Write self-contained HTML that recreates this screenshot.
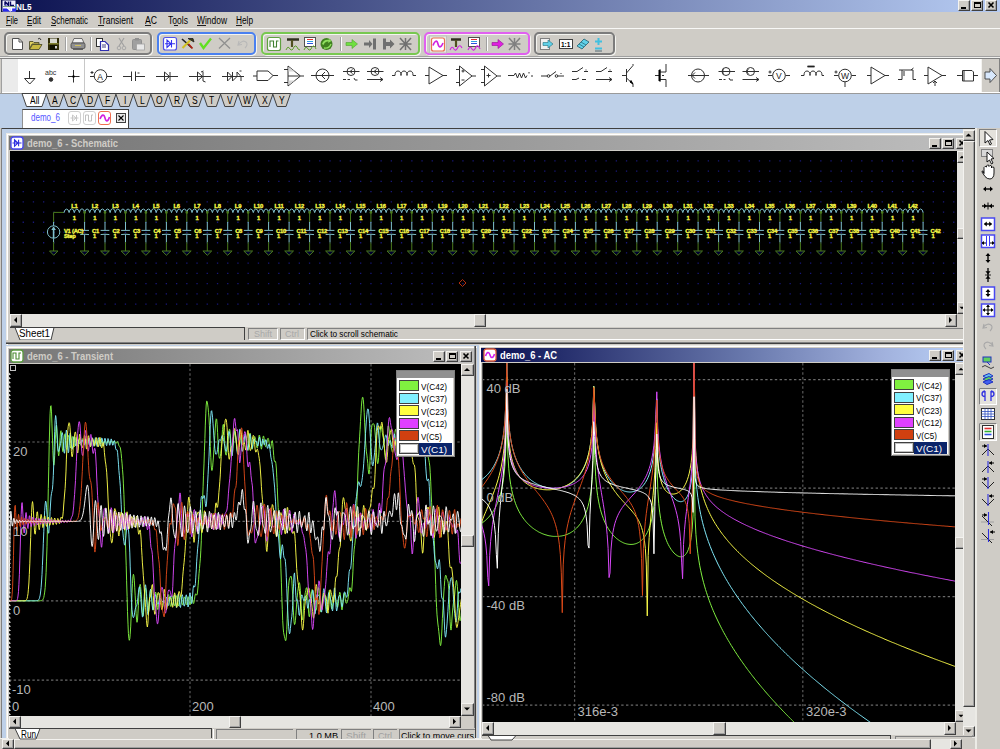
<!DOCTYPE html><html><head><meta charset="utf-8"><style>
*{margin:0;padding:0;box-sizing:border-box}
html,body{width:1000px;height:749px;overflow:hidden;background:#cfccc6;font-family:"Liberation Sans",sans-serif;position:relative}
.a{position:absolute}
.t{position:absolute;white-space:nowrap;line-height:1;transform-origin:0 0}
svg{position:absolute;overflow:visible}
</style></head><body>
<div class="a" style="left:0px;top:0px;width:1000px;height:12px;background:linear-gradient(to right,rgb(11,17,80),rgb(182,203,242))"></div><div class="a" style="left:0px;top:0px;width:1px;height:12px;background:#cfccc6"></div><svg style="left:2px;top:0px" width="14" height="12" viewBox="0 0 14 12"><rect x="0.5" y="0.5" width="13" height="11" fill="#f0f0ff"/><rect x="1" y="8.5" width="13" height="3" fill="#2828f0"/><path d="M3 1.5 V5.5 M3 1.5 L6.5 5.5 V1.5 M8.5 1.5 V5.5 H12" stroke="#080860" stroke-width="1.4" fill="none"/><path d="M3 4.5 L6.5 5.5 L3 5.5 Z" fill="#2020c0"/><path d="M1 6.5 H13.5" stroke="#80a080" stroke-width="1"/><path d="M5 7.5 L8 10.5 L8 7.5 M9.5 7.5 V11" stroke="#fff" stroke-width="1.3" fill="none"/></svg><div class="t" style="left:16px;top:1.5px;font-size:9.5px;color:#fff;font-weight:bold;transform:scaleX(0.864);">NL5</div><div class="a" style="left:958px;top:0px;width:12px;height:11px;background:#cfccc6;border-top:1px solid #f4f3f0;border-left:1px solid #f4f3f0;border-right:1px solid #404040;border-bottom:1px solid #404040;box-shadow:inset -1px -1px 0 #a0a0a0"></div><div class="a" style="left:971px;top:0px;width:12px;height:11px;background:#cfccc6;border-top:1px solid #f4f3f0;border-left:1px solid #f4f3f0;border-right:1px solid #404040;border-bottom:1px solid #404040;box-shadow:inset -1px -1px 0 #a0a0a0"></div><div class="a" style="left:985px;top:0px;width:12px;height:11px;background:#cfccc6;border-top:1px solid #f4f3f0;border-left:1px solid #f4f3f0;border-right:1px solid #404040;border-bottom:1px solid #404040;box-shadow:inset -1px -1px 0 #a0a0a0"></div><div class="a" style="left:961px;top:7px;width:5px;height:2px;background:#000"></div><div class="a" style="left:974px;top:2px;width:7px;height:6px;border:1px solid #000;border-top:2px solid #000"></div><svg style="left:985px;top:0px" width="12" height="11" viewBox="0 0 12 11"><path d="M3.5 2.5 L8.5 7.5 M8.5 2.5 L3.5 7.5" stroke="#000" stroke-width="1.6"/></svg><div class="t" style="left:6px;top:16px;font-size:10px;color:#000;transform:scaleX(0.745);">File</div><div class="t" style="left:27px;top:16px;font-size:10px;color:#000;transform:scaleX(0.812);">Edit</div><div class="t" style="left:51px;top:16px;font-size:10px;color:#000;transform:scaleX(0.792);">Schematic</div><div class="t" style="left:98px;top:16px;font-size:10px;color:#000;transform:scaleX(0.847);">Transient</div><div class="t" style="left:145px;top:16px;font-size:10px;color:#000;transform:scaleX(0.864);">AC</div><div class="t" style="left:168px;top:16px;font-size:10px;color:#000;transform:scaleX(0.857);">Tools</div><div class="t" style="left:197px;top:16px;font-size:10px;color:#000;transform:scaleX(0.843);">Window</div><div class="t" style="left:236px;top:16px;font-size:10px;color:#000;transform:scaleX(0.826);">Help</div><div class="a" style="left:6px;top:25px;width:5px;height:1px;background:#202020"></div><div class="a" style="left:27px;top:25px;width:5px;height:1px;background:#202020"></div><div class="a" style="left:51px;top:25px;width:5px;height:1px;background:#202020"></div><div class="a" style="left:98px;top:25px;width:6px;height:1px;background:#202020"></div><div class="a" style="left:145px;top:25px;width:6px;height:1px;background:#202020"></div><div class="a" style="left:174px;top:25px;width:4px;height:1px;background:#202020"></div><div class="a" style="left:197px;top:25px;width:9px;height:1px;background:#202020"></div><div class="a" style="left:236px;top:25px;width:6px;height:1px;background:#202020"></div><div class="a" style="left:0px;top:28px;width:1000px;height:1px;background:#f8f8f6"></div><div class="a" style="left:0px;top:56px;width:1000px;height:1px;background:#a0a0a0"></div><div class="a" style="left:0px;top:57px;width:1000px;height:1px;background:#f0f0ee"></div><div class="a" style="left:4px;top:32px;width:148px;height:23px;border:2px solid #7c7c7c;border-radius:5px;box-shadow:inset 1px 1px 0 #f4f4f0,1px 1px 0 #f4f4f0"></div><div class="a" style="left:157px;top:32px;width:99px;height:23px;border:2px solid #4a80f0;border-radius:5px;box-shadow:inset 1px 1px 0 #f4f4f0,1px 1px 0 #f4f4f0"></div><div class="a" style="left:261px;top:32px;width:159px;height:23px;border:2px solid #78c850;border-radius:5px;box-shadow:inset 1px 1px 0 #f4f4f0,1px 1px 0 #f4f4f0"></div><div class="a" style="left:424px;top:32px;width:106px;height:23px;border:2px solid #e060f0;border-radius:5px;box-shadow:inset 1px 1px 0 #f4f4f0,1px 1px 0 #f4f4f0"></div><div class="a" style="left:534px;top:32px;width:81px;height:23px;border:2px solid #7c7c7c;border-radius:5px;box-shadow:inset 1px 1px 0 #f4f4f0,1px 1px 0 #f4f4f0"></div><div class="a" style="left:0px;top:58px;width:1000px;height:1px;background:#808080"></div><div class="a" style="left:1px;top:59px;width:999px;height:34px;background:#fff"></div><div class="a" style="left:1px;top:59px;width:1px;height:34px;background:#a0a0a0"></div><div class="a" style="left:2px;top:59px;width:16px;height:33px;background:#ebebeb"></div><div class="a" style="left:84px;top:59px;width:1px;height:33px;background:#c8c8c8"></div><div class="a" style="left:981px;top:59px;width:19px;height:33px;background:#cfccc6;border-left:1px solid #f4f3f0;border-right:1px solid #808080"></div><div class="a" style="left:0px;top:93px;width:1000px;height:1px;background:#9a9a9a"></div><div class="a" style="left:0px;top:94px;width:1000px;height:34px;background:#bed0e8"></div><div class="a" style="left:0px;top:128px;width:975px;height:621px;background:#bed0e8"></div><div class="a" style="left:0px;top:128px;width:975px;height:1px;background:#404040"></div><div class="a" style="left:0px;top:128px;width:2px;height:621px;background:#cfccc6"></div><div class="a" style="left:1px;top:128px;width:1px;height:621px;background:#808080"></div><svg style="left:0px;top:0px" width="1000" height="749" viewBox="0 0 1000 749"><polygon points="22,93.5 26.5,106.5 42,106.5 46.5,93.5" fill="#fff" stroke="#404040" stroke-width="1"/><polygon points="46,93.5 50.5,106.5 59.43,106.5 63.93,93.5" fill="#cfccc6" stroke="#404040" stroke-width="1"/><polygon points="63.43,93.5 67.93,106.5 76.86,106.5 81.36,93.5" fill="#cfccc6" stroke="#404040" stroke-width="1"/><polygon points="80.86,93.5 85.36,106.5 94.28999999999999,106.5 98.78999999999999,93.5" fill="#cfccc6" stroke="#404040" stroke-width="1"/><polygon points="98.28999999999999,93.5 102.78999999999999,106.5 111.72,106.5 116.22,93.5" fill="#cfccc6" stroke="#404040" stroke-width="1"/><polygon points="115.72,93.5 120.22,106.5 129.15,106.5 133.65,93.5" fill="#cfccc6" stroke="#404040" stroke-width="1"/><polygon points="133.15,93.5 137.65,106.5 146.57999999999998,106.5 151.07999999999998,93.5" fill="#cfccc6" stroke="#404040" stroke-width="1"/><polygon points="150.57999999999998,93.5 155.07999999999998,106.5 164.01,106.5 168.51,93.5" fill="#cfccc6" stroke="#404040" stroke-width="1"/><polygon points="168.01,93.5 172.51,106.5 181.44,106.5 185.94,93.5" fill="#cfccc6" stroke="#404040" stroke-width="1"/><polygon points="185.44,93.5 189.94,106.5 198.87,106.5 203.37,93.5" fill="#cfccc6" stroke="#404040" stroke-width="1"/><polygon points="202.87,93.5 207.37,106.5 216.3,106.5 220.8,93.5" fill="#cfccc6" stroke="#404040" stroke-width="1"/><polygon points="220.3,93.5 224.8,106.5 233.73,106.5 238.23,93.5" fill="#cfccc6" stroke="#404040" stroke-width="1"/><polygon points="237.73,93.5 242.23,106.5 251.16,106.5 255.66,93.5" fill="#cfccc6" stroke="#404040" stroke-width="1"/><polygon points="255.16,93.5 259.65999999999997,106.5 268.59000000000003,106.5 273.09000000000003,93.5" fill="#cfccc6" stroke="#404040" stroke-width="1"/><polygon points="272.59000000000003,93.5 277.09000000000003,106.5 286.02,106.5 290.52,93.5" fill="#cfccc6" stroke="#404040" stroke-width="1"/></svg><div class="t" style="left:29.7751953125px;top:96px;font-size:10px;color:#000;transform:scaleX(0.850);">All</div><div class="t" style="left:52.379453125000005px;top:96px;font-size:10px;color:#000;transform:scaleX(0.850);">A</div><div class="t" style="left:69.57537109375px;top:96px;font-size:10px;color:#000;transform:scaleX(0.850);">C</div><div class="t" style="left:87.00537109374999px;top:96px;font-size:10px;color:#000;transform:scaleX(0.850);">D</div><div class="t" style="left:104.90851562499999px;top:96px;font-size:10px;color:#000;transform:scaleX(0.850);">F</div><div class="t" style="left:123.75462890625px;top:96px;font-size:10px;color:#000;transform:scaleX(0.850);">I</div><div class="t" style="left:140.00093750000002px;top:96px;font-size:10px;color:#000;transform:scaleX(0.850);">L</div><div class="t" style="left:156.48962890624998px;top:96px;font-size:10px;color:#000;transform:scaleX(0.850);">O</div><div class="t" style="left:174.15537109375px;top:96px;font-size:10px;color:#000;transform:scaleX(0.850);">R</div><div class="t" style="left:191.819453125px;top:96px;font-size:10px;color:#000;transform:scaleX(0.850);">S</div><div class="t" style="left:209.48851562500002px;top:96px;font-size:10px;color:#000;transform:scaleX(0.850);">T</div><div class="t" style="left:226.67945312499998px;top:96px;font-size:10px;color:#000;transform:scaleX(0.850);">V</div><div class="t" style="left:242.93406249999998px;top:96px;font-size:10px;color:#000;transform:scaleX(0.850);">W</div><div class="t" style="left:261.539453125px;top:96px;font-size:10px;color:#000;transform:scaleX(0.850);">X</div><div class="t" style="left:278.96945312500003px;top:96px;font-size:10px;color:#000;transform:scaleX(0.850);">Y</div><div class="a" style="left:22px;top:109px;width:107px;height:19px;background:#fff;border-top:1px solid #404040;border-left:1px solid #909090;border-right:1px solid #404040"></div><div class="t" style="left:31px;top:113px;font-size:10px;color:#5555ff;transform:scaleX(0.802);">demo_6</div><svg style="left:68px;top:111px" width="58" height="15" viewBox="0 0 58 15"><rect x="0.5" y="0.5" width="12" height="13" rx="2.5" fill="#fff" stroke="#d0d0d0"/>
<path d="M2.5 7 H10.5 M4.5 4 V10 L8 7 Z M8.5 4 V10" stroke="#c8c8c8" fill="none"/>
<rect x="15.5" y="0.5" width="12" height="13" rx="2.5" fill="#fff" stroke="#d0d0d0"/>
<path d="M17.5 10 V4 H20.5 V10 H23.5 V4 H25" stroke="#c0c0c0" fill="none"/>
<rect x="30.5" y="0.5" width="12" height="13" rx="2.5" fill="#fff" stroke="#f07050"/>
<path d="M32 8 C34 3,36 3,37 7 C38 11,40 11,41.5 6" stroke="#d020e0" stroke-width="1.6" fill="none"/>
<rect x="48.5" y="2.5" width="9" height="9" fill="#e8e8e8" stroke="#404040"/>
<path d="M50.5 4.5 L55.5 9.5 M55.5 4.5 L50.5 9.5" stroke="#000" stroke-width="1.1"/></svg><div class="a" style="left:6px;top:133px;width:980px;height:212px;background:#cfccc6;border-top:1px solid #ecebe6;border-left:1px solid #ecebe6;box-shadow:inset 1px 1px 0 #fff"></div><div class="a" style="left:9px;top:136px;width:981px;height:14px;background:linear-gradient(to right,rgb(117,117,117),rgb(191,191,191))"></div><div class="a" style="left:9px;top:150px;width:960px;height:1px;background:#cfccc6"></div><div class="a" style="left:10px;top:151px;width:947px;height:163px;background:#000"></div><div class="t" style="left:27px;top:139px;font-size:10px;color:#cfccc6;font-weight:bold;transform:scaleX(0.941);">demo_6 - Schematic</div><div class="a" style="left:929px;top:138px;width:12px;height:11px;background:#cfccc6;border-top:1px solid #f4f3f0;border-left:1px solid #f4f3f0;border-right:1px solid #404040;border-bottom:1px solid #404040;box-shadow:inset -1px -1px 0 #a0a0a0"></div><div class="a" style="left:942px;top:138px;width:12px;height:11px;background:#cfccc6;border-top:1px solid #f4f3f0;border-left:1px solid #f4f3f0;border-right:1px solid #404040;border-bottom:1px solid #404040;box-shadow:inset -1px -1px 0 #a0a0a0"></div><div class="a" style="left:956px;top:138px;width:12px;height:11px;background:#cfccc6;border-top:1px solid #f4f3f0;border-left:1px solid #f4f3f0;border-right:1px solid #404040;border-bottom:1px solid #404040;box-shadow:inset -1px -1px 0 #a0a0a0"></div><div class="a" style="left:932px;top:145px;width:5px;height:2px;background:#000"></div><div class="a" style="left:945px;top:140px;width:7px;height:6px;border:1px solid #000;border-top:2px solid #000"></div><svg style="left:956px;top:138px" width="12" height="11" viewBox="0 0 12 11"><path d="M3.5 2.5 L8.5 7.5 M8.5 2.5 L3.5 7.5" stroke="#000" stroke-width="1.6"/></svg><div class="a" style="left:957px;top:151px;width:6px;height:163px;background:#e6e5e1"></div><div class="a" style="left:957px;top:151px;width:12px;height:12px;background:#cfccc6;border-top:1px solid #f4f3f0;border-left:1px solid #f4f3f0;border-right:1px solid #404040;border-bottom:1px solid #404040;box-shadow:inset -1px -1px 0 #a0a0a0"></div><svg style="left:0px;top:0px" width="1000" height="749" viewBox="0 0 1000 749"><polygon points="959.5,158.25 964.5,158.25 962,155.75" fill="#000"/></svg><div class="a" style="left:957px;top:228px;width:12px;height:11px;background:#cfccc6;border-top:1px solid #f4f3f0;border-left:1px solid #f4f3f0;border-right:1px solid #404040;border-bottom:1px solid #404040;box-shadow:inset -1px -1px 0 #a0a0a0"></div><div class="a" style="left:957px;top:302px;width:12px;height:12px;background:#cfccc6;border-top:1px solid #f4f3f0;border-left:1px solid #f4f3f0;border-right:1px solid #404040;border-bottom:1px solid #404040;box-shadow:inset -1px -1px 0 #a0a0a0"></div><svg style="left:0px;top:0px" width="1000" height="749" viewBox="0 0 1000 749"><polygon points="959.5,306.75 964.5,306.75 962,309.25" fill="#000"/></svg><div class="a" style="left:10px;top:314px;width:947px;height:13px;background:#e6e5e1"></div><div class="a" style="left:10px;top:314px;width:12px;height:13px;background:#cfccc6;border-top:1px solid #f4f3f0;border-left:1px solid #f4f3f0;border-right:1px solid #404040;border-bottom:1px solid #404040;box-shadow:inset -1px -1px 0 #a0a0a0"></div><svg style="left:0px;top:0px" width="1000" height="749" viewBox="0 0 1000 749"><polygon points="17.0,317.0 17.0,323.0 14.0,320.0" fill="#000"/></svg><div class="a" style="left:474px;top:314px;width:12px;height:13px;background:#cfccc6;border-top:1px solid #f4f3f0;border-left:1px solid #f4f3f0;border-right:1px solid #404040;border-bottom:1px solid #404040;box-shadow:inset -1px -1px 0 #a0a0a0"></div><div class="a" style="left:945px;top:314px;width:12px;height:13px;background:#cfccc6;border-top:1px solid #f4f3f0;border-left:1px solid #f4f3f0;border-right:1px solid #404040;border-bottom:1px solid #404040;box-shadow:inset -1px -1px 0 #a0a0a0"></div><svg style="left:0px;top:0px" width="1000" height="749" viewBox="0 0 1000 749"><polygon points="949.0,317.0 949.0,323.0 952.0,320.0" fill="#000"/></svg><div class="a" style="left:10px;top:327px;width:953px;height:14px;background:#cfccc6"></div><div class="a" style="left:10px;top:327px;width:235px;height:1px;background:#404040"></div><div class="a" style="left:244px;top:327px;width:1px;height:13px;background:#404040"></div><svg style="left:10px;top:327px" width="60" height="14" viewBox="0 0 60 14"><polygon points="5,0.5 10,13 41,13 44,0.5" fill="#fff" stroke="#404040"/></svg><div class="t" style="left:19px;top:329px;font-size:10px;color:#000;transform:scaleX(0.978);">Sheet1</div><div class="a" style="left:248px;top:328px;width:30px;height:12px;border-top:1px solid #808080;border-left:1px solid #808080;border-bottom:1px solid #fff;border-right:1px solid #fff"></div><div class="a" style="left:280px;top:328px;width:25px;height:12px;border-top:1px solid #808080;border-left:1px solid #808080;border-bottom:1px solid #fff;border-right:1px solid #fff"></div><div class="a" style="left:307px;top:328px;width:673px;height:12px;border-top:1px solid #808080;border-left:1px solid #808080;border-bottom:1px solid #fff;border-right:1px solid #fff"></div><div class="t" style="left:254px;top:330px;font-size:9px;color:#a8a8a8;transform:scaleX(0.999);">Shift</div><div class="t" style="left:285px;top:330px;font-size:9px;color:#a8a8a8;transform:scaleX(1.000);">Ctrl</div><div class="t" style="left:310px;top:330px;font-size:9px;color:#000;transform:scaleX(0.916);">Click to scroll schematic</div><div class="a" style="left:6px;top:340px;width:970px;height:2px;background:#cfccc6"></div><div class="a" style="left:6px;top:342px;width:970px;height:1px;background:#808080"></div><div class="a" style="left:6px;top:343px;width:970px;height:1px;background:#404040"></div><div class="a" style="left:6px;top:346px;width:471px;height:403px;background:#cfccc6;border-top:1px solid #ecebe6;border-left:1px solid #ecebe6;box-shadow:inset 1px 1px 0 #fff"></div><div class="a" style="left:474px;top:346px;width:1px;height:403px;background:#808080"></div><div class="a" style="left:475px;top:346px;width:1px;height:403px;background:#404040"></div><div class="a" style="left:9px;top:349px;width:465px;height:14px;background:linear-gradient(to right,rgb(117,117,117),rgb(191,191,191))"></div><div class="t" style="left:27px;top:352px;font-size:10px;color:#cfccc6;font-weight:bold;transform:scaleX(0.944);">demo_6 - Transient</div><div class="a" style="left:433px;top:351px;width:12px;height:11px;background:#cfccc6;border-top:1px solid #f4f3f0;border-left:1px solid #f4f3f0;border-right:1px solid #404040;border-bottom:1px solid #404040;box-shadow:inset -1px -1px 0 #a0a0a0"></div><div class="a" style="left:446px;top:351px;width:12px;height:11px;background:#cfccc6;border-top:1px solid #f4f3f0;border-left:1px solid #f4f3f0;border-right:1px solid #404040;border-bottom:1px solid #404040;box-shadow:inset -1px -1px 0 #a0a0a0"></div><div class="a" style="left:460px;top:351px;width:12px;height:11px;background:#cfccc6;border-top:1px solid #f4f3f0;border-left:1px solid #f4f3f0;border-right:1px solid #404040;border-bottom:1px solid #404040;box-shadow:inset -1px -1px 0 #a0a0a0"></div><div class="a" style="left:436px;top:358px;width:5px;height:2px;background:#000"></div><div class="a" style="left:449px;top:353px;width:7px;height:6px;border:1px solid #000;border-top:2px solid #000"></div><svg style="left:460px;top:351px" width="12" height="11" viewBox="0 0 12 11"><path d="M3.5 2.5 L8.5 7.5 M8.5 2.5 L3.5 7.5" stroke="#000" stroke-width="1.6"/></svg><div class="a" style="left:9px;top:364px;width:452px;height:352px;background:#000"></div><div class="a" style="left:461px;top:364px;width:13px;height:352px;background:#e6e5e1"></div><div class="a" style="left:461px;top:364px;width:13px;height:12px;background:#cfccc6;border-top:1px solid #f4f3f0;border-left:1px solid #f4f3f0;border-right:1px solid #404040;border-bottom:1px solid #404040;box-shadow:inset -1px -1px 0 #a0a0a0"></div><svg style="left:0px;top:0px" width="1000" height="749" viewBox="0 0 1000 749"><polygon points="464.0,371.0 470.0,371.0 467.0,368.0" fill="#000"/></svg><div class="a" style="left:461px;top:535px;width:13px;height:12px;background:#cfccc6;border-top:1px solid #f4f3f0;border-left:1px solid #f4f3f0;border-right:1px solid #404040;border-bottom:1px solid #404040;box-shadow:inset -1px -1px 0 #a0a0a0"></div><div class="a" style="left:461px;top:703px;width:13px;height:13px;background:#cfccc6;border-top:1px solid #f4f3f0;border-left:1px solid #f4f3f0;border-right:1px solid #404040;border-bottom:1px solid #404040;box-shadow:inset -1px -1px 0 #a0a0a0"></div><svg style="left:0px;top:0px" width="1000" height="749" viewBox="0 0 1000 749"><polygon points="464.0,707.5 470.0,707.5 467.0,710.5" fill="#000"/></svg><div class="a" style="left:9px;top:716px;width:452px;height:12px;background:#e6e5e1"></div><div class="a" style="left:9px;top:716px;width:12px;height:12px;background:#cfccc6;border-top:1px solid #f4f3f0;border-left:1px solid #f4f3f0;border-right:1px solid #404040;border-bottom:1px solid #404040;box-shadow:inset -1px -1px 0 #a0a0a0"></div><svg style="left:0px;top:0px" width="1000" height="749" viewBox="0 0 1000 749"><polygon points="16.0,718.5 16.0,724.5 13.0,721.5" fill="#000"/></svg><div class="a" style="left:229px;top:716px;width:12px;height:12px;background:#cfccc6;border-top:1px solid #f4f3f0;border-left:1px solid #f4f3f0;border-right:1px solid #404040;border-bottom:1px solid #404040;box-shadow:inset -1px -1px 0 #a0a0a0"></div><div class="a" style="left:449px;top:716px;width:12px;height:12px;background:#cfccc6;border-top:1px solid #f4f3f0;border-left:1px solid #f4f3f0;border-right:1px solid #404040;border-bottom:1px solid #404040;box-shadow:inset -1px -1px 0 #a0a0a0"></div><svg style="left:0px;top:0px" width="1000" height="749" viewBox="0 0 1000 749"><polygon points="453.0,718.5 453.0,724.5 456.0,721.5" fill="#000"/></svg><div class="a" style="left:9px;top:728px;width:466px;height:11px;background:#cfccc6"></div><div class="a" style="left:479px;top:345px;width:520px;height:404px;background:#cfccc6;border-top:1px solid #ecebe6;border-left:1px solid #ecebe6;box-shadow:inset 1px 1px 0 #fff"></div><div class="a" style="left:481px;top:348px;width:500px;height:14px;background:linear-gradient(to right,rgb(7,14,81) 1px,rgb(52,62,122) 119px,rgb(106,122,174) 269px,rgb(160,176,220) 399px,rgb(186,208,246) 482px)"></div><div class="t" style="left:500px;top:351px;font-size:10px;color:#fff;font-weight:bold;transform:scaleX(0.938);">demo_6 - AC</div><div class="a" style="left:929px;top:350px;width:12px;height:11px;background:#cfccc6;border-top:1px solid #f4f3f0;border-left:1px solid #f4f3f0;border-right:1px solid #404040;border-bottom:1px solid #404040;box-shadow:inset -1px -1px 0 #a0a0a0"></div><div class="a" style="left:942px;top:350px;width:12px;height:11px;background:#cfccc6;border-top:1px solid #f4f3f0;border-left:1px solid #f4f3f0;border-right:1px solid #404040;border-bottom:1px solid #404040;box-shadow:inset -1px -1px 0 #a0a0a0"></div><div class="a" style="left:956px;top:350px;width:12px;height:11px;background:#cfccc6;border-top:1px solid #f4f3f0;border-left:1px solid #f4f3f0;border-right:1px solid #404040;border-bottom:1px solid #404040;box-shadow:inset -1px -1px 0 #a0a0a0"></div><div class="a" style="left:932px;top:357px;width:5px;height:2px;background:#000"></div><div class="a" style="left:945px;top:352px;width:7px;height:6px;border:1px solid #000;border-top:2px solid #000"></div><svg style="left:956px;top:350px" width="12" height="11" viewBox="0 0 12 11"><path d="M3.5 2.5 L8.5 7.5 M8.5 2.5 L3.5 7.5" stroke="#000" stroke-width="1.6"/></svg><div class="a" style="left:482px;top:363px;width:473px;height:359px;background:#000"></div><div class="a" style="left:955px;top:363px;width:8px;height:359px;background:#e6e5e1"></div><div class="a" style="left:955px;top:363px;width:12px;height:12px;background:#cfccc6;border-top:1px solid #f4f3f0;border-left:1px solid #f4f3f0;border-right:1px solid #404040;border-bottom:1px solid #404040;box-shadow:inset -1px -1px 0 #a0a0a0"></div><svg style="left:0px;top:0px" width="1000" height="749" viewBox="0 0 1000 749"><polygon points="958.5,370.25 963.5,370.25 961,367.75" fill="#000"/></svg><div class="a" style="left:955px;top:537px;width:12px;height:12px;background:#cfccc6;border-top:1px solid #f4f3f0;border-left:1px solid #f4f3f0;border-right:1px solid #404040;border-bottom:1px solid #404040;box-shadow:inset -1px -1px 0 #a0a0a0"></div><div class="a" style="left:955px;top:710px;width:12px;height:12px;background:#cfccc6;border-top:1px solid #f4f3f0;border-left:1px solid #f4f3f0;border-right:1px solid #404040;border-bottom:1px solid #404040;box-shadow:inset -1px -1px 0 #a0a0a0"></div><svg style="left:0px;top:0px" width="1000" height="749" viewBox="0 0 1000 749"><polygon points="958.5,714.75 963.5,714.75 961,717.25" fill="#000"/></svg><div class="a" style="left:482px;top:722px;width:473px;height:13px;background:#e6e5e1"></div><div class="a" style="left:482px;top:722px;width:12px;height:13px;background:#cfccc6;border-top:1px solid #f4f3f0;border-left:1px solid #f4f3f0;border-right:1px solid #404040;border-bottom:1px solid #404040;box-shadow:inset -1px -1px 0 #a0a0a0"></div><svg style="left:0px;top:0px" width="1000" height="749" viewBox="0 0 1000 749"><polygon points="489.0,725.0 489.0,731.0 486.0,728.0" fill="#000"/></svg><div class="a" style="left:713px;top:722px;width:13px;height:13px;background:#cfccc6;border-top:1px solid #f4f3f0;border-left:1px solid #f4f3f0;border-right:1px solid #404040;border-bottom:1px solid #404040;box-shadow:inset -1px -1px 0 #a0a0a0"></div><div class="a" style="left:944px;top:722px;width:12px;height:13px;background:#cfccc6;border-top:1px solid #f4f3f0;border-left:1px solid #f4f3f0;border-right:1px solid #404040;border-bottom:1px solid #404040;box-shadow:inset -1px -1px 0 #a0a0a0"></div><svg style="left:0px;top:0px" width="1000" height="749" viewBox="0 0 1000 749"><polygon points="948.0,725.0 948.0,731.0 951.0,728.0" fill="#000"/></svg><div class="a" style="left:482px;top:735px;width:490px;height:4px;background:#cfccc6"></div><div class="a" style="left:963px;top:129px;width:12px;height:609px;background:#e6e5e1"></div><div class="a" style="left:963px;top:130px;width:12px;height:11px;background:#cfccc6;border-top:1px solid #f4f3f0;border-left:1px solid #f4f3f0;border-right:1px solid #404040;border-bottom:1px solid #404040;box-shadow:inset -1px -1px 0 #a0a0a0"></div><svg style="left:0px;top:0px" width="1000" height="749" viewBox="0 0 1000 749"><polygon points="965.5,136.5 971.5,136.5 968.5,133.5" fill="#000"/></svg><div class="a" style="left:963px;top:141px;width:12px;height:566px;background:#cfccc6;border-top:1px solid #f4f3f0;border-left:1px solid #f4f3f0;border-right:1px solid #404040;border-bottom:1px solid #404040;box-shadow:inset -1px -1px 0 #a0a0a0"></div><div class="a" style="left:963px;top:726px;width:12px;height:11px;background:#cfccc6;border-top:1px solid #f4f3f0;border-left:1px solid #f4f3f0;border-right:1px solid #404040;border-bottom:1px solid #404040;box-shadow:inset -1px -1px 0 #a0a0a0"></div><svg style="left:0px;top:0px" width="1000" height="749" viewBox="0 0 1000 749"><polygon points="965.5,729.5 971.5,729.5 968.5,732.5" fill="#000"/></svg><div class="a" style="left:0px;top:738px;width:963px;height:11px;background:#cfccc6"></div><div class="a" style="left:0px;top:738px;width:963px;height:1px;background:#f0f0ee"></div><div class="a" style="left:2px;top:739px;width:12px;height:10px;background:#cfccc6;border-top:1px solid #f4f3f0;border-left:1px solid #f4f3f0;border-right:1px solid #404040;border-bottom:1px solid #404040;box-shadow:inset -1px -1px 0 #a0a0a0"></div><svg style="left:0px;top:0px" width="1000" height="749" viewBox="0 0 1000 749"><polygon points="9.0,740.5 9.0,746.5 6.0,743.5" fill="#000"/></svg><div class="a" style="left:14px;top:739px;width:917px;height:10px;background:#cfccc6;border-top:1px solid #f4f3f0;border-left:1px solid #f4f3f0;border-right:1px solid #404040;border-bottom:1px solid #404040;box-shadow:inset -1px -1px 0 #a0a0a0"></div><div class="a" style="left:931px;top:739px;width:19px;height:10px;background:#e6e5e1"></div><div class="a" style="left:950px;top:739px;width:12px;height:10px;background:#cfccc6;border-top:1px solid #f4f3f0;border-left:1px solid #f4f3f0;border-right:1px solid #404040;border-bottom:1px solid #404040;box-shadow:inset -1px -1px 0 #a0a0a0"></div><svg style="left:0px;top:0px" width="1000" height="749" viewBox="0 0 1000 749"><polygon points="954.0,740.5 954.0,746.5 957.0,743.5" fill="#000"/></svg><div class="a" style="left:963px;top:738px;width:12px;height:11px;background:#cfccc6"></div><div class="a" style="left:975px;top:128px;width:25px;height:621px;background:#cfccc6;border-left:2px solid #ecebe6"></div><div class="a" style="left:979px;top:129px;width:18px;height:18px;background:#e4e2dc;border-top:1px solid #808080;border-left:1px solid #808080;border-right:1px solid #fff;border-bottom:1px solid #fff"></div><svg style="left:0px;top:0px" width="1000" height="749" viewBox="0 0 1000 749"><path d="M12.5 38.5 H19 L22.5 42 V49.5 H12.5 Z" fill="#fff" stroke="#505050"/><path d="M19 38.5 V42 H22.5" fill="none" stroke="#505050"/><path d="M29.5 41.5 H33 L34 42.5 H39 V44 H32 L29.5 49 Z" fill="#e0d060" stroke="#404020" stroke-width=".8"/><path d="M29.5 49.5 L32.5 44.5 H42 L39 49.5 Z" fill="#c8b840" stroke="#404020" stroke-width=".8"/><path d="M38 39 Q40 37 41 40" fill="none" stroke="#303030"/><rect x="48" y="38" width="11" height="12" fill="#302c08"/><rect x="50" y="38.5" width="7" height="4.5" fill="#d8d8d0"/><rect x="50" y="45" width="7" height="5" fill="#101000"/><rect x="48.5" y="43" width="10" height="1.5" fill="#808030"/><rect x="55" y="46" width="2" height="2.5" fill="#d0d0d0"/><rect x="65" y="37" width="1" height="14" fill="#a0a0a0"/><rect x="66" y="37" width="1" height="14" fill="#fff"/><path d="M74 38.5 H82 L84 43 H72 Z" fill="#f0f0f0" stroke="#505050" stroke-width=".8"/><rect x="71" y="43" width="14" height="5.5" rx="1.5" fill="#909090" stroke="#404040" stroke-width=".8"/><rect x="75" y="45" width="6" height="1" fill="#d0c060"/><rect x="73" y="48.5" width="10" height="1.5" fill="#606060"/><rect x="90" y="37" width="1" height="14" fill="#a0a0a0"/><rect x="91" y="37" width="1" height="14" fill="#fff"/><rect x="96.5" y="38.5" width="6" height="8" fill="#fff" stroke="#303030"/><path d="M100.5 41.5 H105 L108.5 45 V50.5 H100.5 Z" fill="#fff" stroke="#3030b0" stroke-width="1.2"/><rect x="102" y="44" width="4" height="4" fill="#a0a0c0"/><path d="M119 38 L124 46 M124 38 L119 46" stroke="#a0a0a0" stroke-width="1.2"/><circle cx="119" cy="48" r="1.8" fill="none" stroke="#a8a8a8"/><circle cx="124" cy="48" r="1.8" fill="none" stroke="#a8a8a8"/><rect x="132.5" y="39.5" width="9" height="10" rx="1" fill="#a0a0a0" stroke="#909090"/><rect x="136.5" y="44" width="8" height="6" fill="#e8e8e8" stroke="#a0a0a0" stroke-width=".8"/><rect x="135" y="38" width="4" height="2.5" fill="#909090"/><rect x="163.5" y="37.5" width="13" height="12.5" rx="2" fill="#fff" stroke="#5050e8" stroke-width="1.2"/><path d="M165 43.7 H175 M167 40 V47.5 L171 43.7 Z M171.5 40 V47.5" stroke="#3030f0" fill="none" stroke-width="1.1"/><path d="M182 39 L192 48" stroke="#202020" stroke-width="1.6"/><path d="M182.5 48 L190 40.5" stroke="#d0c020" stroke-width="2.2"/><path d="M188 38.5 L193 38.5 L194 42 Z" fill="#404010" stroke="#202020" stroke-width=".8"/><path d="M188.5 44 L192.5 48.5" stroke="#b02010" stroke-width="1.6"/><path d="M200 43 L203.5 48 L211 38.5" stroke="#60e020" stroke-width="2.3" fill="none"/><path d="M219 38 L230 48.5 M230 38 L219 48.5" stroke="#909090" stroke-width="1.3"/><path d="M239 41 L238 45 L242 44.5" fill="none" stroke="#b8b8b8" stroke-width="1.1"/><path d="M238.5 44.5 Q243 39 246.5 42.5 Q248 45 245 48" fill="none" stroke="#b8b8b8" stroke-width="1.1"/><rect x="267.5" y="37.5" width="13" height="13" rx="2" fill="#fff" stroke="#60a040" stroke-width="1.2"/><path d="M270 47 V41 H273.5 V47 H276.5 V41 H278.5" stroke="#408030" fill="none" stroke-width="1.1"/><path d="M287 39.5 H299" stroke="#303020" stroke-width="2.5"/><path d="M292 40 V47" stroke="#505020" stroke-width="2.2"/><path d="M286 50 Q288 45 290 49 Q292 52 294 47 Q296 44 298 49 L300 50" stroke="#60a030" fill="none" stroke-width="1"/><rect x="304.5" y="37.5" width="11" height="9" fill="#fff" stroke="#505050"/><path d="M307 39.5 H313 M307 41.5 H313 M307 43.5 H313" stroke="#e03030"/><path d="M307 41.5 H313" stroke="#30a0e0"/><path d="M307 43.5 H313" stroke="#3050e0"/><path d="M304 50 Q306 45 308 49 Q310 52 312 47 Q314 44 316 49" stroke="#60a030" fill="none" stroke-width="1"/><circle cx="326.5" cy="44" r="6" fill="#408020"/><path d="M322 44 Q324 39 329 40 L328 38 L331.5 41 L328 43 L328.5 41.5 Q325 41 323.5 45 Z" fill="#90e060"/><path d="M331 44 Q329 49 324 48" stroke="#90e060" stroke-width="1.4" fill="none"/><rect x="340" y="37" width="1" height="14" fill="#a0a0a0"/><rect x="341" y="37" width="1" height="14" fill="#fff"/><path d="M346 42.5 H352 V39.5 L357.5 44 L352 48.5 V45.5 H346 Z" fill="#70e040" stroke="#50a030" stroke-width=".6"/><path d="M364 42.5 H369 V40 L372.5 44 L369 48 V45.5 H364 Z" fill="#707070"/><rect x="373" y="38.5" width="3" height="11" fill="#707070"/><rect x="383" y="38.5" width="3" height="11" fill="#707070"/><path d="M386 42 H390 V39.5 L394.5 44 L390 48.5 V46 H386 Z" fill="#707070"/><path d="M400 38 L411 50 M411 38 L400 50 M399.5 44 H411.5 M405.5 38 V50" stroke="#707070" stroke-width="1.5"/><rect x="429.5" y="36" width="17" height="17" fill="#e8e6e0" stroke="#c0c0c0"/><rect x="431.5" y="38" width="13" height="13" rx="2" fill="#fff" stroke="#e87050" stroke-width="1.2"/><path d="M433 45.5 C435 40,437 40,438 44 C439 48,441 48,443 43" stroke="#d020e0" stroke-width="1.6" fill="none"/><path d="M451 39.5 H461" stroke="#303020" stroke-width="2.5"/><path d="M456 40 V47" stroke="#505020" stroke-width="2.2"/><path d="M450 50 Q452 45 454 49 Q456 52 458 47 Q460 44 462 48" stroke="#d020e0" fill="none" stroke-width="1.1"/><rect x="468.5" y="37.5" width="11" height="9" fill="#fff" stroke="#505050"/><path d="M471 39.5 H477" stroke="#e03030"/><path d="M471 41.5 H477" stroke="#30a0e0"/><path d="M471 43.5 H477" stroke="#3050e0"/><path d="M468 50 Q470 45 472 49 Q474 52 476 47 Q478 44 480 49" stroke="#d020e0" fill="none" stroke-width="1.1"/><rect x="486" y="37" width="1" height="14" fill="#a0a0a0"/><rect x="487" y="37" width="1" height="14" fill="#fff"/><path d="M492 42.5 H498 V39.5 L503.5 44 L498 48.5 V45.5 H492 Z" fill="#e020e0" stroke="#901090" stroke-width=".6"/><path d="M509 38 L520 50 M520 38 L509 50 M508.5 44 H520.5 M514.5 38 V50" stroke="#808080" stroke-width="1.5"/><rect x="540.5" y="38.5" width="9" height="11" fill="#f0f0f0" stroke="#808080"/><path d="M543 42.5 H548 V40 L553 44 L548 48 V45.5 H543 Z" fill="#60d0e8" stroke="#207080" stroke-width=".6"/><rect x="559.5" y="39.5" width="13" height="9" fill="#fff" stroke="#404040"/><text x="561" y="47" font-size="6.5" font-family="Liberation Sans" font-weight="bold">1:1</text><path d="M577 46 L584 39 L589 42 L582 49 Z" fill="#60d0e8" stroke="#206070" stroke-width=".8"/><path d="M579 44 L584 47 M581 42 L586 45" stroke="#206070" stroke-width=".7"/><path d="M598.5 38 V45 M595 41.5 H602" stroke="#40c0e0" stroke-width="2"/><path d="M595 48.5 H602" stroke="#40c0e0" stroke-width="2"/><path d="M595 51 H602" stroke="#305060" stroke-width=".8"/></svg><svg style="left:0px;top:0px" width="1000" height="749" viewBox="0 0 1000 749"><path d="M29.5 71 V78.5 M24.5 78.5 H35 L29.75 84 Z" stroke="#303030" stroke-width="1" fill="none"/><text x="45" y="75" font-size="7" font-family="Liberation Sans" fill="#303030">abc</text><circle cx="51" cy="79.5" r="1.8" fill="#303030" stroke="#303030"/><path d="M68 76.5 H79.5 M73.5 70 V82.5" stroke="#303030" stroke-width="1" fill="none"/><circle cx="73.5" cy="76.5" r="1.2" fill="#000"/><circle cx="100.5" cy="76" r="6.3" stroke="#303030" stroke-width="1" fill="none"/><path d="M90 76.5 H94 M107 76.5 H112 M90.5 72.5 H93.5 M92 71 V74" stroke="#303030" stroke-width="1" fill="none"/><text x="97.3" y="79.5" font-size="8.5" font-family="Liberation Sans" fill="#202020">A</text><path d="M123 76.5 H131.5 M131.5 71.5 V81 M135.5 71.5 V81 M135.5 76.5 H145 M137.5 73 H139.5" stroke="#303030" stroke-width="1" fill="none"/><path d="M156 76.5 H178 M164.5 72 V81 L169.5 76.5 Z M170 72 V81" stroke="#303030" stroke-width="1" fill="none"/><path d="M189 76.5 H211 M197.5 72 V81 L202.5 76.5 Z M203 72 V81" stroke="#303030" stroke-width="1" fill="none"/><path d="M201 72 L203.5 71 M203 81 L205.5 82" stroke="#303030" stroke-width="1" fill="none"/><path d="M222 76.5 H244 M227.5 72 V81 L232 76.5 Z M232.5 72 V81 L237 76.5 V72 L241 76.5 V81 M239.5 71 H241.5" stroke="#303030" stroke-width="1" fill="none"/><path d="M253 76 H257 M257 71 H268 L273 75.5 L268 80.5 H257 Z M273 75.5 H278" stroke="#303030" stroke-width="1" fill="none"/><path d="M288 66 V86 L300.5 76 Z M284 69.5 H288 M284 82.5 H288 M288 76 H300 M300.5 76 H304" stroke="#303030" stroke-width="1" fill="none"/><path d="M288.5 67 L295 71.5 H288.5 Z M288.5 85 L295 80.5 H288.5Z" fill="#d8d8d8"/><circle cx="322.5" cy="75.5" r="6.5" stroke="#303030" stroke-width="1" fill="none"/><path d="M311 75.5 H334 M325 72 L321.5 75.5 L325 79" stroke="#303030" stroke-width="1" fill="none"/><circle cx="351" cy="71.5" r="4" stroke="#303030" stroke-width="1" fill="none"/><path d="M343 71.5 H359.5 M352.5 69.5 L350 71.5 L352.5 73.5 M343 79.5 H346 M347.5 79.5 H350 M354 78 L355 80 H357.5" stroke="#303030" stroke-width="1" fill="none"/><circle cx="375" cy="71.5" r="4" stroke="#303030" stroke-width="1" fill="none"/><path d="M367 71.5 H383.5 M376.5 69.5 L374 71.5 L376.5 73.5 M367 79.5 H383 M380 77.5 L383 79.5 L380 81.5" stroke="#303030" stroke-width="1" fill="none"/><path d="M392 75.5 H395 Q395 71 398 71 Q401 71 401 75.5 Q401 71 404 71 Q407 71 407 75.5 Q407 71 410 71 Q413 71 413 75.5 H416" stroke="#303030" stroke-width="1" fill="none"/><path d="M425 75.5 H429 M429 67 V84 L443 75.5 Z M443 75.5 H447" stroke="#303030" stroke-width="1" fill="none"/><path d="M456 69.5 H459.5 M456 82.5 H459.5 M459.5 66 V86 L472 76 Z M472 76 H476" stroke="#303030" stroke-width="1" fill="none"/><path d="M461.5 71 H464.5 M463 69.5 V72.5 M461.5 80 H464.5" stroke="#303030" stroke-width="1" fill="none"/><path d="M481 69.5 H484.5 M481 82.5 H484.5 M484.5 66 V86 L497 76 Z M497 76 H501" stroke="#303030" stroke-width="1" fill="none"/><path d="M486.5 75.5 H490.5 M488.5 73.5 V77.5" stroke="#303030" stroke-width="1" fill="none"/><path d="M508 75.5 H514 L515.5 73 L517.5 78 L519.5 73 L521.5 78 L523.5 73 L525.5 78 L527 75.5 M529 73.5 V72 M531 76 H533" stroke="#303030" stroke-width="1" fill="none"/><path d="M541 76 H547 M550 76 L556 71.5 M558 76 H564 M561 73 V74" stroke="#303030" stroke-width="1" fill="none"/><circle cx="548.5" cy="76" r="1.3" stroke="#303030" stroke-width="1" fill="none"/><circle cx="556.5" cy="76" r="1.3" stroke="#303030" stroke-width="1" fill="none"/><path d="M572 71.5 H577 L583 67.5 M584 71.5 H588 M586 69.5 V70.5 M572 79.5 H576 L579 78 M582 79.5 H586" stroke="#303030" stroke-width="1" fill="none"/><path d="M596 71.5 H601 L607 67.5 M608 71.5 H612 M610 69.5 V70.5 M596 79.5 H612 M609 77.5 L612 79.5 L609 81.5" stroke="#303030" stroke-width="1" fill="none"/><path d="M622 75.5 H626 M626.5 69 V82 M626.5 73 L633 65.5 V64 M626.5 78 L633 84 V87" stroke="#303030" stroke-width="1" fill="none"/><path d="M630 82 L633 84 L631 80.5 Z" fill="#000" stroke="#000"/><path d="M655 75.5 H659 M660 69 V82 M660 72 H666 V64 M660 79.5 H666 V87 M662 75.5 H664" stroke="#303030" stroke-width="1" fill="none"/><path d="M659.5 70 V81" stroke="#000" stroke-width="2"/><circle cx="698" cy="75.5" r="6.5" stroke="#303030" stroke-width="1" fill="none"/><path d="M688 75.5 H709 M695 72.5 L692 75.5 L695 78.5" stroke="#303030" stroke-width="1" fill="none"/><circle cx="726" cy="71.5" r="4" stroke="#303030" stroke-width="1" fill="none"/><path d="M718.5 71.5 H735 M724 69.5 L721.5 71.5 L724 73.5 M719 79.5 H722 M723.5 79.5 H725.5 M729 78 L730 80 H733" stroke="#303030" stroke-width="1" fill="none"/><circle cx="750.5" cy="71.5" r="4" stroke="#303030" stroke-width="1" fill="none"/><path d="M742.5 71.5 H759 M748.5 69.5 L746 71.5 L748.5 73.5 M742.5 79.5 H759 M756 77.5 L759 79.5 L756 81.5" stroke="#303030" stroke-width="1" fill="none"/><circle cx="779" cy="75.5" r="6.3" stroke="#303030" stroke-width="1" fill="none"/><path d="M768 75.5 H772.5 M785.5 75.5 H790 M768.5 72 H771.5 M770 70.5 V73.5" stroke="#303030" stroke-width="1" fill="none"/><text x="776" y="79" font-size="8.5" font-family="Liberation Sans" fill="#202020">V</text><path d="M801 75.5 H804 Q804 71 807 71 Q810 71 810 75.5 Q810 71 813 71 Q816 71 816 75.5 Q816 71 819 71 Q822 71 822 75.5 H824 M807.5 66.5 H814.5" stroke="#303030" stroke-width="1" fill="none"/><path d="M807.5 66.5 H814.5" stroke="#202020" stroke-width="1.8"/><circle cx="845" cy="75.5" r="6.3" stroke="#303030" stroke-width="1" fill="none"/><path d="M834 75.5 H838.5 M851.5 75.5 H856 M834.5 72 H837.5 M836 70.5 V73.5 M845 82 V87" stroke="#303030" stroke-width="1" fill="none"/><text x="841" y="79" font-size="8.5" font-family="Liberation Sans" fill="#202020">W</text><path d="M867 75.5 H871 M871 67 V84 L885 75.5 Z M885 75.5 H889" stroke="#303030" stroke-width="1" fill="none"/><path d="M898 79.5 H902 V70 H913 V79.5 H916 M899 70 H902 M904 71 V76 M911 70 L913.5 68" stroke="#303030" stroke-width="1" fill="none"/><path d="M924 75.5 H928 M928 67 V84 L942 75.5 Z M942 75.5 H946 M935 86 V81.5 M933 83 L935 81 L937 83" stroke="#303030" stroke-width="1" fill="none"/><path d="M957 75.5 H962 M962.5 70.5 H972 L973.5 72 V81 H962.5 Z M973.5 75.5 H978 M964 70.5 V81" stroke="#303030" stroke-width="1" fill="none"/><path d="M985 72 H990 V68.5 L996.5 75.5 L990 82.5 V79 H985 Z" fill="#d8e8fc" stroke="#404040" stroke-width=".9"/></svg><div class="a" style="left:10px;top:151px;width:947px;height:163px;overflow:hidden"><svg style="left:-10px;top:-151px" width="1000" height="749"><path d="M12.3 160.2h1.3v1.3h-1.3zM22.6 160.2h1.3v1.3h-1.3zM32.8 160.2h1.3v1.3h-1.3zM43.0 160.2h1.3v1.3h-1.3zM53.3 160.2h1.3v1.3h-1.3zM63.5 160.2h1.3v1.3h-1.3zM73.7 160.2h1.3v1.3h-1.3zM83.9 160.2h1.3v1.3h-1.3zM94.2 160.2h1.3v1.3h-1.3zM104.4 160.2h1.3v1.3h-1.3zM114.6 160.2h1.3v1.3h-1.3zM124.8 160.2h1.3v1.3h-1.3zM135.1 160.2h1.3v1.3h-1.3zM145.3 160.2h1.3v1.3h-1.3zM155.5 160.2h1.3v1.3h-1.3zM165.7 160.2h1.3v1.3h-1.3zM176.0 160.2h1.3v1.3h-1.3zM186.2 160.2h1.3v1.3h-1.3zM196.4 160.2h1.3v1.3h-1.3zM206.6 160.2h1.3v1.3h-1.3zM216.9 160.2h1.3v1.3h-1.3zM227.1 160.2h1.3v1.3h-1.3zM237.3 160.2h1.3v1.3h-1.3zM247.5 160.2h1.3v1.3h-1.3zM257.8 160.2h1.3v1.3h-1.3zM268.0 160.2h1.3v1.3h-1.3zM278.2 160.2h1.3v1.3h-1.3zM288.5 160.2h1.3v1.3h-1.3zM298.7 160.2h1.3v1.3h-1.3zM308.9 160.2h1.3v1.3h-1.3zM319.1 160.2h1.3v1.3h-1.3zM329.4 160.2h1.3v1.3h-1.3zM339.6 160.2h1.3v1.3h-1.3zM349.8 160.2h1.3v1.3h-1.3zM360.0 160.2h1.3v1.3h-1.3zM370.3 160.2h1.3v1.3h-1.3zM380.5 160.2h1.3v1.3h-1.3zM390.7 160.2h1.3v1.3h-1.3zM400.9 160.2h1.3v1.3h-1.3zM411.2 160.2h1.3v1.3h-1.3zM421.4 160.2h1.3v1.3h-1.3zM431.6 160.2h1.3v1.3h-1.3zM441.8 160.2h1.3v1.3h-1.3zM452.1 160.2h1.3v1.3h-1.3zM462.3 160.2h1.3v1.3h-1.3zM472.5 160.2h1.3v1.3h-1.3zM482.7 160.2h1.3v1.3h-1.3zM493.0 160.2h1.3v1.3h-1.3zM503.2 160.2h1.3v1.3h-1.3zM513.4 160.2h1.3v1.3h-1.3zM523.7 160.2h1.3v1.3h-1.3zM533.9 160.2h1.3v1.3h-1.3zM544.1 160.2h1.3v1.3h-1.3zM554.3 160.2h1.3v1.3h-1.3zM564.6 160.2h1.3v1.3h-1.3zM574.8 160.2h1.3v1.3h-1.3zM585.0 160.2h1.3v1.3h-1.3zM595.2 160.2h1.3v1.3h-1.3zM605.5 160.2h1.3v1.3h-1.3zM615.7 160.2h1.3v1.3h-1.3zM625.9 160.2h1.3v1.3h-1.3zM636.1 160.2h1.3v1.3h-1.3zM646.4 160.2h1.3v1.3h-1.3zM656.6 160.2h1.3v1.3h-1.3zM666.8 160.2h1.3v1.3h-1.3zM677.0 160.2h1.3v1.3h-1.3zM687.3 160.2h1.3v1.3h-1.3zM697.5 160.2h1.3v1.3h-1.3zM707.7 160.2h1.3v1.3h-1.3zM717.9 160.2h1.3v1.3h-1.3zM728.2 160.2h1.3v1.3h-1.3zM738.4 160.2h1.3v1.3h-1.3zM748.6 160.2h1.3v1.3h-1.3zM758.8 160.2h1.3v1.3h-1.3zM769.1 160.2h1.3v1.3h-1.3zM779.3 160.2h1.3v1.3h-1.3zM789.5 160.2h1.3v1.3h-1.3zM799.8 160.2h1.3v1.3h-1.3zM810.0 160.2h1.3v1.3h-1.3zM820.2 160.2h1.3v1.3h-1.3zM830.4 160.2h1.3v1.3h-1.3zM840.7 160.2h1.3v1.3h-1.3zM850.9 160.2h1.3v1.3h-1.3zM861.1 160.2h1.3v1.3h-1.3zM871.3 160.2h1.3v1.3h-1.3zM881.6 160.2h1.3v1.3h-1.3zM891.8 160.2h1.3v1.3h-1.3zM902.0 160.2h1.3v1.3h-1.3zM912.2 160.2h1.3v1.3h-1.3zM922.5 160.2h1.3v1.3h-1.3zM932.7 160.2h1.3v1.3h-1.3zM942.9 160.2h1.3v1.3h-1.3zM953.1 160.2h1.3v1.3h-1.3zM12.3 170.5h1.3v1.3h-1.3zM22.6 170.5h1.3v1.3h-1.3zM32.8 170.5h1.3v1.3h-1.3zM43.0 170.5h1.3v1.3h-1.3zM53.3 170.5h1.3v1.3h-1.3zM63.5 170.5h1.3v1.3h-1.3zM73.7 170.5h1.3v1.3h-1.3zM83.9 170.5h1.3v1.3h-1.3zM94.2 170.5h1.3v1.3h-1.3zM104.4 170.5h1.3v1.3h-1.3zM114.6 170.5h1.3v1.3h-1.3zM124.8 170.5h1.3v1.3h-1.3zM135.1 170.5h1.3v1.3h-1.3zM145.3 170.5h1.3v1.3h-1.3zM155.5 170.5h1.3v1.3h-1.3zM165.7 170.5h1.3v1.3h-1.3zM176.0 170.5h1.3v1.3h-1.3zM186.2 170.5h1.3v1.3h-1.3zM196.4 170.5h1.3v1.3h-1.3zM206.6 170.5h1.3v1.3h-1.3zM216.9 170.5h1.3v1.3h-1.3zM227.1 170.5h1.3v1.3h-1.3zM237.3 170.5h1.3v1.3h-1.3zM247.5 170.5h1.3v1.3h-1.3zM257.8 170.5h1.3v1.3h-1.3zM268.0 170.5h1.3v1.3h-1.3zM278.2 170.5h1.3v1.3h-1.3zM288.5 170.5h1.3v1.3h-1.3zM298.7 170.5h1.3v1.3h-1.3zM308.9 170.5h1.3v1.3h-1.3zM319.1 170.5h1.3v1.3h-1.3zM329.4 170.5h1.3v1.3h-1.3zM339.6 170.5h1.3v1.3h-1.3zM349.8 170.5h1.3v1.3h-1.3zM360.0 170.5h1.3v1.3h-1.3zM370.3 170.5h1.3v1.3h-1.3zM380.5 170.5h1.3v1.3h-1.3zM390.7 170.5h1.3v1.3h-1.3zM400.9 170.5h1.3v1.3h-1.3zM411.2 170.5h1.3v1.3h-1.3zM421.4 170.5h1.3v1.3h-1.3zM431.6 170.5h1.3v1.3h-1.3zM441.8 170.5h1.3v1.3h-1.3zM452.1 170.5h1.3v1.3h-1.3zM462.3 170.5h1.3v1.3h-1.3zM472.5 170.5h1.3v1.3h-1.3zM482.7 170.5h1.3v1.3h-1.3zM493.0 170.5h1.3v1.3h-1.3zM503.2 170.5h1.3v1.3h-1.3zM513.4 170.5h1.3v1.3h-1.3zM523.7 170.5h1.3v1.3h-1.3zM533.9 170.5h1.3v1.3h-1.3zM544.1 170.5h1.3v1.3h-1.3zM554.3 170.5h1.3v1.3h-1.3zM564.6 170.5h1.3v1.3h-1.3zM574.8 170.5h1.3v1.3h-1.3zM585.0 170.5h1.3v1.3h-1.3zM595.2 170.5h1.3v1.3h-1.3zM605.5 170.5h1.3v1.3h-1.3zM615.7 170.5h1.3v1.3h-1.3zM625.9 170.5h1.3v1.3h-1.3zM636.1 170.5h1.3v1.3h-1.3zM646.4 170.5h1.3v1.3h-1.3zM656.6 170.5h1.3v1.3h-1.3zM666.8 170.5h1.3v1.3h-1.3zM677.0 170.5h1.3v1.3h-1.3zM687.3 170.5h1.3v1.3h-1.3zM697.5 170.5h1.3v1.3h-1.3zM707.7 170.5h1.3v1.3h-1.3zM717.9 170.5h1.3v1.3h-1.3zM728.2 170.5h1.3v1.3h-1.3zM738.4 170.5h1.3v1.3h-1.3zM748.6 170.5h1.3v1.3h-1.3zM758.8 170.5h1.3v1.3h-1.3zM769.1 170.5h1.3v1.3h-1.3zM779.3 170.5h1.3v1.3h-1.3zM789.5 170.5h1.3v1.3h-1.3zM799.8 170.5h1.3v1.3h-1.3zM810.0 170.5h1.3v1.3h-1.3zM820.2 170.5h1.3v1.3h-1.3zM830.4 170.5h1.3v1.3h-1.3zM840.7 170.5h1.3v1.3h-1.3zM850.9 170.5h1.3v1.3h-1.3zM861.1 170.5h1.3v1.3h-1.3zM871.3 170.5h1.3v1.3h-1.3zM881.6 170.5h1.3v1.3h-1.3zM891.8 170.5h1.3v1.3h-1.3zM902.0 170.5h1.3v1.3h-1.3zM912.2 170.5h1.3v1.3h-1.3zM922.5 170.5h1.3v1.3h-1.3zM932.7 170.5h1.3v1.3h-1.3zM942.9 170.5h1.3v1.3h-1.3zM953.1 170.5h1.3v1.3h-1.3zM12.3 180.7h1.3v1.3h-1.3zM22.6 180.7h1.3v1.3h-1.3zM32.8 180.7h1.3v1.3h-1.3zM43.0 180.7h1.3v1.3h-1.3zM53.3 180.7h1.3v1.3h-1.3zM63.5 180.7h1.3v1.3h-1.3zM73.7 180.7h1.3v1.3h-1.3zM83.9 180.7h1.3v1.3h-1.3zM94.2 180.7h1.3v1.3h-1.3zM104.4 180.7h1.3v1.3h-1.3zM114.6 180.7h1.3v1.3h-1.3zM124.8 180.7h1.3v1.3h-1.3zM135.1 180.7h1.3v1.3h-1.3zM145.3 180.7h1.3v1.3h-1.3zM155.5 180.7h1.3v1.3h-1.3zM165.7 180.7h1.3v1.3h-1.3zM176.0 180.7h1.3v1.3h-1.3zM186.2 180.7h1.3v1.3h-1.3zM196.4 180.7h1.3v1.3h-1.3zM206.6 180.7h1.3v1.3h-1.3zM216.9 180.7h1.3v1.3h-1.3zM227.1 180.7h1.3v1.3h-1.3zM237.3 180.7h1.3v1.3h-1.3zM247.5 180.7h1.3v1.3h-1.3zM257.8 180.7h1.3v1.3h-1.3zM268.0 180.7h1.3v1.3h-1.3zM278.2 180.7h1.3v1.3h-1.3zM288.5 180.7h1.3v1.3h-1.3zM298.7 180.7h1.3v1.3h-1.3zM308.9 180.7h1.3v1.3h-1.3zM319.1 180.7h1.3v1.3h-1.3zM329.4 180.7h1.3v1.3h-1.3zM339.6 180.7h1.3v1.3h-1.3zM349.8 180.7h1.3v1.3h-1.3zM360.0 180.7h1.3v1.3h-1.3zM370.3 180.7h1.3v1.3h-1.3zM380.5 180.7h1.3v1.3h-1.3zM390.7 180.7h1.3v1.3h-1.3zM400.9 180.7h1.3v1.3h-1.3zM411.2 180.7h1.3v1.3h-1.3zM421.4 180.7h1.3v1.3h-1.3zM431.6 180.7h1.3v1.3h-1.3zM441.8 180.7h1.3v1.3h-1.3zM452.1 180.7h1.3v1.3h-1.3zM462.3 180.7h1.3v1.3h-1.3zM472.5 180.7h1.3v1.3h-1.3zM482.7 180.7h1.3v1.3h-1.3zM493.0 180.7h1.3v1.3h-1.3zM503.2 180.7h1.3v1.3h-1.3zM513.4 180.7h1.3v1.3h-1.3zM523.7 180.7h1.3v1.3h-1.3zM533.9 180.7h1.3v1.3h-1.3zM544.1 180.7h1.3v1.3h-1.3zM554.3 180.7h1.3v1.3h-1.3zM564.6 180.7h1.3v1.3h-1.3zM574.8 180.7h1.3v1.3h-1.3zM585.0 180.7h1.3v1.3h-1.3zM595.2 180.7h1.3v1.3h-1.3zM605.5 180.7h1.3v1.3h-1.3zM615.7 180.7h1.3v1.3h-1.3zM625.9 180.7h1.3v1.3h-1.3zM636.1 180.7h1.3v1.3h-1.3zM646.4 180.7h1.3v1.3h-1.3zM656.6 180.7h1.3v1.3h-1.3zM666.8 180.7h1.3v1.3h-1.3zM677.0 180.7h1.3v1.3h-1.3zM687.3 180.7h1.3v1.3h-1.3zM697.5 180.7h1.3v1.3h-1.3zM707.7 180.7h1.3v1.3h-1.3zM717.9 180.7h1.3v1.3h-1.3zM728.2 180.7h1.3v1.3h-1.3zM738.4 180.7h1.3v1.3h-1.3zM748.6 180.7h1.3v1.3h-1.3zM758.8 180.7h1.3v1.3h-1.3zM769.1 180.7h1.3v1.3h-1.3zM779.3 180.7h1.3v1.3h-1.3zM789.5 180.7h1.3v1.3h-1.3zM799.8 180.7h1.3v1.3h-1.3zM810.0 180.7h1.3v1.3h-1.3zM820.2 180.7h1.3v1.3h-1.3zM830.4 180.7h1.3v1.3h-1.3zM840.7 180.7h1.3v1.3h-1.3zM850.9 180.7h1.3v1.3h-1.3zM861.1 180.7h1.3v1.3h-1.3zM871.3 180.7h1.3v1.3h-1.3zM881.6 180.7h1.3v1.3h-1.3zM891.8 180.7h1.3v1.3h-1.3zM902.0 180.7h1.3v1.3h-1.3zM912.2 180.7h1.3v1.3h-1.3zM922.5 180.7h1.3v1.3h-1.3zM932.7 180.7h1.3v1.3h-1.3zM942.9 180.7h1.3v1.3h-1.3zM953.1 180.7h1.3v1.3h-1.3zM12.3 190.9h1.3v1.3h-1.3zM22.6 190.9h1.3v1.3h-1.3zM32.8 190.9h1.3v1.3h-1.3zM43.0 190.9h1.3v1.3h-1.3zM53.3 190.9h1.3v1.3h-1.3zM63.5 190.9h1.3v1.3h-1.3zM73.7 190.9h1.3v1.3h-1.3zM83.9 190.9h1.3v1.3h-1.3zM94.2 190.9h1.3v1.3h-1.3zM104.4 190.9h1.3v1.3h-1.3zM114.6 190.9h1.3v1.3h-1.3zM124.8 190.9h1.3v1.3h-1.3zM135.1 190.9h1.3v1.3h-1.3zM145.3 190.9h1.3v1.3h-1.3zM155.5 190.9h1.3v1.3h-1.3zM165.7 190.9h1.3v1.3h-1.3zM176.0 190.9h1.3v1.3h-1.3zM186.2 190.9h1.3v1.3h-1.3zM196.4 190.9h1.3v1.3h-1.3zM206.6 190.9h1.3v1.3h-1.3zM216.9 190.9h1.3v1.3h-1.3zM227.1 190.9h1.3v1.3h-1.3zM237.3 190.9h1.3v1.3h-1.3zM247.5 190.9h1.3v1.3h-1.3zM257.8 190.9h1.3v1.3h-1.3zM268.0 190.9h1.3v1.3h-1.3zM278.2 190.9h1.3v1.3h-1.3zM288.5 190.9h1.3v1.3h-1.3zM298.7 190.9h1.3v1.3h-1.3zM308.9 190.9h1.3v1.3h-1.3zM319.1 190.9h1.3v1.3h-1.3zM329.4 190.9h1.3v1.3h-1.3zM339.6 190.9h1.3v1.3h-1.3zM349.8 190.9h1.3v1.3h-1.3zM360.0 190.9h1.3v1.3h-1.3zM370.3 190.9h1.3v1.3h-1.3zM380.5 190.9h1.3v1.3h-1.3zM390.7 190.9h1.3v1.3h-1.3zM400.9 190.9h1.3v1.3h-1.3zM411.2 190.9h1.3v1.3h-1.3zM421.4 190.9h1.3v1.3h-1.3zM431.6 190.9h1.3v1.3h-1.3zM441.8 190.9h1.3v1.3h-1.3zM452.1 190.9h1.3v1.3h-1.3zM462.3 190.9h1.3v1.3h-1.3zM472.5 190.9h1.3v1.3h-1.3zM482.7 190.9h1.3v1.3h-1.3zM493.0 190.9h1.3v1.3h-1.3zM503.2 190.9h1.3v1.3h-1.3zM513.4 190.9h1.3v1.3h-1.3zM523.7 190.9h1.3v1.3h-1.3zM533.9 190.9h1.3v1.3h-1.3zM544.1 190.9h1.3v1.3h-1.3zM554.3 190.9h1.3v1.3h-1.3zM564.6 190.9h1.3v1.3h-1.3zM574.8 190.9h1.3v1.3h-1.3zM585.0 190.9h1.3v1.3h-1.3zM595.2 190.9h1.3v1.3h-1.3zM605.5 190.9h1.3v1.3h-1.3zM615.7 190.9h1.3v1.3h-1.3zM625.9 190.9h1.3v1.3h-1.3zM636.1 190.9h1.3v1.3h-1.3zM646.4 190.9h1.3v1.3h-1.3zM656.6 190.9h1.3v1.3h-1.3zM666.8 190.9h1.3v1.3h-1.3zM677.0 190.9h1.3v1.3h-1.3zM687.3 190.9h1.3v1.3h-1.3zM697.5 190.9h1.3v1.3h-1.3zM707.7 190.9h1.3v1.3h-1.3zM717.9 190.9h1.3v1.3h-1.3zM728.2 190.9h1.3v1.3h-1.3zM738.4 190.9h1.3v1.3h-1.3zM748.6 190.9h1.3v1.3h-1.3zM758.8 190.9h1.3v1.3h-1.3zM769.1 190.9h1.3v1.3h-1.3zM779.3 190.9h1.3v1.3h-1.3zM789.5 190.9h1.3v1.3h-1.3zM799.8 190.9h1.3v1.3h-1.3zM810.0 190.9h1.3v1.3h-1.3zM820.2 190.9h1.3v1.3h-1.3zM830.4 190.9h1.3v1.3h-1.3zM840.7 190.9h1.3v1.3h-1.3zM850.9 190.9h1.3v1.3h-1.3zM861.1 190.9h1.3v1.3h-1.3zM871.3 190.9h1.3v1.3h-1.3zM881.6 190.9h1.3v1.3h-1.3zM891.8 190.9h1.3v1.3h-1.3zM902.0 190.9h1.3v1.3h-1.3zM912.2 190.9h1.3v1.3h-1.3zM922.5 190.9h1.3v1.3h-1.3zM932.7 190.9h1.3v1.3h-1.3zM942.9 190.9h1.3v1.3h-1.3zM953.1 190.9h1.3v1.3h-1.3zM12.3 201.2h1.3v1.3h-1.3zM22.6 201.2h1.3v1.3h-1.3zM32.8 201.2h1.3v1.3h-1.3zM43.0 201.2h1.3v1.3h-1.3zM53.3 201.2h1.3v1.3h-1.3zM63.5 201.2h1.3v1.3h-1.3zM73.7 201.2h1.3v1.3h-1.3zM83.9 201.2h1.3v1.3h-1.3zM94.2 201.2h1.3v1.3h-1.3zM104.4 201.2h1.3v1.3h-1.3zM114.6 201.2h1.3v1.3h-1.3zM124.8 201.2h1.3v1.3h-1.3zM135.1 201.2h1.3v1.3h-1.3zM145.3 201.2h1.3v1.3h-1.3zM155.5 201.2h1.3v1.3h-1.3zM165.7 201.2h1.3v1.3h-1.3zM176.0 201.2h1.3v1.3h-1.3zM186.2 201.2h1.3v1.3h-1.3zM196.4 201.2h1.3v1.3h-1.3zM206.6 201.2h1.3v1.3h-1.3zM216.9 201.2h1.3v1.3h-1.3zM227.1 201.2h1.3v1.3h-1.3zM237.3 201.2h1.3v1.3h-1.3zM247.5 201.2h1.3v1.3h-1.3zM257.8 201.2h1.3v1.3h-1.3zM268.0 201.2h1.3v1.3h-1.3zM278.2 201.2h1.3v1.3h-1.3zM288.5 201.2h1.3v1.3h-1.3zM298.7 201.2h1.3v1.3h-1.3zM308.9 201.2h1.3v1.3h-1.3zM319.1 201.2h1.3v1.3h-1.3zM329.4 201.2h1.3v1.3h-1.3zM339.6 201.2h1.3v1.3h-1.3zM349.8 201.2h1.3v1.3h-1.3zM360.0 201.2h1.3v1.3h-1.3zM370.3 201.2h1.3v1.3h-1.3zM380.5 201.2h1.3v1.3h-1.3zM390.7 201.2h1.3v1.3h-1.3zM400.9 201.2h1.3v1.3h-1.3zM411.2 201.2h1.3v1.3h-1.3zM421.4 201.2h1.3v1.3h-1.3zM431.6 201.2h1.3v1.3h-1.3zM441.8 201.2h1.3v1.3h-1.3zM452.1 201.2h1.3v1.3h-1.3zM462.3 201.2h1.3v1.3h-1.3zM472.5 201.2h1.3v1.3h-1.3zM482.7 201.2h1.3v1.3h-1.3zM493.0 201.2h1.3v1.3h-1.3zM503.2 201.2h1.3v1.3h-1.3zM513.4 201.2h1.3v1.3h-1.3zM523.7 201.2h1.3v1.3h-1.3zM533.9 201.2h1.3v1.3h-1.3zM544.1 201.2h1.3v1.3h-1.3zM554.3 201.2h1.3v1.3h-1.3zM564.6 201.2h1.3v1.3h-1.3zM574.8 201.2h1.3v1.3h-1.3zM585.0 201.2h1.3v1.3h-1.3zM595.2 201.2h1.3v1.3h-1.3zM605.5 201.2h1.3v1.3h-1.3zM615.7 201.2h1.3v1.3h-1.3zM625.9 201.2h1.3v1.3h-1.3zM636.1 201.2h1.3v1.3h-1.3zM646.4 201.2h1.3v1.3h-1.3zM656.6 201.2h1.3v1.3h-1.3zM666.8 201.2h1.3v1.3h-1.3zM677.0 201.2h1.3v1.3h-1.3zM687.3 201.2h1.3v1.3h-1.3zM697.5 201.2h1.3v1.3h-1.3zM707.7 201.2h1.3v1.3h-1.3zM717.9 201.2h1.3v1.3h-1.3zM728.2 201.2h1.3v1.3h-1.3zM738.4 201.2h1.3v1.3h-1.3zM748.6 201.2h1.3v1.3h-1.3zM758.8 201.2h1.3v1.3h-1.3zM769.1 201.2h1.3v1.3h-1.3zM779.3 201.2h1.3v1.3h-1.3zM789.5 201.2h1.3v1.3h-1.3zM799.8 201.2h1.3v1.3h-1.3zM810.0 201.2h1.3v1.3h-1.3zM820.2 201.2h1.3v1.3h-1.3zM830.4 201.2h1.3v1.3h-1.3zM840.7 201.2h1.3v1.3h-1.3zM850.9 201.2h1.3v1.3h-1.3zM861.1 201.2h1.3v1.3h-1.3zM871.3 201.2h1.3v1.3h-1.3zM881.6 201.2h1.3v1.3h-1.3zM891.8 201.2h1.3v1.3h-1.3zM902.0 201.2h1.3v1.3h-1.3zM912.2 201.2h1.3v1.3h-1.3zM922.5 201.2h1.3v1.3h-1.3zM932.7 201.2h1.3v1.3h-1.3zM942.9 201.2h1.3v1.3h-1.3zM953.1 201.2h1.3v1.3h-1.3zM12.3 211.4h1.3v1.3h-1.3zM22.6 211.4h1.3v1.3h-1.3zM32.8 211.4h1.3v1.3h-1.3zM43.0 211.4h1.3v1.3h-1.3zM53.3 211.4h1.3v1.3h-1.3zM63.5 211.4h1.3v1.3h-1.3zM73.7 211.4h1.3v1.3h-1.3zM83.9 211.4h1.3v1.3h-1.3zM94.2 211.4h1.3v1.3h-1.3zM104.4 211.4h1.3v1.3h-1.3zM114.6 211.4h1.3v1.3h-1.3zM124.8 211.4h1.3v1.3h-1.3zM135.1 211.4h1.3v1.3h-1.3zM145.3 211.4h1.3v1.3h-1.3zM155.5 211.4h1.3v1.3h-1.3zM165.7 211.4h1.3v1.3h-1.3zM176.0 211.4h1.3v1.3h-1.3zM186.2 211.4h1.3v1.3h-1.3zM196.4 211.4h1.3v1.3h-1.3zM206.6 211.4h1.3v1.3h-1.3zM216.9 211.4h1.3v1.3h-1.3zM227.1 211.4h1.3v1.3h-1.3zM237.3 211.4h1.3v1.3h-1.3zM247.5 211.4h1.3v1.3h-1.3zM257.8 211.4h1.3v1.3h-1.3zM268.0 211.4h1.3v1.3h-1.3zM278.2 211.4h1.3v1.3h-1.3zM288.5 211.4h1.3v1.3h-1.3zM298.7 211.4h1.3v1.3h-1.3zM308.9 211.4h1.3v1.3h-1.3zM319.1 211.4h1.3v1.3h-1.3zM329.4 211.4h1.3v1.3h-1.3zM339.6 211.4h1.3v1.3h-1.3zM349.8 211.4h1.3v1.3h-1.3zM360.0 211.4h1.3v1.3h-1.3zM370.3 211.4h1.3v1.3h-1.3zM380.5 211.4h1.3v1.3h-1.3zM390.7 211.4h1.3v1.3h-1.3zM400.9 211.4h1.3v1.3h-1.3zM411.2 211.4h1.3v1.3h-1.3zM421.4 211.4h1.3v1.3h-1.3zM431.6 211.4h1.3v1.3h-1.3zM441.8 211.4h1.3v1.3h-1.3zM452.1 211.4h1.3v1.3h-1.3zM462.3 211.4h1.3v1.3h-1.3zM472.5 211.4h1.3v1.3h-1.3zM482.7 211.4h1.3v1.3h-1.3zM493.0 211.4h1.3v1.3h-1.3zM503.2 211.4h1.3v1.3h-1.3zM513.4 211.4h1.3v1.3h-1.3zM523.7 211.4h1.3v1.3h-1.3zM533.9 211.4h1.3v1.3h-1.3zM544.1 211.4h1.3v1.3h-1.3zM554.3 211.4h1.3v1.3h-1.3zM564.6 211.4h1.3v1.3h-1.3zM574.8 211.4h1.3v1.3h-1.3zM585.0 211.4h1.3v1.3h-1.3zM595.2 211.4h1.3v1.3h-1.3zM605.5 211.4h1.3v1.3h-1.3zM615.7 211.4h1.3v1.3h-1.3zM625.9 211.4h1.3v1.3h-1.3zM636.1 211.4h1.3v1.3h-1.3zM646.4 211.4h1.3v1.3h-1.3zM656.6 211.4h1.3v1.3h-1.3zM666.8 211.4h1.3v1.3h-1.3zM677.0 211.4h1.3v1.3h-1.3zM687.3 211.4h1.3v1.3h-1.3zM697.5 211.4h1.3v1.3h-1.3zM707.7 211.4h1.3v1.3h-1.3zM717.9 211.4h1.3v1.3h-1.3zM728.2 211.4h1.3v1.3h-1.3zM738.4 211.4h1.3v1.3h-1.3zM748.6 211.4h1.3v1.3h-1.3zM758.8 211.4h1.3v1.3h-1.3zM769.1 211.4h1.3v1.3h-1.3zM779.3 211.4h1.3v1.3h-1.3zM789.5 211.4h1.3v1.3h-1.3zM799.8 211.4h1.3v1.3h-1.3zM810.0 211.4h1.3v1.3h-1.3zM820.2 211.4h1.3v1.3h-1.3zM830.4 211.4h1.3v1.3h-1.3zM840.7 211.4h1.3v1.3h-1.3zM850.9 211.4h1.3v1.3h-1.3zM861.1 211.4h1.3v1.3h-1.3zM871.3 211.4h1.3v1.3h-1.3zM881.6 211.4h1.3v1.3h-1.3zM891.8 211.4h1.3v1.3h-1.3zM902.0 211.4h1.3v1.3h-1.3zM912.2 211.4h1.3v1.3h-1.3zM922.5 211.4h1.3v1.3h-1.3zM932.7 211.4h1.3v1.3h-1.3zM942.9 211.4h1.3v1.3h-1.3zM953.1 211.4h1.3v1.3h-1.3zM12.3 221.6h1.3v1.3h-1.3zM22.6 221.6h1.3v1.3h-1.3zM32.8 221.6h1.3v1.3h-1.3zM43.0 221.6h1.3v1.3h-1.3zM53.3 221.6h1.3v1.3h-1.3zM63.5 221.6h1.3v1.3h-1.3zM73.7 221.6h1.3v1.3h-1.3zM83.9 221.6h1.3v1.3h-1.3zM94.2 221.6h1.3v1.3h-1.3zM104.4 221.6h1.3v1.3h-1.3zM114.6 221.6h1.3v1.3h-1.3zM124.8 221.6h1.3v1.3h-1.3zM135.1 221.6h1.3v1.3h-1.3zM145.3 221.6h1.3v1.3h-1.3zM155.5 221.6h1.3v1.3h-1.3zM165.7 221.6h1.3v1.3h-1.3zM176.0 221.6h1.3v1.3h-1.3zM186.2 221.6h1.3v1.3h-1.3zM196.4 221.6h1.3v1.3h-1.3zM206.6 221.6h1.3v1.3h-1.3zM216.9 221.6h1.3v1.3h-1.3zM227.1 221.6h1.3v1.3h-1.3zM237.3 221.6h1.3v1.3h-1.3zM247.5 221.6h1.3v1.3h-1.3zM257.8 221.6h1.3v1.3h-1.3zM268.0 221.6h1.3v1.3h-1.3zM278.2 221.6h1.3v1.3h-1.3zM288.5 221.6h1.3v1.3h-1.3zM298.7 221.6h1.3v1.3h-1.3zM308.9 221.6h1.3v1.3h-1.3zM319.1 221.6h1.3v1.3h-1.3zM329.4 221.6h1.3v1.3h-1.3zM339.6 221.6h1.3v1.3h-1.3zM349.8 221.6h1.3v1.3h-1.3zM360.0 221.6h1.3v1.3h-1.3zM370.3 221.6h1.3v1.3h-1.3zM380.5 221.6h1.3v1.3h-1.3zM390.7 221.6h1.3v1.3h-1.3zM400.9 221.6h1.3v1.3h-1.3zM411.2 221.6h1.3v1.3h-1.3zM421.4 221.6h1.3v1.3h-1.3zM431.6 221.6h1.3v1.3h-1.3zM441.8 221.6h1.3v1.3h-1.3zM452.1 221.6h1.3v1.3h-1.3zM462.3 221.6h1.3v1.3h-1.3zM472.5 221.6h1.3v1.3h-1.3zM482.7 221.6h1.3v1.3h-1.3zM493.0 221.6h1.3v1.3h-1.3zM503.2 221.6h1.3v1.3h-1.3zM513.4 221.6h1.3v1.3h-1.3zM523.7 221.6h1.3v1.3h-1.3zM533.9 221.6h1.3v1.3h-1.3zM544.1 221.6h1.3v1.3h-1.3zM554.3 221.6h1.3v1.3h-1.3zM564.6 221.6h1.3v1.3h-1.3zM574.8 221.6h1.3v1.3h-1.3zM585.0 221.6h1.3v1.3h-1.3zM595.2 221.6h1.3v1.3h-1.3zM605.5 221.6h1.3v1.3h-1.3zM615.7 221.6h1.3v1.3h-1.3zM625.9 221.6h1.3v1.3h-1.3zM636.1 221.6h1.3v1.3h-1.3zM646.4 221.6h1.3v1.3h-1.3zM656.6 221.6h1.3v1.3h-1.3zM666.8 221.6h1.3v1.3h-1.3zM677.0 221.6h1.3v1.3h-1.3zM687.3 221.6h1.3v1.3h-1.3zM697.5 221.6h1.3v1.3h-1.3zM707.7 221.6h1.3v1.3h-1.3zM717.9 221.6h1.3v1.3h-1.3zM728.2 221.6h1.3v1.3h-1.3zM738.4 221.6h1.3v1.3h-1.3zM748.6 221.6h1.3v1.3h-1.3zM758.8 221.6h1.3v1.3h-1.3zM769.1 221.6h1.3v1.3h-1.3zM779.3 221.6h1.3v1.3h-1.3zM789.5 221.6h1.3v1.3h-1.3zM799.8 221.6h1.3v1.3h-1.3zM810.0 221.6h1.3v1.3h-1.3zM820.2 221.6h1.3v1.3h-1.3zM830.4 221.6h1.3v1.3h-1.3zM840.7 221.6h1.3v1.3h-1.3zM850.9 221.6h1.3v1.3h-1.3zM861.1 221.6h1.3v1.3h-1.3zM871.3 221.6h1.3v1.3h-1.3zM881.6 221.6h1.3v1.3h-1.3zM891.8 221.6h1.3v1.3h-1.3zM902.0 221.6h1.3v1.3h-1.3zM912.2 221.6h1.3v1.3h-1.3zM922.5 221.6h1.3v1.3h-1.3zM932.7 221.6h1.3v1.3h-1.3zM942.9 221.6h1.3v1.3h-1.3zM953.1 221.6h1.3v1.3h-1.3zM12.3 231.8h1.3v1.3h-1.3zM22.6 231.8h1.3v1.3h-1.3zM32.8 231.8h1.3v1.3h-1.3zM43.0 231.8h1.3v1.3h-1.3zM53.3 231.8h1.3v1.3h-1.3zM63.5 231.8h1.3v1.3h-1.3zM73.7 231.8h1.3v1.3h-1.3zM83.9 231.8h1.3v1.3h-1.3zM94.2 231.8h1.3v1.3h-1.3zM104.4 231.8h1.3v1.3h-1.3zM114.6 231.8h1.3v1.3h-1.3zM124.8 231.8h1.3v1.3h-1.3zM135.1 231.8h1.3v1.3h-1.3zM145.3 231.8h1.3v1.3h-1.3zM155.5 231.8h1.3v1.3h-1.3zM165.7 231.8h1.3v1.3h-1.3zM176.0 231.8h1.3v1.3h-1.3zM186.2 231.8h1.3v1.3h-1.3zM196.4 231.8h1.3v1.3h-1.3zM206.6 231.8h1.3v1.3h-1.3zM216.9 231.8h1.3v1.3h-1.3zM227.1 231.8h1.3v1.3h-1.3zM237.3 231.8h1.3v1.3h-1.3zM247.5 231.8h1.3v1.3h-1.3zM257.8 231.8h1.3v1.3h-1.3zM268.0 231.8h1.3v1.3h-1.3zM278.2 231.8h1.3v1.3h-1.3zM288.5 231.8h1.3v1.3h-1.3zM298.7 231.8h1.3v1.3h-1.3zM308.9 231.8h1.3v1.3h-1.3zM319.1 231.8h1.3v1.3h-1.3zM329.4 231.8h1.3v1.3h-1.3zM339.6 231.8h1.3v1.3h-1.3zM349.8 231.8h1.3v1.3h-1.3zM360.0 231.8h1.3v1.3h-1.3zM370.3 231.8h1.3v1.3h-1.3zM380.5 231.8h1.3v1.3h-1.3zM390.7 231.8h1.3v1.3h-1.3zM400.9 231.8h1.3v1.3h-1.3zM411.2 231.8h1.3v1.3h-1.3zM421.4 231.8h1.3v1.3h-1.3zM431.6 231.8h1.3v1.3h-1.3zM441.8 231.8h1.3v1.3h-1.3zM452.1 231.8h1.3v1.3h-1.3zM462.3 231.8h1.3v1.3h-1.3zM472.5 231.8h1.3v1.3h-1.3zM482.7 231.8h1.3v1.3h-1.3zM493.0 231.8h1.3v1.3h-1.3zM503.2 231.8h1.3v1.3h-1.3zM513.4 231.8h1.3v1.3h-1.3zM523.7 231.8h1.3v1.3h-1.3zM533.9 231.8h1.3v1.3h-1.3zM544.1 231.8h1.3v1.3h-1.3zM554.3 231.8h1.3v1.3h-1.3zM564.6 231.8h1.3v1.3h-1.3zM574.8 231.8h1.3v1.3h-1.3zM585.0 231.8h1.3v1.3h-1.3zM595.2 231.8h1.3v1.3h-1.3zM605.5 231.8h1.3v1.3h-1.3zM615.7 231.8h1.3v1.3h-1.3zM625.9 231.8h1.3v1.3h-1.3zM636.1 231.8h1.3v1.3h-1.3zM646.4 231.8h1.3v1.3h-1.3zM656.6 231.8h1.3v1.3h-1.3zM666.8 231.8h1.3v1.3h-1.3zM677.0 231.8h1.3v1.3h-1.3zM687.3 231.8h1.3v1.3h-1.3zM697.5 231.8h1.3v1.3h-1.3zM707.7 231.8h1.3v1.3h-1.3zM717.9 231.8h1.3v1.3h-1.3zM728.2 231.8h1.3v1.3h-1.3zM738.4 231.8h1.3v1.3h-1.3zM748.6 231.8h1.3v1.3h-1.3zM758.8 231.8h1.3v1.3h-1.3zM769.1 231.8h1.3v1.3h-1.3zM779.3 231.8h1.3v1.3h-1.3zM789.5 231.8h1.3v1.3h-1.3zM799.8 231.8h1.3v1.3h-1.3zM810.0 231.8h1.3v1.3h-1.3zM820.2 231.8h1.3v1.3h-1.3zM830.4 231.8h1.3v1.3h-1.3zM840.7 231.8h1.3v1.3h-1.3zM850.9 231.8h1.3v1.3h-1.3zM861.1 231.8h1.3v1.3h-1.3zM871.3 231.8h1.3v1.3h-1.3zM881.6 231.8h1.3v1.3h-1.3zM891.8 231.8h1.3v1.3h-1.3zM902.0 231.8h1.3v1.3h-1.3zM912.2 231.8h1.3v1.3h-1.3zM922.5 231.8h1.3v1.3h-1.3zM932.7 231.8h1.3v1.3h-1.3zM942.9 231.8h1.3v1.3h-1.3zM953.1 231.8h1.3v1.3h-1.3zM12.3 242.1h1.3v1.3h-1.3zM22.6 242.1h1.3v1.3h-1.3zM32.8 242.1h1.3v1.3h-1.3zM43.0 242.1h1.3v1.3h-1.3zM53.3 242.1h1.3v1.3h-1.3zM63.5 242.1h1.3v1.3h-1.3zM73.7 242.1h1.3v1.3h-1.3zM83.9 242.1h1.3v1.3h-1.3zM94.2 242.1h1.3v1.3h-1.3zM104.4 242.1h1.3v1.3h-1.3zM114.6 242.1h1.3v1.3h-1.3zM124.8 242.1h1.3v1.3h-1.3zM135.1 242.1h1.3v1.3h-1.3zM145.3 242.1h1.3v1.3h-1.3zM155.5 242.1h1.3v1.3h-1.3zM165.7 242.1h1.3v1.3h-1.3zM176.0 242.1h1.3v1.3h-1.3zM186.2 242.1h1.3v1.3h-1.3zM196.4 242.1h1.3v1.3h-1.3zM206.6 242.1h1.3v1.3h-1.3zM216.9 242.1h1.3v1.3h-1.3zM227.1 242.1h1.3v1.3h-1.3zM237.3 242.1h1.3v1.3h-1.3zM247.5 242.1h1.3v1.3h-1.3zM257.8 242.1h1.3v1.3h-1.3zM268.0 242.1h1.3v1.3h-1.3zM278.2 242.1h1.3v1.3h-1.3zM288.5 242.1h1.3v1.3h-1.3zM298.7 242.1h1.3v1.3h-1.3zM308.9 242.1h1.3v1.3h-1.3zM319.1 242.1h1.3v1.3h-1.3zM329.4 242.1h1.3v1.3h-1.3zM339.6 242.1h1.3v1.3h-1.3zM349.8 242.1h1.3v1.3h-1.3zM360.0 242.1h1.3v1.3h-1.3zM370.3 242.1h1.3v1.3h-1.3zM380.5 242.1h1.3v1.3h-1.3zM390.7 242.1h1.3v1.3h-1.3zM400.9 242.1h1.3v1.3h-1.3zM411.2 242.1h1.3v1.3h-1.3zM421.4 242.1h1.3v1.3h-1.3zM431.6 242.1h1.3v1.3h-1.3zM441.8 242.1h1.3v1.3h-1.3zM452.1 242.1h1.3v1.3h-1.3zM462.3 242.1h1.3v1.3h-1.3zM472.5 242.1h1.3v1.3h-1.3zM482.7 242.1h1.3v1.3h-1.3zM493.0 242.1h1.3v1.3h-1.3zM503.2 242.1h1.3v1.3h-1.3zM513.4 242.1h1.3v1.3h-1.3zM523.7 242.1h1.3v1.3h-1.3zM533.9 242.1h1.3v1.3h-1.3zM544.1 242.1h1.3v1.3h-1.3zM554.3 242.1h1.3v1.3h-1.3zM564.6 242.1h1.3v1.3h-1.3zM574.8 242.1h1.3v1.3h-1.3zM585.0 242.1h1.3v1.3h-1.3zM595.2 242.1h1.3v1.3h-1.3zM605.5 242.1h1.3v1.3h-1.3zM615.7 242.1h1.3v1.3h-1.3zM625.9 242.1h1.3v1.3h-1.3zM636.1 242.1h1.3v1.3h-1.3zM646.4 242.1h1.3v1.3h-1.3zM656.6 242.1h1.3v1.3h-1.3zM666.8 242.1h1.3v1.3h-1.3zM677.0 242.1h1.3v1.3h-1.3zM687.3 242.1h1.3v1.3h-1.3zM697.5 242.1h1.3v1.3h-1.3zM707.7 242.1h1.3v1.3h-1.3zM717.9 242.1h1.3v1.3h-1.3zM728.2 242.1h1.3v1.3h-1.3zM738.4 242.1h1.3v1.3h-1.3zM748.6 242.1h1.3v1.3h-1.3zM758.8 242.1h1.3v1.3h-1.3zM769.1 242.1h1.3v1.3h-1.3zM779.3 242.1h1.3v1.3h-1.3zM789.5 242.1h1.3v1.3h-1.3zM799.8 242.1h1.3v1.3h-1.3zM810.0 242.1h1.3v1.3h-1.3zM820.2 242.1h1.3v1.3h-1.3zM830.4 242.1h1.3v1.3h-1.3zM840.7 242.1h1.3v1.3h-1.3zM850.9 242.1h1.3v1.3h-1.3zM861.1 242.1h1.3v1.3h-1.3zM871.3 242.1h1.3v1.3h-1.3zM881.6 242.1h1.3v1.3h-1.3zM891.8 242.1h1.3v1.3h-1.3zM902.0 242.1h1.3v1.3h-1.3zM912.2 242.1h1.3v1.3h-1.3zM922.5 242.1h1.3v1.3h-1.3zM932.7 242.1h1.3v1.3h-1.3zM942.9 242.1h1.3v1.3h-1.3zM953.1 242.1h1.3v1.3h-1.3zM12.3 252.3h1.3v1.3h-1.3zM22.6 252.3h1.3v1.3h-1.3zM32.8 252.3h1.3v1.3h-1.3zM43.0 252.3h1.3v1.3h-1.3zM53.3 252.3h1.3v1.3h-1.3zM63.5 252.3h1.3v1.3h-1.3zM73.7 252.3h1.3v1.3h-1.3zM83.9 252.3h1.3v1.3h-1.3zM94.2 252.3h1.3v1.3h-1.3zM104.4 252.3h1.3v1.3h-1.3zM114.6 252.3h1.3v1.3h-1.3zM124.8 252.3h1.3v1.3h-1.3zM135.1 252.3h1.3v1.3h-1.3zM145.3 252.3h1.3v1.3h-1.3zM155.5 252.3h1.3v1.3h-1.3zM165.7 252.3h1.3v1.3h-1.3zM176.0 252.3h1.3v1.3h-1.3zM186.2 252.3h1.3v1.3h-1.3zM196.4 252.3h1.3v1.3h-1.3zM206.6 252.3h1.3v1.3h-1.3zM216.9 252.3h1.3v1.3h-1.3zM227.1 252.3h1.3v1.3h-1.3zM237.3 252.3h1.3v1.3h-1.3zM247.5 252.3h1.3v1.3h-1.3zM257.8 252.3h1.3v1.3h-1.3zM268.0 252.3h1.3v1.3h-1.3zM278.2 252.3h1.3v1.3h-1.3zM288.5 252.3h1.3v1.3h-1.3zM298.7 252.3h1.3v1.3h-1.3zM308.9 252.3h1.3v1.3h-1.3zM319.1 252.3h1.3v1.3h-1.3zM329.4 252.3h1.3v1.3h-1.3zM339.6 252.3h1.3v1.3h-1.3zM349.8 252.3h1.3v1.3h-1.3zM360.0 252.3h1.3v1.3h-1.3zM370.3 252.3h1.3v1.3h-1.3zM380.5 252.3h1.3v1.3h-1.3zM390.7 252.3h1.3v1.3h-1.3zM400.9 252.3h1.3v1.3h-1.3zM411.2 252.3h1.3v1.3h-1.3zM421.4 252.3h1.3v1.3h-1.3zM431.6 252.3h1.3v1.3h-1.3zM441.8 252.3h1.3v1.3h-1.3zM452.1 252.3h1.3v1.3h-1.3zM462.3 252.3h1.3v1.3h-1.3zM472.5 252.3h1.3v1.3h-1.3zM482.7 252.3h1.3v1.3h-1.3zM493.0 252.3h1.3v1.3h-1.3zM503.2 252.3h1.3v1.3h-1.3zM513.4 252.3h1.3v1.3h-1.3zM523.7 252.3h1.3v1.3h-1.3zM533.9 252.3h1.3v1.3h-1.3zM544.1 252.3h1.3v1.3h-1.3zM554.3 252.3h1.3v1.3h-1.3zM564.6 252.3h1.3v1.3h-1.3zM574.8 252.3h1.3v1.3h-1.3zM585.0 252.3h1.3v1.3h-1.3zM595.2 252.3h1.3v1.3h-1.3zM605.5 252.3h1.3v1.3h-1.3zM615.7 252.3h1.3v1.3h-1.3zM625.9 252.3h1.3v1.3h-1.3zM636.1 252.3h1.3v1.3h-1.3zM646.4 252.3h1.3v1.3h-1.3zM656.6 252.3h1.3v1.3h-1.3zM666.8 252.3h1.3v1.3h-1.3zM677.0 252.3h1.3v1.3h-1.3zM687.3 252.3h1.3v1.3h-1.3zM697.5 252.3h1.3v1.3h-1.3zM707.7 252.3h1.3v1.3h-1.3zM717.9 252.3h1.3v1.3h-1.3zM728.2 252.3h1.3v1.3h-1.3zM738.4 252.3h1.3v1.3h-1.3zM748.6 252.3h1.3v1.3h-1.3zM758.8 252.3h1.3v1.3h-1.3zM769.1 252.3h1.3v1.3h-1.3zM779.3 252.3h1.3v1.3h-1.3zM789.5 252.3h1.3v1.3h-1.3zM799.8 252.3h1.3v1.3h-1.3zM810.0 252.3h1.3v1.3h-1.3zM820.2 252.3h1.3v1.3h-1.3zM830.4 252.3h1.3v1.3h-1.3zM840.7 252.3h1.3v1.3h-1.3zM850.9 252.3h1.3v1.3h-1.3zM861.1 252.3h1.3v1.3h-1.3zM871.3 252.3h1.3v1.3h-1.3zM881.6 252.3h1.3v1.3h-1.3zM891.8 252.3h1.3v1.3h-1.3zM902.0 252.3h1.3v1.3h-1.3zM912.2 252.3h1.3v1.3h-1.3zM922.5 252.3h1.3v1.3h-1.3zM932.7 252.3h1.3v1.3h-1.3zM942.9 252.3h1.3v1.3h-1.3zM953.1 252.3h1.3v1.3h-1.3zM12.3 262.5h1.3v1.3h-1.3zM22.6 262.5h1.3v1.3h-1.3zM32.8 262.5h1.3v1.3h-1.3zM43.0 262.5h1.3v1.3h-1.3zM53.3 262.5h1.3v1.3h-1.3zM63.5 262.5h1.3v1.3h-1.3zM73.7 262.5h1.3v1.3h-1.3zM83.9 262.5h1.3v1.3h-1.3zM94.2 262.5h1.3v1.3h-1.3zM104.4 262.5h1.3v1.3h-1.3zM114.6 262.5h1.3v1.3h-1.3zM124.8 262.5h1.3v1.3h-1.3zM135.1 262.5h1.3v1.3h-1.3zM145.3 262.5h1.3v1.3h-1.3zM155.5 262.5h1.3v1.3h-1.3zM165.7 262.5h1.3v1.3h-1.3zM176.0 262.5h1.3v1.3h-1.3zM186.2 262.5h1.3v1.3h-1.3zM196.4 262.5h1.3v1.3h-1.3zM206.6 262.5h1.3v1.3h-1.3zM216.9 262.5h1.3v1.3h-1.3zM227.1 262.5h1.3v1.3h-1.3zM237.3 262.5h1.3v1.3h-1.3zM247.5 262.5h1.3v1.3h-1.3zM257.8 262.5h1.3v1.3h-1.3zM268.0 262.5h1.3v1.3h-1.3zM278.2 262.5h1.3v1.3h-1.3zM288.5 262.5h1.3v1.3h-1.3zM298.7 262.5h1.3v1.3h-1.3zM308.9 262.5h1.3v1.3h-1.3zM319.1 262.5h1.3v1.3h-1.3zM329.4 262.5h1.3v1.3h-1.3zM339.6 262.5h1.3v1.3h-1.3zM349.8 262.5h1.3v1.3h-1.3zM360.0 262.5h1.3v1.3h-1.3zM370.3 262.5h1.3v1.3h-1.3zM380.5 262.5h1.3v1.3h-1.3zM390.7 262.5h1.3v1.3h-1.3zM400.9 262.5h1.3v1.3h-1.3zM411.2 262.5h1.3v1.3h-1.3zM421.4 262.5h1.3v1.3h-1.3zM431.6 262.5h1.3v1.3h-1.3zM441.8 262.5h1.3v1.3h-1.3zM452.1 262.5h1.3v1.3h-1.3zM462.3 262.5h1.3v1.3h-1.3zM472.5 262.5h1.3v1.3h-1.3zM482.7 262.5h1.3v1.3h-1.3zM493.0 262.5h1.3v1.3h-1.3zM503.2 262.5h1.3v1.3h-1.3zM513.4 262.5h1.3v1.3h-1.3zM523.7 262.5h1.3v1.3h-1.3zM533.9 262.5h1.3v1.3h-1.3zM544.1 262.5h1.3v1.3h-1.3zM554.3 262.5h1.3v1.3h-1.3zM564.6 262.5h1.3v1.3h-1.3zM574.8 262.5h1.3v1.3h-1.3zM585.0 262.5h1.3v1.3h-1.3zM595.2 262.5h1.3v1.3h-1.3zM605.5 262.5h1.3v1.3h-1.3zM615.7 262.5h1.3v1.3h-1.3zM625.9 262.5h1.3v1.3h-1.3zM636.1 262.5h1.3v1.3h-1.3zM646.4 262.5h1.3v1.3h-1.3zM656.6 262.5h1.3v1.3h-1.3zM666.8 262.5h1.3v1.3h-1.3zM677.0 262.5h1.3v1.3h-1.3zM687.3 262.5h1.3v1.3h-1.3zM697.5 262.5h1.3v1.3h-1.3zM707.7 262.5h1.3v1.3h-1.3zM717.9 262.5h1.3v1.3h-1.3zM728.2 262.5h1.3v1.3h-1.3zM738.4 262.5h1.3v1.3h-1.3zM748.6 262.5h1.3v1.3h-1.3zM758.8 262.5h1.3v1.3h-1.3zM769.1 262.5h1.3v1.3h-1.3zM779.3 262.5h1.3v1.3h-1.3zM789.5 262.5h1.3v1.3h-1.3zM799.8 262.5h1.3v1.3h-1.3zM810.0 262.5h1.3v1.3h-1.3zM820.2 262.5h1.3v1.3h-1.3zM830.4 262.5h1.3v1.3h-1.3zM840.7 262.5h1.3v1.3h-1.3zM850.9 262.5h1.3v1.3h-1.3zM861.1 262.5h1.3v1.3h-1.3zM871.3 262.5h1.3v1.3h-1.3zM881.6 262.5h1.3v1.3h-1.3zM891.8 262.5h1.3v1.3h-1.3zM902.0 262.5h1.3v1.3h-1.3zM912.2 262.5h1.3v1.3h-1.3zM922.5 262.5h1.3v1.3h-1.3zM932.7 262.5h1.3v1.3h-1.3zM942.9 262.5h1.3v1.3h-1.3zM953.1 262.5h1.3v1.3h-1.3zM12.3 272.7h1.3v1.3h-1.3zM22.6 272.7h1.3v1.3h-1.3zM32.8 272.7h1.3v1.3h-1.3zM43.0 272.7h1.3v1.3h-1.3zM53.3 272.7h1.3v1.3h-1.3zM63.5 272.7h1.3v1.3h-1.3zM73.7 272.7h1.3v1.3h-1.3zM83.9 272.7h1.3v1.3h-1.3zM94.2 272.7h1.3v1.3h-1.3zM104.4 272.7h1.3v1.3h-1.3zM114.6 272.7h1.3v1.3h-1.3zM124.8 272.7h1.3v1.3h-1.3zM135.1 272.7h1.3v1.3h-1.3zM145.3 272.7h1.3v1.3h-1.3zM155.5 272.7h1.3v1.3h-1.3zM165.7 272.7h1.3v1.3h-1.3zM176.0 272.7h1.3v1.3h-1.3zM186.2 272.7h1.3v1.3h-1.3zM196.4 272.7h1.3v1.3h-1.3zM206.6 272.7h1.3v1.3h-1.3zM216.9 272.7h1.3v1.3h-1.3zM227.1 272.7h1.3v1.3h-1.3zM237.3 272.7h1.3v1.3h-1.3zM247.5 272.7h1.3v1.3h-1.3zM257.8 272.7h1.3v1.3h-1.3zM268.0 272.7h1.3v1.3h-1.3zM278.2 272.7h1.3v1.3h-1.3zM288.5 272.7h1.3v1.3h-1.3zM298.7 272.7h1.3v1.3h-1.3zM308.9 272.7h1.3v1.3h-1.3zM319.1 272.7h1.3v1.3h-1.3zM329.4 272.7h1.3v1.3h-1.3zM339.6 272.7h1.3v1.3h-1.3zM349.8 272.7h1.3v1.3h-1.3zM360.0 272.7h1.3v1.3h-1.3zM370.3 272.7h1.3v1.3h-1.3zM380.5 272.7h1.3v1.3h-1.3zM390.7 272.7h1.3v1.3h-1.3zM400.9 272.7h1.3v1.3h-1.3zM411.2 272.7h1.3v1.3h-1.3zM421.4 272.7h1.3v1.3h-1.3zM431.6 272.7h1.3v1.3h-1.3zM441.8 272.7h1.3v1.3h-1.3zM452.1 272.7h1.3v1.3h-1.3zM462.3 272.7h1.3v1.3h-1.3zM472.5 272.7h1.3v1.3h-1.3zM482.7 272.7h1.3v1.3h-1.3zM493.0 272.7h1.3v1.3h-1.3zM503.2 272.7h1.3v1.3h-1.3zM513.4 272.7h1.3v1.3h-1.3zM523.7 272.7h1.3v1.3h-1.3zM533.9 272.7h1.3v1.3h-1.3zM544.1 272.7h1.3v1.3h-1.3zM554.3 272.7h1.3v1.3h-1.3zM564.6 272.7h1.3v1.3h-1.3zM574.8 272.7h1.3v1.3h-1.3zM585.0 272.7h1.3v1.3h-1.3zM595.2 272.7h1.3v1.3h-1.3zM605.5 272.7h1.3v1.3h-1.3zM615.7 272.7h1.3v1.3h-1.3zM625.9 272.7h1.3v1.3h-1.3zM636.1 272.7h1.3v1.3h-1.3zM646.4 272.7h1.3v1.3h-1.3zM656.6 272.7h1.3v1.3h-1.3zM666.8 272.7h1.3v1.3h-1.3zM677.0 272.7h1.3v1.3h-1.3zM687.3 272.7h1.3v1.3h-1.3zM697.5 272.7h1.3v1.3h-1.3zM707.7 272.7h1.3v1.3h-1.3zM717.9 272.7h1.3v1.3h-1.3zM728.2 272.7h1.3v1.3h-1.3zM738.4 272.7h1.3v1.3h-1.3zM748.6 272.7h1.3v1.3h-1.3zM758.8 272.7h1.3v1.3h-1.3zM769.1 272.7h1.3v1.3h-1.3zM779.3 272.7h1.3v1.3h-1.3zM789.5 272.7h1.3v1.3h-1.3zM799.8 272.7h1.3v1.3h-1.3zM810.0 272.7h1.3v1.3h-1.3zM820.2 272.7h1.3v1.3h-1.3zM830.4 272.7h1.3v1.3h-1.3zM840.7 272.7h1.3v1.3h-1.3zM850.9 272.7h1.3v1.3h-1.3zM861.1 272.7h1.3v1.3h-1.3zM871.3 272.7h1.3v1.3h-1.3zM881.6 272.7h1.3v1.3h-1.3zM891.8 272.7h1.3v1.3h-1.3zM902.0 272.7h1.3v1.3h-1.3zM912.2 272.7h1.3v1.3h-1.3zM922.5 272.7h1.3v1.3h-1.3zM932.7 272.7h1.3v1.3h-1.3zM942.9 272.7h1.3v1.3h-1.3zM953.1 272.7h1.3v1.3h-1.3zM12.3 283.0h1.3v1.3h-1.3zM22.6 283.0h1.3v1.3h-1.3zM32.8 283.0h1.3v1.3h-1.3zM43.0 283.0h1.3v1.3h-1.3zM53.3 283.0h1.3v1.3h-1.3zM63.5 283.0h1.3v1.3h-1.3zM73.7 283.0h1.3v1.3h-1.3zM83.9 283.0h1.3v1.3h-1.3zM94.2 283.0h1.3v1.3h-1.3zM104.4 283.0h1.3v1.3h-1.3zM114.6 283.0h1.3v1.3h-1.3zM124.8 283.0h1.3v1.3h-1.3zM135.1 283.0h1.3v1.3h-1.3zM145.3 283.0h1.3v1.3h-1.3zM155.5 283.0h1.3v1.3h-1.3zM165.7 283.0h1.3v1.3h-1.3zM176.0 283.0h1.3v1.3h-1.3zM186.2 283.0h1.3v1.3h-1.3zM196.4 283.0h1.3v1.3h-1.3zM206.6 283.0h1.3v1.3h-1.3zM216.9 283.0h1.3v1.3h-1.3zM227.1 283.0h1.3v1.3h-1.3zM237.3 283.0h1.3v1.3h-1.3zM247.5 283.0h1.3v1.3h-1.3zM257.8 283.0h1.3v1.3h-1.3zM268.0 283.0h1.3v1.3h-1.3zM278.2 283.0h1.3v1.3h-1.3zM288.5 283.0h1.3v1.3h-1.3zM298.7 283.0h1.3v1.3h-1.3zM308.9 283.0h1.3v1.3h-1.3zM319.1 283.0h1.3v1.3h-1.3zM329.4 283.0h1.3v1.3h-1.3zM339.6 283.0h1.3v1.3h-1.3zM349.8 283.0h1.3v1.3h-1.3zM360.0 283.0h1.3v1.3h-1.3zM370.3 283.0h1.3v1.3h-1.3zM380.5 283.0h1.3v1.3h-1.3zM390.7 283.0h1.3v1.3h-1.3zM400.9 283.0h1.3v1.3h-1.3zM411.2 283.0h1.3v1.3h-1.3zM421.4 283.0h1.3v1.3h-1.3zM431.6 283.0h1.3v1.3h-1.3zM441.8 283.0h1.3v1.3h-1.3zM452.1 283.0h1.3v1.3h-1.3zM462.3 283.0h1.3v1.3h-1.3zM472.5 283.0h1.3v1.3h-1.3zM482.7 283.0h1.3v1.3h-1.3zM493.0 283.0h1.3v1.3h-1.3zM503.2 283.0h1.3v1.3h-1.3zM513.4 283.0h1.3v1.3h-1.3zM523.7 283.0h1.3v1.3h-1.3zM533.9 283.0h1.3v1.3h-1.3zM544.1 283.0h1.3v1.3h-1.3zM554.3 283.0h1.3v1.3h-1.3zM564.6 283.0h1.3v1.3h-1.3zM574.8 283.0h1.3v1.3h-1.3zM585.0 283.0h1.3v1.3h-1.3zM595.2 283.0h1.3v1.3h-1.3zM605.5 283.0h1.3v1.3h-1.3zM615.7 283.0h1.3v1.3h-1.3zM625.9 283.0h1.3v1.3h-1.3zM636.1 283.0h1.3v1.3h-1.3zM646.4 283.0h1.3v1.3h-1.3zM656.6 283.0h1.3v1.3h-1.3zM666.8 283.0h1.3v1.3h-1.3zM677.0 283.0h1.3v1.3h-1.3zM687.3 283.0h1.3v1.3h-1.3zM697.5 283.0h1.3v1.3h-1.3zM707.7 283.0h1.3v1.3h-1.3zM717.9 283.0h1.3v1.3h-1.3zM728.2 283.0h1.3v1.3h-1.3zM738.4 283.0h1.3v1.3h-1.3zM748.6 283.0h1.3v1.3h-1.3zM758.8 283.0h1.3v1.3h-1.3zM769.1 283.0h1.3v1.3h-1.3zM779.3 283.0h1.3v1.3h-1.3zM789.5 283.0h1.3v1.3h-1.3zM799.8 283.0h1.3v1.3h-1.3zM810.0 283.0h1.3v1.3h-1.3zM820.2 283.0h1.3v1.3h-1.3zM830.4 283.0h1.3v1.3h-1.3zM840.7 283.0h1.3v1.3h-1.3zM850.9 283.0h1.3v1.3h-1.3zM861.1 283.0h1.3v1.3h-1.3zM871.3 283.0h1.3v1.3h-1.3zM881.6 283.0h1.3v1.3h-1.3zM891.8 283.0h1.3v1.3h-1.3zM902.0 283.0h1.3v1.3h-1.3zM912.2 283.0h1.3v1.3h-1.3zM922.5 283.0h1.3v1.3h-1.3zM932.7 283.0h1.3v1.3h-1.3zM942.9 283.0h1.3v1.3h-1.3zM953.1 283.0h1.3v1.3h-1.3zM12.3 293.2h1.3v1.3h-1.3zM22.6 293.2h1.3v1.3h-1.3zM32.8 293.2h1.3v1.3h-1.3zM43.0 293.2h1.3v1.3h-1.3zM53.3 293.2h1.3v1.3h-1.3zM63.5 293.2h1.3v1.3h-1.3zM73.7 293.2h1.3v1.3h-1.3zM83.9 293.2h1.3v1.3h-1.3zM94.2 293.2h1.3v1.3h-1.3zM104.4 293.2h1.3v1.3h-1.3zM114.6 293.2h1.3v1.3h-1.3zM124.8 293.2h1.3v1.3h-1.3zM135.1 293.2h1.3v1.3h-1.3zM145.3 293.2h1.3v1.3h-1.3zM155.5 293.2h1.3v1.3h-1.3zM165.7 293.2h1.3v1.3h-1.3zM176.0 293.2h1.3v1.3h-1.3zM186.2 293.2h1.3v1.3h-1.3zM196.4 293.2h1.3v1.3h-1.3zM206.6 293.2h1.3v1.3h-1.3zM216.9 293.2h1.3v1.3h-1.3zM227.1 293.2h1.3v1.3h-1.3zM237.3 293.2h1.3v1.3h-1.3zM247.5 293.2h1.3v1.3h-1.3zM257.8 293.2h1.3v1.3h-1.3zM268.0 293.2h1.3v1.3h-1.3zM278.2 293.2h1.3v1.3h-1.3zM288.5 293.2h1.3v1.3h-1.3zM298.7 293.2h1.3v1.3h-1.3zM308.9 293.2h1.3v1.3h-1.3zM319.1 293.2h1.3v1.3h-1.3zM329.4 293.2h1.3v1.3h-1.3zM339.6 293.2h1.3v1.3h-1.3zM349.8 293.2h1.3v1.3h-1.3zM360.0 293.2h1.3v1.3h-1.3zM370.3 293.2h1.3v1.3h-1.3zM380.5 293.2h1.3v1.3h-1.3zM390.7 293.2h1.3v1.3h-1.3zM400.9 293.2h1.3v1.3h-1.3zM411.2 293.2h1.3v1.3h-1.3zM421.4 293.2h1.3v1.3h-1.3zM431.6 293.2h1.3v1.3h-1.3zM441.8 293.2h1.3v1.3h-1.3zM452.1 293.2h1.3v1.3h-1.3zM462.3 293.2h1.3v1.3h-1.3zM472.5 293.2h1.3v1.3h-1.3zM482.7 293.2h1.3v1.3h-1.3zM493.0 293.2h1.3v1.3h-1.3zM503.2 293.2h1.3v1.3h-1.3zM513.4 293.2h1.3v1.3h-1.3zM523.7 293.2h1.3v1.3h-1.3zM533.9 293.2h1.3v1.3h-1.3zM544.1 293.2h1.3v1.3h-1.3zM554.3 293.2h1.3v1.3h-1.3zM564.6 293.2h1.3v1.3h-1.3zM574.8 293.2h1.3v1.3h-1.3zM585.0 293.2h1.3v1.3h-1.3zM595.2 293.2h1.3v1.3h-1.3zM605.5 293.2h1.3v1.3h-1.3zM615.7 293.2h1.3v1.3h-1.3zM625.9 293.2h1.3v1.3h-1.3zM636.1 293.2h1.3v1.3h-1.3zM646.4 293.2h1.3v1.3h-1.3zM656.6 293.2h1.3v1.3h-1.3zM666.8 293.2h1.3v1.3h-1.3zM677.0 293.2h1.3v1.3h-1.3zM687.3 293.2h1.3v1.3h-1.3zM697.5 293.2h1.3v1.3h-1.3zM707.7 293.2h1.3v1.3h-1.3zM717.9 293.2h1.3v1.3h-1.3zM728.2 293.2h1.3v1.3h-1.3zM738.4 293.2h1.3v1.3h-1.3zM748.6 293.2h1.3v1.3h-1.3zM758.8 293.2h1.3v1.3h-1.3zM769.1 293.2h1.3v1.3h-1.3zM779.3 293.2h1.3v1.3h-1.3zM789.5 293.2h1.3v1.3h-1.3zM799.8 293.2h1.3v1.3h-1.3zM810.0 293.2h1.3v1.3h-1.3zM820.2 293.2h1.3v1.3h-1.3zM830.4 293.2h1.3v1.3h-1.3zM840.7 293.2h1.3v1.3h-1.3zM850.9 293.2h1.3v1.3h-1.3zM861.1 293.2h1.3v1.3h-1.3zM871.3 293.2h1.3v1.3h-1.3zM881.6 293.2h1.3v1.3h-1.3zM891.8 293.2h1.3v1.3h-1.3zM902.0 293.2h1.3v1.3h-1.3zM912.2 293.2h1.3v1.3h-1.3zM922.5 293.2h1.3v1.3h-1.3zM932.7 293.2h1.3v1.3h-1.3zM942.9 293.2h1.3v1.3h-1.3zM953.1 293.2h1.3v1.3h-1.3zM12.3 303.4h1.3v1.3h-1.3zM22.6 303.4h1.3v1.3h-1.3zM32.8 303.4h1.3v1.3h-1.3zM43.0 303.4h1.3v1.3h-1.3zM53.3 303.4h1.3v1.3h-1.3zM63.5 303.4h1.3v1.3h-1.3zM73.7 303.4h1.3v1.3h-1.3zM83.9 303.4h1.3v1.3h-1.3zM94.2 303.4h1.3v1.3h-1.3zM104.4 303.4h1.3v1.3h-1.3zM114.6 303.4h1.3v1.3h-1.3zM124.8 303.4h1.3v1.3h-1.3zM135.1 303.4h1.3v1.3h-1.3zM145.3 303.4h1.3v1.3h-1.3zM155.5 303.4h1.3v1.3h-1.3zM165.7 303.4h1.3v1.3h-1.3zM176.0 303.4h1.3v1.3h-1.3zM186.2 303.4h1.3v1.3h-1.3zM196.4 303.4h1.3v1.3h-1.3zM206.6 303.4h1.3v1.3h-1.3zM216.9 303.4h1.3v1.3h-1.3zM227.1 303.4h1.3v1.3h-1.3zM237.3 303.4h1.3v1.3h-1.3zM247.5 303.4h1.3v1.3h-1.3zM257.8 303.4h1.3v1.3h-1.3zM268.0 303.4h1.3v1.3h-1.3zM278.2 303.4h1.3v1.3h-1.3zM288.5 303.4h1.3v1.3h-1.3zM298.7 303.4h1.3v1.3h-1.3zM308.9 303.4h1.3v1.3h-1.3zM319.1 303.4h1.3v1.3h-1.3zM329.4 303.4h1.3v1.3h-1.3zM339.6 303.4h1.3v1.3h-1.3zM349.8 303.4h1.3v1.3h-1.3zM360.0 303.4h1.3v1.3h-1.3zM370.3 303.4h1.3v1.3h-1.3zM380.5 303.4h1.3v1.3h-1.3zM390.7 303.4h1.3v1.3h-1.3zM400.9 303.4h1.3v1.3h-1.3zM411.2 303.4h1.3v1.3h-1.3zM421.4 303.4h1.3v1.3h-1.3zM431.6 303.4h1.3v1.3h-1.3zM441.8 303.4h1.3v1.3h-1.3zM452.1 303.4h1.3v1.3h-1.3zM462.3 303.4h1.3v1.3h-1.3zM472.5 303.4h1.3v1.3h-1.3zM482.7 303.4h1.3v1.3h-1.3zM493.0 303.4h1.3v1.3h-1.3zM503.2 303.4h1.3v1.3h-1.3zM513.4 303.4h1.3v1.3h-1.3zM523.7 303.4h1.3v1.3h-1.3zM533.9 303.4h1.3v1.3h-1.3zM544.1 303.4h1.3v1.3h-1.3zM554.3 303.4h1.3v1.3h-1.3zM564.6 303.4h1.3v1.3h-1.3zM574.8 303.4h1.3v1.3h-1.3zM585.0 303.4h1.3v1.3h-1.3zM595.2 303.4h1.3v1.3h-1.3zM605.5 303.4h1.3v1.3h-1.3zM615.7 303.4h1.3v1.3h-1.3zM625.9 303.4h1.3v1.3h-1.3zM636.1 303.4h1.3v1.3h-1.3zM646.4 303.4h1.3v1.3h-1.3zM656.6 303.4h1.3v1.3h-1.3zM666.8 303.4h1.3v1.3h-1.3zM677.0 303.4h1.3v1.3h-1.3zM687.3 303.4h1.3v1.3h-1.3zM697.5 303.4h1.3v1.3h-1.3zM707.7 303.4h1.3v1.3h-1.3zM717.9 303.4h1.3v1.3h-1.3zM728.2 303.4h1.3v1.3h-1.3zM738.4 303.4h1.3v1.3h-1.3zM748.6 303.4h1.3v1.3h-1.3zM758.8 303.4h1.3v1.3h-1.3zM769.1 303.4h1.3v1.3h-1.3zM779.3 303.4h1.3v1.3h-1.3zM789.5 303.4h1.3v1.3h-1.3zM799.8 303.4h1.3v1.3h-1.3zM810.0 303.4h1.3v1.3h-1.3zM820.2 303.4h1.3v1.3h-1.3zM830.4 303.4h1.3v1.3h-1.3zM840.7 303.4h1.3v1.3h-1.3zM850.9 303.4h1.3v1.3h-1.3zM861.1 303.4h1.3v1.3h-1.3zM871.3 303.4h1.3v1.3h-1.3zM881.6 303.4h1.3v1.3h-1.3zM891.8 303.4h1.3v1.3h-1.3zM902.0 303.4h1.3v1.3h-1.3zM912.2 303.4h1.3v1.3h-1.3zM922.5 303.4h1.3v1.3h-1.3zM932.7 303.4h1.3v1.3h-1.3zM942.9 303.4h1.3v1.3h-1.3zM953.1 303.4h1.3v1.3h-1.3z" fill="#18187a"/><circle cx="53.6" cy="232" r="6.2" fill="none" stroke="#80c0cc" stroke-width="1"/><path d="M53.6 238 V227.5" stroke="#80c0cc" stroke-width="1.6"/><path d="M51.3 230 L53.6 226.5 L55.9 230 Z" fill="#80c0cc"/><path d="M53.6 222 V225.8 M53.6 238.2 V242" stroke="#80c0cc" stroke-width="1"/><path d="M53.6 222 V212.4 H64 M53.6 242 V251" stroke="#4a7a1c" stroke-width="1"/><path d="M49.5 251 H58 L53.75 255.3 Z" fill="#000030" stroke="#4a7a1c" stroke-width="1"/><path d="M64.0 212.6 A2.70 5.2 0 0 1 69.1 212.6 A2.70 5.2 0 0 1 74.3 212.6 A2.70 5.2 0 0 1 79.4 212.6 A2.70 5.2 0 0 1 84.6 212.6 M84.6 212.6 A2.68 5.2 0 0 1 89.7 212.6 A2.68 5.2 0 0 1 94.8 212.6 A2.68 5.2 0 0 1 99.9 212.6 A2.68 5.2 0 0 1 105.0 212.6 M105.0 212.6 A2.68 5.2 0 0 1 110.1 212.6 A2.68 5.2 0 0 1 115.3 212.6 A2.68 5.2 0 0 1 120.4 212.6 A2.68 5.2 0 0 1 125.5 212.6 M125.5 212.6 A2.68 5.2 0 0 1 130.6 212.6 A2.68 5.2 0 0 1 135.7 212.6 A2.68 5.2 0 0 1 140.8 212.6 A2.68 5.2 0 0 1 145.9 212.6 M145.9 212.6 A2.68 5.2 0 0 1 151.0 212.6 A2.68 5.2 0 0 1 156.2 212.6 A2.68 5.2 0 0 1 161.3 212.6 A2.68 5.2 0 0 1 166.4 212.6 M166.4 212.6 A2.68 5.2 0 0 1 171.5 212.6 A2.68 5.2 0 0 1 176.6 212.6 A2.68 5.2 0 0 1 181.7 212.6 A2.68 5.2 0 0 1 186.8 212.6 M186.8 212.6 A2.68 5.2 0 0 1 192.0 212.6 A2.68 5.2 0 0 1 197.1 212.6 A2.68 5.2 0 0 1 202.2 212.6 A2.68 5.2 0 0 1 207.3 212.6 M207.3 212.6 A2.68 5.2 0 0 1 212.4 212.6 A2.68 5.2 0 0 1 217.5 212.6 A2.68 5.2 0 0 1 222.6 212.6 A2.68 5.2 0 0 1 227.7 212.6 M227.7 212.6 A2.68 5.2 0 0 1 232.9 212.6 A2.68 5.2 0 0 1 238.0 212.6 A2.68 5.2 0 0 1 243.1 212.6 A2.68 5.2 0 0 1 248.2 212.6 M248.2 212.6 A2.68 5.2 0 0 1 253.3 212.6 A2.68 5.2 0 0 1 258.4 212.6 A2.68 5.2 0 0 1 263.5 212.6 A2.68 5.2 0 0 1 268.6 212.6 M268.6 212.6 A2.68 5.2 0 0 1 273.8 212.6 A2.68 5.2 0 0 1 278.9 212.6 A2.68 5.2 0 0 1 284.0 212.6 A2.68 5.2 0 0 1 289.1 212.6 M289.1 212.6 A2.68 5.2 0 0 1 294.2 212.6 A2.68 5.2 0 0 1 299.3 212.6 A2.68 5.2 0 0 1 304.4 212.6 A2.68 5.2 0 0 1 309.6 212.6 M309.6 212.6 A2.68 5.2 0 0 1 314.7 212.6 A2.68 5.2 0 0 1 319.8 212.6 A2.68 5.2 0 0 1 324.9 212.6 A2.68 5.2 0 0 1 330.0 212.6 M330.0 212.6 A2.68 5.2 0 0 1 335.1 212.6 A2.68 5.2 0 0 1 340.2 212.6 A2.68 5.2 0 0 1 345.3 212.6 A2.68 5.2 0 0 1 350.5 212.6 M350.5 212.6 A2.68 5.2 0 0 1 355.6 212.6 A2.68 5.2 0 0 1 360.7 212.6 A2.68 5.2 0 0 1 365.8 212.6 A2.68 5.2 0 0 1 370.9 212.6 M370.9 212.6 A2.68 5.2 0 0 1 376.0 212.6 A2.68 5.2 0 0 1 381.1 212.6 A2.68 5.2 0 0 1 386.2 212.6 A2.68 5.2 0 0 1 391.4 212.6 M391.4 212.6 A2.68 5.2 0 0 1 396.5 212.6 A2.68 5.2 0 0 1 401.6 212.6 A2.68 5.2 0 0 1 406.7 212.6 A2.68 5.2 0 0 1 411.8 212.6 M411.8 212.6 A2.68 5.2 0 0 1 416.9 212.6 A2.68 5.2 0 0 1 422.0 212.6 A2.68 5.2 0 0 1 427.2 212.6 A2.68 5.2 0 0 1 432.3 212.6 M432.3 212.6 A2.68 5.2 0 0 1 437.4 212.6 A2.68 5.2 0 0 1 442.5 212.6 A2.68 5.2 0 0 1 447.6 212.6 A2.68 5.2 0 0 1 452.7 212.6 M452.7 212.6 A2.68 5.2 0 0 1 457.8 212.6 A2.68 5.2 0 0 1 462.9 212.6 A2.68 5.2 0 0 1 468.1 212.6 A2.68 5.2 0 0 1 473.2 212.6 M473.2 212.6 A2.68 5.2 0 0 1 478.3 212.6 A2.68 5.2 0 0 1 483.4 212.6 A2.68 5.2 0 0 1 488.5 212.6 A2.68 5.2 0 0 1 493.6 212.6 M493.6 212.6 A2.68 5.2 0 0 1 498.7 212.6 A2.68 5.2 0 0 1 503.8 212.6 A2.68 5.2 0 0 1 509.0 212.6 A2.68 5.2 0 0 1 514.1 212.6 M514.1 212.6 A2.68 5.2 0 0 1 519.2 212.6 A2.68 5.2 0 0 1 524.3 212.6 A2.68 5.2 0 0 1 529.4 212.6 A2.68 5.2 0 0 1 534.5 212.6 M534.5 212.6 A2.68 5.2 0 0 1 539.6 212.6 A2.68 5.2 0 0 1 544.8 212.6 A2.68 5.2 0 0 1 549.9 212.6 A2.68 5.2 0 0 1 555.0 212.6 M555.0 212.6 A2.68 5.2 0 0 1 560.1 212.6 A2.68 5.2 0 0 1 565.2 212.6 A2.68 5.2 0 0 1 570.3 212.6 A2.68 5.2 0 0 1 575.4 212.6 M575.4 212.6 A2.68 5.2 0 0 1 580.5 212.6 A2.68 5.2 0 0 1 585.7 212.6 A2.68 5.2 0 0 1 590.8 212.6 A2.68 5.2 0 0 1 595.9 212.6 M595.9 212.6 A2.68 5.2 0 0 1 601.0 212.6 A2.68 5.2 0 0 1 606.1 212.6 A2.68 5.2 0 0 1 611.2 212.6 A2.68 5.2 0 0 1 616.3 212.6 M616.3 212.6 A2.68 5.2 0 0 1 621.4 212.6 A2.68 5.2 0 0 1 626.6 212.6 A2.68 5.2 0 0 1 631.7 212.6 A2.68 5.2 0 0 1 636.8 212.6 M636.8 212.6 A2.68 5.2 0 0 1 641.9 212.6 A2.68 5.2 0 0 1 647.0 212.6 A2.68 5.2 0 0 1 652.1 212.6 A2.68 5.2 0 0 1 657.2 212.6 M657.2 212.6 A2.68 5.2 0 0 1 662.3 212.6 A2.68 5.2 0 0 1 667.5 212.6 A2.68 5.2 0 0 1 672.6 212.6 A2.68 5.2 0 0 1 677.7 212.6 M677.7 212.6 A2.68 5.2 0 0 1 682.8 212.6 A2.68 5.2 0 0 1 687.9 212.6 A2.68 5.2 0 0 1 693.0 212.6 A2.68 5.2 0 0 1 698.1 212.6 M698.1 212.6 A2.68 5.2 0 0 1 703.3 212.6 A2.68 5.2 0 0 1 708.4 212.6 A2.68 5.2 0 0 1 713.5 212.6 A2.68 5.2 0 0 1 718.6 212.6 M718.6 212.6 A2.68 5.2 0 0 1 723.7 212.6 A2.68 5.2 0 0 1 728.8 212.6 A2.68 5.2 0 0 1 733.9 212.6 A2.68 5.2 0 0 1 739.0 212.6 M739.0 212.6 A2.68 5.2 0 0 1 744.2 212.6 A2.68 5.2 0 0 1 749.3 212.6 A2.68 5.2 0 0 1 754.4 212.6 A2.68 5.2 0 0 1 759.5 212.6 M759.5 212.6 A2.68 5.2 0 0 1 764.6 212.6 A2.68 5.2 0 0 1 769.7 212.6 A2.68 5.2 0 0 1 774.8 212.6 A2.68 5.2 0 0 1 779.9 212.6 M779.9 212.6 A2.68 5.2 0 0 1 785.1 212.6 A2.68 5.2 0 0 1 790.2 212.6 A2.68 5.2 0 0 1 795.3 212.6 A2.68 5.2 0 0 1 800.4 212.6 M800.4 212.6 A2.68 5.2 0 0 1 805.5 212.6 A2.68 5.2 0 0 1 810.6 212.6 A2.68 5.2 0 0 1 815.7 212.6 A2.68 5.2 0 0 1 820.9 212.6 M820.9 212.6 A2.68 5.2 0 0 1 826.0 212.6 A2.68 5.2 0 0 1 831.1 212.6 A2.68 5.2 0 0 1 836.2 212.6 A2.68 5.2 0 0 1 841.3 212.6 M841.3 212.6 A2.68 5.2 0 0 1 846.4 212.6 A2.68 5.2 0 0 1 851.5 212.6 A2.68 5.2 0 0 1 856.6 212.6 A2.68 5.2 0 0 1 861.8 212.6 M861.8 212.6 A2.68 5.2 0 0 1 866.9 212.6 A2.68 5.2 0 0 1 872.0 212.6 A2.68 5.2 0 0 1 877.1 212.6 A2.68 5.2 0 0 1 882.2 212.6 M882.2 212.6 A2.68 5.2 0 0 1 887.3 212.6 A2.68 5.2 0 0 1 892.4 212.6 A2.68 5.2 0 0 1 897.5 212.6 A2.68 5.2 0 0 1 902.7 212.6 M902.7 212.6 A2.68 5.2 0 0 1 907.8 212.6 A2.68 5.2 0 0 1 912.9 212.6 A2.68 5.2 0 0 1 918.0 212.6 A2.68 5.2 0 0 1 923.1 212.6 " fill="none" stroke="#80c0cc" stroke-width="1"/><path d="M84.6 212.4 V222 M84.6 242 V251 M105.0 212.4 V222 M105.0 242 V251 M125.5 212.4 V222 M125.5 242 V251 M145.9 212.4 V222 M145.9 242 V251 M166.4 212.4 V222 M166.4 242 V251 M186.8 212.4 V222 M186.8 242 V251 M207.3 212.4 V222 M207.3 242 V251 M227.7 212.4 V222 M227.7 242 V251 M248.2 212.4 V222 M248.2 242 V251 M268.6 212.4 V222 M268.6 242 V251 M289.1 212.4 V222 M289.1 242 V251 M309.6 212.4 V222 M309.6 242 V251 M330.0 212.4 V222 M330.0 242 V251 M350.5 212.4 V222 M350.5 242 V251 M370.9 212.4 V222 M370.9 242 V251 M391.4 212.4 V222 M391.4 242 V251 M411.8 212.4 V222 M411.8 242 V251 M432.3 212.4 V222 M432.3 242 V251 M452.7 212.4 V222 M452.7 242 V251 M473.2 212.4 V222 M473.2 242 V251 M493.6 212.4 V222 M493.6 242 V251 M514.1 212.4 V222 M514.1 242 V251 M534.5 212.4 V222 M534.5 242 V251 M555.0 212.4 V222 M555.0 242 V251 M575.4 212.4 V222 M575.4 242 V251 M595.9 212.4 V222 M595.9 242 V251 M616.3 212.4 V222 M616.3 242 V251 M636.8 212.4 V222 M636.8 242 V251 M657.2 212.4 V222 M657.2 242 V251 M677.7 212.4 V222 M677.7 242 V251 M698.1 212.4 V222 M698.1 242 V251 M718.6 212.4 V222 M718.6 242 V251 M739.0 212.4 V222 M739.0 242 V251 M759.5 212.4 V222 M759.5 242 V251 M779.9 212.4 V222 M779.9 242 V251 M800.4 212.4 V222 M800.4 242 V251 M820.9 212.4 V222 M820.9 242 V251 M841.3 212.4 V222 M841.3 242 V251 M861.8 212.4 V222 M861.8 242 V251 M882.2 212.4 V222 M882.2 242 V251 M902.7 212.4 V222 M902.7 242 V251 M923.1 212.4 V222 M923.1 242 V251 " fill="none" stroke="#4a7a1c" stroke-width="1"/><path d="M84.6 222 V230.4 M80.2 230.4 H89.0 M80.2 234.6 Q84.6 233.8 89.0 234.6 M84.6 234.3 V242 M105.0 222 V230.4 M100.6 230.4 H109.4 M100.6 234.6 Q105.0 233.8 109.4 234.6 M105.0 234.3 V242 M125.5 222 V230.4 M121.1 230.4 H129.9 M121.1 234.6 Q125.5 233.8 129.9 234.6 M125.5 234.3 V242 M145.9 222 V230.4 M141.5 230.4 H150.3 M141.5 234.6 Q145.9 233.8 150.3 234.6 M145.9 234.3 V242 M166.4 222 V230.4 M162.0 230.4 H170.8 M162.0 234.6 Q166.4 233.8 170.8 234.6 M166.4 234.3 V242 M186.8 222 V230.4 M182.4 230.4 H191.2 M182.4 234.6 Q186.8 233.8 191.2 234.6 M186.8 234.3 V242 M207.3 222 V230.4 M202.9 230.4 H211.7 M202.9 234.6 Q207.3 233.8 211.7 234.6 M207.3 234.3 V242 M227.7 222 V230.4 M223.3 230.4 H232.1 M223.3 234.6 Q227.7 233.8 232.1 234.6 M227.7 234.3 V242 M248.2 222 V230.4 M243.8 230.4 H252.6 M243.8 234.6 Q248.2 233.8 252.6 234.6 M248.2 234.3 V242 M268.6 222 V230.4 M264.2 230.4 H273.0 M264.2 234.6 Q268.6 233.8 273.0 234.6 M268.6 234.3 V242 M289.1 222 V230.4 M284.7 230.4 H293.5 M284.7 234.6 Q289.1 233.8 293.5 234.6 M289.1 234.3 V242 M309.6 222 V230.4 M305.2 230.4 H314.0 M305.2 234.6 Q309.6 233.8 314.0 234.6 M309.6 234.3 V242 M330.0 222 V230.4 M325.6 230.4 H334.4 M325.6 234.6 Q330.0 233.8 334.4 234.6 M330.0 234.3 V242 M350.5 222 V230.4 M346.1 230.4 H354.9 M346.1 234.6 Q350.5 233.8 354.9 234.6 M350.5 234.3 V242 M370.9 222 V230.4 M366.5 230.4 H375.3 M366.5 234.6 Q370.9 233.8 375.3 234.6 M370.9 234.3 V242 M391.4 222 V230.4 M387.0 230.4 H395.8 M387.0 234.6 Q391.4 233.8 395.8 234.6 M391.4 234.3 V242 M411.8 222 V230.4 M407.4 230.4 H416.2 M407.4 234.6 Q411.8 233.8 416.2 234.6 M411.8 234.3 V242 M432.3 222 V230.4 M427.9 230.4 H436.7 M427.9 234.6 Q432.3 233.8 436.7 234.6 M432.3 234.3 V242 M452.7 222 V230.4 M448.3 230.4 H457.1 M448.3 234.6 Q452.7 233.8 457.1 234.6 M452.7 234.3 V242 M473.2 222 V230.4 M468.8 230.4 H477.6 M468.8 234.6 Q473.2 233.8 477.6 234.6 M473.2 234.3 V242 M493.6 222 V230.4 M489.2 230.4 H498.0 M489.2 234.6 Q493.6 233.8 498.0 234.6 M493.6 234.3 V242 M514.1 222 V230.4 M509.7 230.4 H518.5 M509.7 234.6 Q514.1 233.8 518.5 234.6 M514.1 234.3 V242 M534.5 222 V230.4 M530.1 230.4 H538.9 M530.1 234.6 Q534.5 233.8 538.9 234.6 M534.5 234.3 V242 M555.0 222 V230.4 M550.6 230.4 H559.4 M550.6 234.6 Q555.0 233.8 559.4 234.6 M555.0 234.3 V242 M575.4 222 V230.4 M571.0 230.4 H579.8 M571.0 234.6 Q575.4 233.8 579.8 234.6 M575.4 234.3 V242 M595.9 222 V230.4 M591.5 230.4 H600.3 M591.5 234.6 Q595.9 233.8 600.3 234.6 M595.9 234.3 V242 M616.3 222 V230.4 M611.9 230.4 H620.7 M611.9 234.6 Q616.3 233.8 620.7 234.6 M616.3 234.3 V242 M636.8 222 V230.4 M632.4 230.4 H641.2 M632.4 234.6 Q636.8 233.8 641.2 234.6 M636.8 234.3 V242 M657.2 222 V230.4 M652.8 230.4 H661.6 M652.8 234.6 Q657.2 233.8 661.6 234.6 M657.2 234.3 V242 M677.7 222 V230.4 M673.3 230.4 H682.1 M673.3 234.6 Q677.7 233.8 682.1 234.6 M677.7 234.3 V242 M698.1 222 V230.4 M693.7 230.4 H702.5 M693.7 234.6 Q698.1 233.8 702.5 234.6 M698.1 234.3 V242 M718.6 222 V230.4 M714.2 230.4 H723.0 M714.2 234.6 Q718.6 233.8 723.0 234.6 M718.6 234.3 V242 M739.0 222 V230.4 M734.6 230.4 H743.4 M734.6 234.6 Q739.0 233.8 743.4 234.6 M739.0 234.3 V242 M759.5 222 V230.4 M755.1 230.4 H763.9 M755.1 234.6 Q759.5 233.8 763.9 234.6 M759.5 234.3 V242 M779.9 222 V230.4 M775.5 230.4 H784.3 M775.5 234.6 Q779.9 233.8 784.3 234.6 M779.9 234.3 V242 M800.4 222 V230.4 M796.0 230.4 H804.8 M796.0 234.6 Q800.4 233.8 804.8 234.6 M800.4 234.3 V242 M820.9 222 V230.4 M816.5 230.4 H825.3 M816.5 234.6 Q820.9 233.8 825.3 234.6 M820.9 234.3 V242 M841.3 222 V230.4 M836.9 230.4 H845.7 M836.9 234.6 Q841.3 233.8 845.7 234.6 M841.3 234.3 V242 M861.8 222 V230.4 M857.4 230.4 H866.2 M857.4 234.6 Q861.8 233.8 866.2 234.6 M861.8 234.3 V242 M882.2 222 V230.4 M877.8 230.4 H886.6 M877.8 234.6 Q882.2 233.8 886.6 234.6 M882.2 234.3 V242 M902.7 222 V230.4 M898.3 230.4 H907.1 M898.3 234.6 Q902.7 233.8 907.1 234.6 M902.7 234.3 V242 M923.1 222 V230.4 M918.7 230.4 H927.5 M918.7 234.6 Q923.1 233.8 927.5 234.6 M923.1 234.3 V242 " fill="none" stroke="#80c0cc" stroke-width="1"/><path d="M80.2 251 H89.0 L84.6 255.3 Z M100.6 251 H109.4 L105.0 255.3 Z M121.1 251 H129.9 L125.5 255.3 Z M141.5 251 H150.3 L145.9 255.3 Z M162.0 251 H170.8 L166.4 255.3 Z M182.4 251 H191.2 L186.8 255.3 Z M202.9 251 H211.7 L207.3 255.3 Z M223.3 251 H232.1 L227.7 255.3 Z M243.8 251 H252.6 L248.2 255.3 Z M264.2 251 H273.0 L268.6 255.3 Z M284.7 251 H293.5 L289.1 255.3 Z M305.2 251 H314.0 L309.6 255.3 Z M325.6 251 H334.4 L330.0 255.3 Z M346.1 251 H354.9 L350.5 255.3 Z M366.5 251 H375.3 L370.9 255.3 Z M387.0 251 H395.8 L391.4 255.3 Z M407.4 251 H416.2 L411.8 255.3 Z M427.9 251 H436.7 L432.3 255.3 Z M448.3 251 H457.1 L452.7 255.3 Z M468.8 251 H477.6 L473.2 255.3 Z M489.2 251 H498.0 L493.6 255.3 Z M509.7 251 H518.5 L514.1 255.3 Z M530.1 251 H538.9 L534.5 255.3 Z M550.6 251 H559.4 L555.0 255.3 Z M571.0 251 H579.8 L575.4 255.3 Z M591.5 251 H600.3 L595.9 255.3 Z M611.9 251 H620.7 L616.3 255.3 Z M632.4 251 H641.2 L636.8 255.3 Z M652.8 251 H661.6 L657.2 255.3 Z M673.3 251 H682.1 L677.7 255.3 Z M693.7 251 H702.5 L698.1 255.3 Z M714.2 251 H723.0 L718.6 255.3 Z M734.6 251 H743.4 L739.0 255.3 Z M755.1 251 H763.9 L759.5 255.3 Z M775.5 251 H784.3 L779.9 255.3 Z M796.0 251 H804.8 L800.4 255.3 Z M816.5 251 H825.3 L820.9 255.3 Z M836.9 251 H845.7 L841.3 255.3 Z M857.4 251 H866.2 L861.8 255.3 Z M877.8 251 H886.6 L882.2 255.3 Z M898.3 251 H907.1 L902.7 255.3 Z M918.7 251 H927.5 L923.1 255.3 Z " fill="#000030" stroke="#4a7a1c" stroke-width="1"/><g fill="#4a7a1c"><circle cx="84.6" cy="212.4" r="1.3"/><circle cx="105.0" cy="212.4" r="1.3"/><circle cx="125.5" cy="212.4" r="1.3"/><circle cx="145.9" cy="212.4" r="1.3"/><circle cx="166.4" cy="212.4" r="1.3"/><circle cx="186.8" cy="212.4" r="1.3"/><circle cx="207.3" cy="212.4" r="1.3"/><circle cx="227.7" cy="212.4" r="1.3"/><circle cx="248.2" cy="212.4" r="1.3"/><circle cx="268.6" cy="212.4" r="1.3"/><circle cx="289.1" cy="212.4" r="1.3"/><circle cx="309.6" cy="212.4" r="1.3"/><circle cx="330.0" cy="212.4" r="1.3"/><circle cx="350.5" cy="212.4" r="1.3"/><circle cx="370.9" cy="212.4" r="1.3"/><circle cx="391.4" cy="212.4" r="1.3"/><circle cx="411.8" cy="212.4" r="1.3"/><circle cx="432.3" cy="212.4" r="1.3"/><circle cx="452.7" cy="212.4" r="1.3"/><circle cx="473.2" cy="212.4" r="1.3"/><circle cx="493.6" cy="212.4" r="1.3"/><circle cx="514.1" cy="212.4" r="1.3"/><circle cx="534.5" cy="212.4" r="1.3"/><circle cx="555.0" cy="212.4" r="1.3"/><circle cx="575.4" cy="212.4" r="1.3"/><circle cx="595.9" cy="212.4" r="1.3"/><circle cx="616.3" cy="212.4" r="1.3"/><circle cx="636.8" cy="212.4" r="1.3"/><circle cx="657.2" cy="212.4" r="1.3"/><circle cx="677.7" cy="212.4" r="1.3"/><circle cx="698.1" cy="212.4" r="1.3"/><circle cx="718.6" cy="212.4" r="1.3"/><circle cx="739.0" cy="212.4" r="1.3"/><circle cx="759.5" cy="212.4" r="1.3"/><circle cx="779.9" cy="212.4" r="1.3"/><circle cx="800.4" cy="212.4" r="1.3"/><circle cx="820.9" cy="212.4" r="1.3"/><circle cx="841.3" cy="212.4" r="1.3"/><circle cx="861.8" cy="212.4" r="1.3"/><circle cx="882.2" cy="212.4" r="1.3"/><circle cx="902.7" cy="212.4" r="1.3"/></g><g font-family="Liberation Sans" font-weight="bold" font-size="5.8" fill="#ffff50" stroke="#f0f040" stroke-width="0.35" letter-spacing="-0.25"><text x="74.3" y="207.6" text-anchor="middle">L1</text><text x="74.3" y="220.3" text-anchor="middle">1</text><text x="92.1" y="233">C1</text><text x="93.1" y="238">1</text><text x="94.8" y="207.6" text-anchor="middle">L2</text><text x="94.8" y="220.3" text-anchor="middle">1</text><text x="112.5" y="233">C2</text><text x="113.5" y="238">1</text><text x="115.3" y="207.6" text-anchor="middle">L3</text><text x="115.3" y="220.3" text-anchor="middle">1</text><text x="133.0" y="233">C3</text><text x="134.0" y="238">1</text><text x="135.7" y="207.6" text-anchor="middle">L4</text><text x="135.7" y="220.3" text-anchor="middle">1</text><text x="153.4" y="233">C4</text><text x="154.4" y="238">1</text><text x="156.2" y="207.6" text-anchor="middle">L5</text><text x="156.2" y="220.3" text-anchor="middle">1</text><text x="173.9" y="233">C5</text><text x="174.9" y="238">1</text><text x="176.6" y="207.6" text-anchor="middle">L6</text><text x="176.6" y="220.3" text-anchor="middle">1</text><text x="194.3" y="233">C6</text><text x="195.3" y="238">1</text><text x="197.1" y="207.6" text-anchor="middle">L7</text><text x="197.1" y="220.3" text-anchor="middle">1</text><text x="214.8" y="233">C7</text><text x="215.8" y="238">1</text><text x="217.5" y="207.6" text-anchor="middle">L8</text><text x="217.5" y="220.3" text-anchor="middle">1</text><text x="235.2" y="233">C8</text><text x="236.2" y="238">1</text><text x="238.0" y="207.6" text-anchor="middle">L9</text><text x="238.0" y="220.3" text-anchor="middle">1</text><text x="255.7" y="233">C9</text><text x="256.7" y="238">1</text><text x="258.4" y="207.6" text-anchor="middle">L10</text><text x="258.4" y="220.3" text-anchor="middle">1</text><text x="276.1" y="233">C10</text><text x="277.1" y="238">1</text><text x="278.9" y="207.6" text-anchor="middle">L11</text><text x="278.9" y="220.3" text-anchor="middle">1</text><text x="296.6" y="233">C11</text><text x="297.6" y="238">1</text><text x="299.3" y="207.6" text-anchor="middle">L12</text><text x="299.3" y="220.3" text-anchor="middle">1</text><text x="317.1" y="233">C12</text><text x="318.1" y="238">1</text><text x="319.8" y="207.6" text-anchor="middle">L13</text><text x="319.8" y="220.3" text-anchor="middle">1</text><text x="337.5" y="233">C13</text><text x="338.5" y="238">1</text><text x="340.2" y="207.6" text-anchor="middle">L14</text><text x="340.2" y="220.3" text-anchor="middle">1</text><text x="358.0" y="233">C14</text><text x="359.0" y="238">1</text><text x="360.7" y="207.6" text-anchor="middle">L15</text><text x="360.7" y="220.3" text-anchor="middle">1</text><text x="378.4" y="233">C15</text><text x="379.4" y="238">1</text><text x="381.1" y="207.6" text-anchor="middle">L16</text><text x="381.1" y="220.3" text-anchor="middle">1</text><text x="398.9" y="233">C16</text><text x="399.9" y="238">1</text><text x="401.6" y="207.6" text-anchor="middle">L17</text><text x="401.6" y="220.3" text-anchor="middle">1</text><text x="419.3" y="233">C17</text><text x="420.3" y="238">1</text><text x="422.0" y="207.6" text-anchor="middle">L18</text><text x="422.0" y="220.3" text-anchor="middle">1</text><text x="439.8" y="233">C18</text><text x="440.8" y="238">1</text><text x="442.5" y="207.6" text-anchor="middle">L19</text><text x="442.5" y="220.3" text-anchor="middle">1</text><text x="460.2" y="233">C19</text><text x="461.2" y="238">1</text><text x="462.9" y="207.6" text-anchor="middle">L20</text><text x="462.9" y="220.3" text-anchor="middle">1</text><text x="480.7" y="233">C20</text><text x="481.7" y="238">1</text><text x="483.4" y="207.6" text-anchor="middle">L21</text><text x="483.4" y="220.3" text-anchor="middle">1</text><text x="501.1" y="233">C21</text><text x="502.1" y="238">1</text><text x="503.8" y="207.6" text-anchor="middle">L22</text><text x="503.8" y="220.3" text-anchor="middle">1</text><text x="521.6" y="233">C22</text><text x="522.6" y="238">1</text><text x="524.3" y="207.6" text-anchor="middle">L23</text><text x="524.3" y="220.3" text-anchor="middle">1</text><text x="542.0" y="233">C23</text><text x="543.0" y="238">1</text><text x="544.8" y="207.6" text-anchor="middle">L24</text><text x="544.8" y="220.3" text-anchor="middle">1</text><text x="562.5" y="233">C24</text><text x="563.5" y="238">1</text><text x="565.2" y="207.6" text-anchor="middle">L25</text><text x="565.2" y="220.3" text-anchor="middle">1</text><text x="582.9" y="233">C25</text><text x="583.9" y="238">1</text><text x="585.7" y="207.6" text-anchor="middle">L26</text><text x="585.7" y="220.3" text-anchor="middle">1</text><text x="603.4" y="233">C26</text><text x="604.4" y="238">1</text><text x="606.1" y="207.6" text-anchor="middle">L27</text><text x="606.1" y="220.3" text-anchor="middle">1</text><text x="623.8" y="233">C27</text><text x="624.8" y="238">1</text><text x="626.6" y="207.6" text-anchor="middle">L28</text><text x="626.6" y="220.3" text-anchor="middle">1</text><text x="644.3" y="233">C28</text><text x="645.3" y="238">1</text><text x="647.0" y="207.6" text-anchor="middle">L29</text><text x="647.0" y="220.3" text-anchor="middle">1</text><text x="664.7" y="233">C29</text><text x="665.7" y="238">1</text><text x="667.5" y="207.6" text-anchor="middle">L30</text><text x="667.5" y="220.3" text-anchor="middle">1</text><text x="685.2" y="233">C30</text><text x="686.2" y="238">1</text><text x="687.9" y="207.6" text-anchor="middle">L31</text><text x="687.9" y="220.3" text-anchor="middle">1</text><text x="705.6" y="233">C31</text><text x="706.6" y="238">1</text><text x="708.4" y="207.6" text-anchor="middle">L32</text><text x="708.4" y="220.3" text-anchor="middle">1</text><text x="726.1" y="233">C32</text><text x="727.1" y="238">1</text><text x="728.8" y="207.6" text-anchor="middle">L33</text><text x="728.8" y="220.3" text-anchor="middle">1</text><text x="746.5" y="233">C33</text><text x="747.5" y="238">1</text><text x="749.3" y="207.6" text-anchor="middle">L34</text><text x="749.3" y="220.3" text-anchor="middle">1</text><text x="767.0" y="233">C34</text><text x="768.0" y="238">1</text><text x="769.7" y="207.6" text-anchor="middle">L35</text><text x="769.7" y="220.3" text-anchor="middle">1</text><text x="787.4" y="233">C35</text><text x="788.4" y="238">1</text><text x="790.2" y="207.6" text-anchor="middle">L36</text><text x="790.2" y="220.3" text-anchor="middle">1</text><text x="807.9" y="233">C36</text><text x="808.9" y="238">1</text><text x="810.6" y="207.6" text-anchor="middle">L37</text><text x="810.6" y="220.3" text-anchor="middle">1</text><text x="828.4" y="233">C37</text><text x="829.4" y="238">1</text><text x="831.1" y="207.6" text-anchor="middle">L38</text><text x="831.1" y="220.3" text-anchor="middle">1</text><text x="848.8" y="233">C38</text><text x="849.8" y="238">1</text><text x="851.5" y="207.6" text-anchor="middle">L39</text><text x="851.5" y="220.3" text-anchor="middle">1</text><text x="869.3" y="233">C39</text><text x="870.3" y="238">1</text><text x="872.0" y="207.6" text-anchor="middle">L40</text><text x="872.0" y="220.3" text-anchor="middle">1</text><text x="889.7" y="233">C40</text><text x="890.7" y="238">1</text><text x="892.4" y="207.6" text-anchor="middle">L41</text><text x="892.4" y="220.3" text-anchor="middle">1</text><text x="910.2" y="233">C41</text><text x="911.2" y="238">1</text><text x="912.9" y="207.6" text-anchor="middle">L42</text><text x="912.9" y="220.3" text-anchor="middle">1</text><text x="930.6" y="233">C42</text><text x="931.6" y="238">1</text><text x="64" y="233">V1 (AC)</text><text x="64" y="238">Step</text></g><path d="M462.5 279.5 L466 283 L462.5 286.5 L459 283 Z" fill="none" stroke="#b03010" stroke-width="1"/></svg></div><div class="a" style="left:9px;top:364px;width:452px;height:352px;overflow:hidden"><svg style="left:-9px;top:-364px" width="1000" height="749"><path d="M9 442 H461 M9 521.4 H461 M9 600.8 H461 M9 680.2 H461 " stroke="#6a6a6a" stroke-width="1.2" stroke-dasharray="2.4 2.27" fill="none"/><path d="M190 364 V716 M371 364 V716 " stroke="#5a5a5a" stroke-width="1.2" stroke-dasharray="2.4 2.27" fill="none"/><polyline points="8.5,600.8 9.0,600.8 9.4,600.8 9.9,600.8 10.3,600.8 10.8,600.8 11.2,600.8 11.7,600.8 12.1,600.8 12.6,600.8 13.0,600.8 13.5,600.8 13.9,600.8 14.4,600.8 14.8,600.8 15.3,600.8 15.7,600.8 16.2,600.8 16.6,600.8 17.1,600.8 17.6,600.8 18.0,600.8 18.5,600.8 18.9,600.8 19.4,600.8 19.8,600.8 20.3,600.8 20.7,600.8 21.2,600.8 21.6,600.8 22.1,600.8 22.5,600.8 23.0,600.8 23.4,600.8 23.9,600.8 24.3,600.8 24.8,600.8 25.2,600.8 25.7,600.8 26.1,600.8 26.6,600.8 27.1,600.8 27.5,600.8 28.0,600.8 28.4,600.8 28.9,600.8 29.3,600.8 29.8,600.8 30.2,600.8 30.7,600.8 31.1,600.8 31.6,600.8 32.0,600.8 32.5,600.8 32.9,600.8 33.4,600.8 33.8,600.8 34.3,600.8 34.7,600.8 35.2,600.8 35.7,600.8 36.1,600.8 36.6,600.8 37.0,600.8 37.5,600.8 37.9,600.8 38.4,600.8 38.8,600.8 39.3,600.8 39.7,600.8 40.2,600.8 40.6,600.7 41.1,600.7 41.5,600.6 42.0,600.4 42.4,600.1 42.9,599.6 43.3,598.7 43.8,597.4 44.2,595.2 44.7,592.1 45.2,587.5 45.6,581.1 46.1,572.4 46.5,561.1 47.0,546.8 47.4,529.7 47.9,510.0 48.3,488.4 48.8,466.3 49.2,445.2 49.7,427.0 50.1,413.5 50.6,406.1 51.0,405.7 51.5,411.9 51.9,423.1 52.4,437.1 52.8,450.6 53.3,460.7 53.8,465.2 54.2,463.2 54.7,455.6 55.1,444.8 55.6,434.1 56.0,426.7 56.5,424.8 56.9,428.8 57.4,437.0 57.8,446.3 58.3,453.5 58.7,455.8 59.2,452.7 59.6,445.6 60.1,437.5 60.5,431.8 61.0,430.7 61.4,434.5 61.9,441.3 62.3,448.0 62.8,451.6 63.3,450.6 63.7,445.6 64.2,439.2 64.6,434.5 65.1,433.7 65.5,437.1 66.0,442.7 66.4,447.7 66.9,449.5 67.3,447.3 67.8,442.4 68.2,437.5 68.7,435.3 69.1,436.8 69.6,441.1 70.0,445.7 70.5,448.0 70.9,446.8 71.4,442.9 71.8,438.7 72.3,436.5 72.8,437.7 73.2,441.3 73.7,445.2 74.1,447.0 74.6,445.7 75.0,442.2 75.5,438.7 75.9,437.4 76.4,438.9 76.8,442.3 77.3,445.4 77.7,446.2 78.2,444.3 78.6,441.0 79.1,438.5 79.5,438.3 80.0,440.5 80.4,443.6 80.9,445.5 81.4,445.1 81.8,442.6 82.3,439.8 82.7,438.6 83.2,439.7 83.6,442.3 84.1,444.6 84.5,445.1 85.0,443.4 85.4,440.8 85.9,439.1 86.3,439.5 86.8,441.5 87.2,443.9 87.7,444.8 88.1,443.8 88.6,441.5 89.0,439.7 89.5,439.5 90.0,441.1 90.4,443.3 90.9,444.5 91.3,443.9 91.8,441.9 92.2,440.1 92.7,439.7 93.1,441.0 93.6,443.0 94.0,444.2 94.5,443.8 94.9,442.1 95.4,440.4 95.8,439.9 96.3,441.0 96.7,442.8 97.2,443.9 97.6,443.6 98.1,442.1 98.5,440.5 99.0,440.1 99.5,441.1 99.9,442.7 100.4,443.8 100.8,443.4 101.3,442.0 101.7,440.6 102.2,440.3 102.6,441.3 103.1,442.8 103.5,443.6 104.0,443.2 104.4,441.9 104.9,440.7 105.3,440.5 105.8,441.5 106.2,442.8 106.7,443.5 107.1,443.0 107.6,441.7 108.0,440.7 108.5,440.7 109.0,441.7 109.4,442.9 109.9,443.4 110.3,442.8 110.8,441.6 111.2,440.7 111.7,440.9 112.1,442.0 112.6,443.0 113.0,443.3 113.5,442.5 113.9,441.4 114.4,440.8 114.8,441.2 115.3,442.3 115.7,443.2 116.2,443.3 116.6,442.6 117.1,441.8 117.6,441.7 118.0,442.6 118.5,444.2 118.9,445.5 119.4,446.3 119.8,446.8 120.3,447.7 120.7,450.0 121.2,453.7 121.6,458.6 122.1,463.8 122.5,469.4 123.0,475.8 123.4,483.9 123.9,494.3 124.3,506.8 124.8,520.7 125.2,535.3 125.7,550.1 126.2,565.2 126.6,580.8 127.1,596.6 127.5,611.5 128.0,624.2 128.4,633.4 128.9,638.7 129.3,640.3 129.8,638.7 130.2,634.2 130.7,626.9 131.1,616.9 131.6,605.2 132.0,593.4 132.5,583.4 132.9,576.8 133.4,574.3 133.8,575.6 134.3,580.2 134.7,587.2 135.2,595.8 135.7,605.1 136.1,613.7 136.6,619.9 137.0,622.3 137.5,620.1 137.9,613.9 138.4,605.5 138.8,596.9 139.3,589.9 139.7,585.5 140.2,584.3 140.6,586.4 141.1,591.5 141.5,598.7 142.0,606.5 142.4,612.9 142.9,616.1 143.3,615.0 143.8,610.0 144.2,602.8 144.7,595.6 145.2,590.3 145.6,588.2 146.1,589.5 146.5,593.5 147.0,599.3 147.4,605.5 147.9,610.4 148.3,612.5 148.8,611.1 149.2,606.2 149.7,599.6 150.1,593.5 150.6,590.0 151.0,590.4 151.5,594.4 151.9,600.2 152.4,605.7 152.8,609.3 153.3,609.9 153.8,607.7 154.2,603.3 154.7,598.1 155.1,593.9 155.6,592.0 156.0,593.3 156.5,597.4 156.9,602.9 157.4,607.7 157.8,609.6 158.3,607.9 158.7,603.4 159.2,598.0 159.6,594.0 160.1,593.0 160.5,595.1 161.0,599.3 161.4,603.8 161.9,606.9 162.3,607.6 162.8,605.6 163.3,601.9 163.7,597.7 164.2,594.7 164.6,594.2 165.1,596.6 165.5,600.9 166.0,605.2 166.4,607.5 166.9,606.8 167.3,603.2 167.8,598.6 168.2,595.1 168.7,594.5 169.1,596.8 169.6,600.8 170.0,604.6 170.5,606.4 170.9,605.7 171.4,602.8 171.9,599.2 172.3,596.4 172.8,595.7 173.2,597.2 173.7,600.4 174.1,603.8 174.6,605.8 175.0,605.4 175.5,602.8 175.9,599.0 176.4,596.2 176.8,595.6 177.3,597.8 177.7,601.5 178.2,604.9 178.6,606.0 179.1,604.3 179.5,600.9 180.0,597.5 180.5,596.0 180.9,597.1 181.4,600.0 181.8,603.1 182.3,604.9 182.7,604.6 183.2,602.3 183.6,599.4 184.1,597.3 184.5,597.0 185.0,598.6 185.4,601.3 185.9,603.8 186.3,604.7 186.8,603.6 187.2,600.9 187.7,598.1 188.1,596.7 188.6,597.7 189.0,600.4 189.5,603.4 190.0,604.8 190.4,603.9 190.9,601.1 191.3,598.1 191.8,596.6 192.2,597.4 192.7,599.9 193.1,602.4 193.6,603.5 194.0,602.3 194.5,599.3 194.9,596.2 195.4,594.1 195.8,593.8 196.3,594.6 196.7,595.2 197.2,594.3 197.6,591.0 198.1,585.8 198.6,579.7 199.0,573.6 199.5,568.4 199.9,563.6 200.4,558.2 200.8,550.8 201.3,540.7 201.7,527.9 202.2,513.7 202.6,499.6 203.1,486.8 203.5,475.2 204.0,463.9 204.4,451.8 204.9,438.6 205.3,425.1 205.8,413.2 206.2,405.0 206.7,401.1 207.1,401.3 207.6,404.0 208.1,407.8 208.5,412.3 209.0,417.9 209.4,425.4 209.9,435.2 210.3,446.5 210.8,457.4 211.2,465.9 211.7,470.3 212.1,470.5 212.6,467.3 213.0,462.1 213.5,456.0 213.9,449.5 214.4,442.6 214.8,435.3 215.3,428.1 215.7,422.1 216.2,418.8 216.7,419.4 217.1,424.3 217.6,432.4 218.0,441.7 218.5,449.9 218.9,455.6 219.4,458.2 219.8,458.3 220.3,456.5 220.7,453.5 221.2,449.2 221.6,443.4 222.1,436.4 222.5,429.6 223.0,425.0 223.4,424.3 223.9,428.2 224.3,435.5 224.8,443.8 225.2,450.8 225.7,454.6 226.2,455.2 226.6,453.4 227.1,450.1 227.5,446.1 228.0,441.5 228.4,436.7 228.9,432.2 229.3,429.3 229.8,429.4 230.2,433.2 230.7,439.8 231.1,447.2 231.6,453.0 232.0,455.3 232.5,453.5 232.9,448.6 233.4,442.5 233.8,437.1 234.3,433.7 234.8,432.6 235.2,433.5 235.7,436.1 236.1,439.7 236.6,443.9 237.0,448.1 237.5,451.1 237.9,451.9 238.4,449.6 238.8,444.6 239.3,438.3 239.7,433.1 240.2,430.9 240.6,432.8 241.1,437.8 241.5,444.0 242.0,448.9 242.4,451.0 242.9,449.9 243.3,446.6 243.8,442.6 244.3,439.1 244.7,436.6 245.2,435.5 245.6,435.8 246.1,437.6 246.5,441.1 247.0,445.4 247.4,449.1 247.9,450.6 248.3,448.7 248.8,444.0 249.2,438.2 249.7,433.9 250.1,433.0 250.6,435.8 251.0,441.0 251.5,446.1 251.9,449.1 252.4,449.1 252.8,446.6 253.3,442.9 253.8,439.5 254.2,437.3 254.7,436.6 255.1,437.4 255.6,439.6 256.0,442.5 256.5,445.6 256.9,447.7 257.4,447.9 257.8,445.7 258.3,441.7 258.7,437.5 259.2,435.0 259.6,435.5 260.1,439.0 260.5,443.8 261.0,447.8 261.4,449.2 261.9,447.2 262.4,443.1 262.8,438.7 263.3,436.1 263.7,436.2 264.2,438.8 264.6,442.3 265.1,445.3 265.5,446.7 266.0,446.3 266.4,444.5 266.9,442.0 267.3,439.8 267.8,438.4 268.2,438.3 268.7,439.7 269.1,442.5 269.6,445.8 270.0,448.2 270.5,448.7 270.9,446.8 271.4,443.6 271.9,440.9 272.3,440.6 272.8,443.7 273.2,449.3 273.7,455.4 274.1,459.8 274.6,461.6 275.0,461.4 275.5,461.4 275.9,463.5 276.4,469.0 276.8,477.6 277.3,487.7 277.7,498.0 278.2,507.5 278.6,516.1 279.1,524.6 279.5,533.6 280.0,543.7 280.5,555.3 280.9,568.2 281.4,582.2 281.8,596.4 282.3,609.6 282.7,620.4 283.2,628.1 283.6,632.6 284.1,635.0 284.5,636.8 285.0,638.7 285.4,640.5 285.9,640.5 286.3,637.1 286.8,629.4 287.2,618.1 287.7,605.5 288.1,594.0 288.6,585.7 289.1,581.0 289.5,578.7 290.0,577.6 290.4,576.6 290.9,576.0 291.3,576.8 291.8,580.2 292.2,586.8 292.7,595.9 293.1,606.0 293.6,615.1 294.0,621.6 294.5,624.6 294.9,624.1 295.4,620.7 295.8,615.3 296.3,609.2 296.7,603.0 297.2,597.5 297.6,592.8 298.1,588.8 298.6,585.4 299.0,583.1 299.5,582.7 299.9,585.0 300.4,590.7 300.8,599.2 301.3,608.5 301.7,616.2 302.2,620.0 302.6,619.1 303.1,614.5 303.5,608.2 304.0,602.3 304.4,598.0 304.9,595.2 305.3,592.8 305.8,590.3 306.2,588.1 306.7,587.6 307.2,590.0 307.6,595.7 308.1,603.5 308.5,611.0 309.0,616.0 309.4,616.8 309.9,613.6 310.3,607.7 310.8,601.0 311.2,595.1 311.7,591.1 312.1,589.5 312.6,590.1 313.0,592.4 313.5,596.0 313.9,600.1 314.4,604.1 314.8,607.4 315.3,609.7 315.7,610.7 316.2,610.0 316.7,607.2 317.1,602.4 317.6,596.4 318.0,590.7 318.5,587.6 318.9,588.5 319.4,593.5 319.8,600.8 320.3,607.7 320.7,611.8 321.2,611.8 321.6,608.7 322.1,604.1 322.5,599.9 323.0,597.2 323.4,595.7 323.9,594.9 324.3,594.4 324.8,594.7 325.2,596.5 325.7,600.2 326.2,605.1 326.6,609.4 327.1,611.2 327.5,609.5 328.0,604.5 328.4,598.1 328.9,592.7 329.3,590.3 329.8,591.6 330.2,595.7 330.7,601.2 331.1,606.0 331.6,608.7 332.0,608.8 332.5,606.6 332.9,603.1 333.4,599.3 333.8,596.4 334.3,594.9 334.8,594.9 335.2,596.4 335.7,598.7 336.1,601.5 336.6,604.3 337.0,606.4 337.5,607.3 337.9,606.3 338.4,603.3 338.8,598.9 339.3,594.6 339.7,592.2 340.2,593.0 340.6,597.0 341.1,602.8 341.5,607.9 342.0,609.9 342.4,608.1 342.9,603.3 343.4,597.8 343.8,594.0 344.3,593.2 344.7,595.2 345.2,598.5 345.6,601.4 346.1,603.0 346.5,603.3 347.0,602.6 347.4,601.4 347.9,599.5 348.3,596.8 348.8,593.4 349.2,590.0 349.7,587.8 350.1,587.7 350.6,589.3 351.0,591.2 351.5,591.3 351.9,588.0 352.4,581.1 352.9,571.8 353.3,562.3 353.8,554.5 354.2,549.2 354.7,545.5 355.1,542.0 355.6,536.6 356.0,528.2 356.5,516.6 356.9,502.6 357.4,487.9 357.8,474.0 358.3,462.1 358.7,452.3 359.2,444.3 359.6,436.9 360.1,429.4 360.5,421.4 361.0,413.4 361.4,406.1 361.9,400.6 362.4,397.5 362.8,397.2 363.3,399.6 363.7,404.9 364.2,412.7 364.6,422.2 365.1,432.1 365.5,440.9 366.0,447.5 366.4,451.9 366.9,455.1 367.3,458.7 367.8,463.5 368.2,469.2 368.7,473.5 369.1,474.1 369.6,469.5 370.0,460.2 370.5,448.5 371.0,437.6 371.4,429.7 371.9,425.6 372.3,424.1 372.8,423.9 373.2,423.8 373.7,423.8 374.1,424.7 374.6,427.4 375.0,432.1 375.5,438.4 375.9,445.5 376.4,452.3 376.8,458.1 377.3,462.1 377.7,463.7 378.2,462.2 378.6,457.4 379.1,449.8 379.6,441.1 380.0,433.3 380.5,428.0 380.9,426.0 381.4,427.0 381.8,429.6 382.3,432.5 382.7,435.0 383.2,437.3 383.6,440.2 384.1,444.4 384.5,449.9 385.0,455.5 385.4,459.4 385.9,459.8 386.3,455.9 386.8,448.3 387.2,439.2 387.7,431.1 388.1,426.3 388.6,425.8 389.1,428.9 389.5,433.9 390.0,439.0 390.4,443.1 390.9,445.9 391.3,448.0 391.8,449.9 392.2,451.6 392.7,452.3 393.1,451.3 393.6,448.0 394.0,443.0 394.5,437.3 394.9,432.5 395.4,429.6 395.8,429.3 396.3,431.7 396.7,436.2 397.2,442.2 397.7,448.5 398.1,453.5 398.6,455.8 399.0,454.3 399.5,449.4 399.9,442.7 400.4,436.5 400.8,432.8 401.3,432.4 401.7,434.5 402.2,437.4 402.6,439.6 403.1,441.0 403.5,442.1 404.0,444.2 404.4,447.5 404.9,450.8 405.3,452.3 405.8,450.4 406.2,445.0 406.7,437.8 407.2,431.6 407.6,428.9 408.1,430.6 408.5,435.9 409.0,442.6 409.4,448.3 409.9,451.5 410.3,451.7 410.8,449.5 411.2,445.8 411.7,441.8 412.1,438.3 412.6,435.9 413.0,435.0 413.5,435.7 413.9,437.7 414.4,440.6 414.8,443.5 415.3,445.9 415.8,447.6 416.2,448.2 416.7,447.6 417.1,445.8 417.6,442.7 418.0,438.9 418.5,435.5 418.9,433.6 419.4,434.3 419.8,437.8 420.3,443.3 420.7,448.8 421.2,452.4 421.6,452.6 422.1,449.2 422.5,443.7 423.0,438.2 423.4,435.0 423.9,435.4 424.3,439.2 424.8,444.7 425.3,450.0 425.7,453.4 426.2,454.6 426.6,454.5 427.1,454.2 427.5,454.8 428.0,456.3 428.4,458.2 428.9,460.2 429.3,462.5 429.8,466.2 430.2,472.3 430.7,481.2 431.1,491.9 431.6,502.2 432.0,510.4 432.5,515.7 432.9,519.2 433.4,523.2 433.9,529.9 434.3,540.5 434.8,554.3 435.2,569.7 435.7,584.6 436.1,597.5 436.6,607.5 437.0,614.8 437.5,620.0 437.9,624.0 438.4,627.5 438.8,631.4 439.3,636.0 439.7,640.8 440.2,644.5 440.6,645.6 441.1,643.1 441.5,636.9 442.0,628.1 442.4,618.3 442.9,608.9 443.4,600.4 443.8,593.0 444.3,586.3 444.7,580.7 445.2,576.8 445.6,575.2 446.1,575.7 446.5,577.4 447.0,579.0 447.4,580.0 447.9,581.0 448.3,583.6 448.8,589.5 449.2,598.9 449.7,610.5 450.1,621.4 450.6,628.5 451.0,630.1 451.5,626.6 451.9,620.0 452.4,613.0 452.9,607.4 453.3,603.8 453.8,601.4 454.2,598.8 454.7,595.0 455.1,590.2 455.6,585.2 456.0,581.6 456.5,580.4 456.9,582.2 457.4,586.7 457.8,593.0 458.3,600.4 458.7,607.7 459.2,614.0 459.6,618.6 460.1,620.7 460.5,619.7 461.0,615.8 461.5,609.6 461.9,602.5 462.4,596.2 462.8,591.8 463.3,589.7 463.7,589.5 464.2,590.2 464.6,590.9 465.1,591.6 465.5,592.6 466.0,594.7 466.4,598.6 466.9,604.2 467.3,610.6 467.8,616.1 468.2,619.0 468.7,617.9 469.1,612.7 469.6,604.5" fill="none" stroke="#80f040" stroke-width="0.95" stroke-linejoin="round"/><polyline points="8.5,600.8 9.0,600.8 9.4,600.8 9.9,600.8 10.3,600.8 10.8,600.8 11.2,600.8 11.7,600.8 12.1,600.8 12.6,600.8 13.0,600.8 13.5,600.8 13.9,600.8 14.4,600.8 14.8,600.8 15.3,600.8 15.7,600.8 16.2,600.8 16.6,600.8 17.1,600.8 17.6,600.8 18.0,600.8 18.5,600.8 18.9,600.8 19.4,600.8 19.8,600.8 20.3,600.8 20.7,600.8 21.2,600.8 21.6,600.8 22.1,600.8 22.5,600.8 23.0,600.8 23.4,600.8 23.9,600.8 24.3,600.8 24.8,600.8 25.2,600.8 25.7,600.8 26.1,600.8 26.6,600.8 27.1,600.8 27.5,600.8 28.0,600.8 28.4,600.8 28.9,600.8 29.3,600.8 29.8,600.8 30.2,600.8 30.7,600.8 31.1,600.8 31.6,600.8 32.0,600.8 32.5,600.8 32.9,600.8 33.4,600.8 33.8,600.8 34.3,600.8 34.7,600.8 35.2,600.8 35.7,600.8 36.1,600.8 36.6,600.7 37.0,600.7 37.5,600.6 37.9,600.4 38.4,600.0 38.8,599.5 39.3,598.6 39.7,597.2 40.2,595.1 40.6,592.0 41.1,587.7 41.5,582.0 42.0,574.6 42.4,565.5 42.9,555.0 43.3,543.3 43.8,531.3 44.2,520.0 44.7,510.5 45.2,503.9 45.6,501.1 46.1,502.3 46.5,507.2 47.0,514.6 47.4,522.7 47.9,529.5 48.3,533.3 48.8,532.8 49.2,528.2 49.7,520.4 50.1,511.3 50.6,503.0 51.0,496.9 51.5,493.4 51.9,491.6 52.4,489.4 52.8,484.6 53.3,475.6 53.8,462.4 54.2,446.8 54.7,431.7 55.1,420.5 55.6,415.5 56.0,417.3 56.5,424.4 56.9,433.9 57.4,442.8 57.8,448.9 58.3,451.5 58.7,451.3 59.2,449.8 59.6,447.9 60.1,446.0 60.5,443.7 61.0,440.5 61.4,436.7 61.9,433.5 62.3,432.6 62.8,435.3 63.3,441.2 63.7,448.1 64.2,453.0 64.6,453.2 65.1,448.3 65.5,440.3 66.0,433.0 66.4,430.0 66.9,432.8 67.3,440.2 67.8,448.2 68.2,452.8 68.7,451.7 69.1,445.7 69.6,438.2 70.0,433.2 70.5,433.1 70.9,437.8 71.4,444.2 71.8,448.8 72.3,449.3 72.8,445.9 73.2,440.7 73.7,437.0 74.1,436.4 74.6,438.9 75.0,442.7 75.5,445.5 75.9,446.0 76.4,444.3 76.8,441.8 77.3,439.9 77.7,439.5 78.2,440.3 78.6,441.6 79.1,442.8 79.5,443.5 80.0,443.5 80.4,443.0 80.9,442.2 81.4,441.2 81.8,440.4 82.3,440.3 82.7,441.1 83.2,442.7 83.6,444.1 84.1,444.4 84.5,443.2 85.0,441.0 85.4,439.2 85.9,439.2 86.3,441.1 86.8,443.8 87.2,445.5 87.7,444.9 88.1,442.2 88.6,439.2 89.0,438.1 89.5,439.7 90.0,443.0 90.4,445.7 90.9,445.9 91.3,443.3 91.8,439.7 92.2,437.7 92.7,438.7 93.1,442.2 93.6,445.6 94.0,446.4 94.5,444.0 94.9,440.1 95.4,437.6 95.8,438.3 96.3,441.7 96.7,445.3 97.2,446.5 97.6,444.3 98.1,440.4 98.5,437.8 99.0,438.2 99.5,441.5 99.9,445.1 100.4,446.3 100.8,444.3 101.3,440.6 101.7,438.0 102.2,438.4 102.6,441.6 103.1,445.0 103.5,446.1 104.0,444.0 104.4,440.5 104.9,438.2 105.3,438.8 105.8,441.9 106.2,444.9 106.7,445.7 107.1,443.6 107.6,440.4 108.0,438.5 108.5,439.3 109.0,442.2 109.4,444.9 109.9,445.3 110.3,443.1 110.8,440.2 111.2,438.9 111.7,440.1 112.1,442.9 112.6,445.1 113.0,445.2 113.5,443.3 113.9,441.1 114.4,440.7 114.8,442.7 115.3,446.0 115.7,448.8 116.2,449.8 116.6,449.6 117.1,449.9 117.6,452.6 118.0,457.7 118.5,464.3 118.9,470.5 119.4,475.6 119.8,480.4 120.3,486.3 120.7,494.4 121.2,504.3 121.6,514.3 122.1,522.9 122.5,529.3 123.0,533.9 123.4,537.8 123.9,541.5 124.3,544.4 124.8,545.2 125.2,543.1 125.7,538.6 126.2,533.0 126.6,528.2 127.1,525.5 127.5,524.9 128.0,526.2 128.4,529.1 128.9,534.2 129.3,542.0 129.8,552.9 130.2,566.1 130.7,580.0 131.1,592.6 131.6,602.6 132.0,609.7 132.5,614.2 132.9,616.8 133.4,617.7 133.8,617.1 134.3,615.0 134.7,612.2 135.2,609.5 135.7,607.5 136.1,606.5 136.6,605.8 137.0,604.4 137.5,601.6 137.9,597.5 138.4,592.9 138.8,589.0 139.3,586.8 139.7,587.1 140.2,589.9 140.6,594.8 141.1,601.3 141.5,608.0 142.0,613.8 142.4,617.0 142.9,616.7 143.3,612.4 143.8,605.1 144.2,596.6 144.7,589.1 145.2,584.8 145.6,584.9 146.1,589.3 146.5,596.6 147.0,604.7 147.4,611.3 147.9,614.6 148.3,613.9 148.8,609.6 149.2,603.1 149.7,596.3 150.1,591.1 150.6,589.1 151.0,590.7 151.5,595.4 151.9,601.5 152.4,607.0 152.8,610.0 153.3,609.6 153.8,606.3 154.2,601.5 154.7,597.2 155.1,594.7 155.6,594.8 156.0,596.7 156.5,599.5 156.9,602.1 157.4,603.7 157.8,604.3 158.3,603.9 158.7,602.8 159.2,601.2 159.6,599.6 160.1,598.6 160.5,598.4 161.0,599.1 161.4,600.2 161.9,601.1 162.3,601.5 162.8,601.5 163.3,601.6 163.7,602.0 164.2,602.4 164.6,602.3 165.1,601.3 165.5,599.3 166.0,597.6 166.4,597.1 166.9,598.6 167.3,601.5 167.8,604.3 168.2,605.6 168.7,604.5 169.1,601.6 169.6,598.4 170.0,596.4 170.5,596.3 170.9,598.1 171.4,601.0 171.9,603.8 172.3,605.4 172.8,605.3 173.2,603.2 173.7,599.8 174.1,596.5 174.6,594.9 175.0,596.1 175.5,599.9 175.9,604.6 176.4,607.6 176.8,607.1 177.3,603.2 177.7,597.8 178.2,593.9 178.6,593.8 179.1,597.5 179.5,602.9 180.0,606.9 180.5,607.5 180.9,604.6 181.4,600.0 181.8,596.1 182.3,594.7 182.7,596.4 183.2,600.0 183.6,603.9 184.1,606.1 184.5,605.9 185.0,603.2 185.4,599.2 185.9,595.8 186.3,594.8 186.8,597.0 187.2,601.3 187.7,605.5 188.1,607.0 188.6,604.8 189.0,599.8 189.5,594.8 190.0,592.8 190.4,594.8 190.9,599.3 191.3,603.2 191.8,603.7 192.2,600.1 192.7,594.1 193.1,588.6 193.6,585.8 194.0,585.8 194.5,587.0 194.9,586.7 195.4,583.5 195.8,577.2 196.3,569.2 196.7,561.2 197.2,554.3 197.6,548.8 198.1,544.2 198.6,539.4 199.0,533.6 199.5,526.1 199.9,517.4 200.4,508.6 200.8,501.5 201.3,497.3 201.7,496.3 202.2,497.3 202.6,498.5 203.1,498.3 203.5,496.8 204.0,495.4 204.4,496.0 204.9,499.2 205.3,503.6 205.8,506.8 206.2,506.1 206.7,501.0 207.1,492.7 207.6,483.3 208.1,474.3 208.5,465.8 209.0,456.9 209.4,446.6 209.9,435.2 210.3,424.3 210.8,415.8 211.2,411.3 211.7,410.7 212.1,413.3 212.6,417.8 213.0,423.6 213.5,430.1 213.9,437.0 214.4,443.4 214.8,448.7 215.3,452.2 215.7,454.0 216.2,454.4 216.7,453.8 217.1,452.1 217.6,449.3 218.0,445.9 218.5,442.6 218.9,440.3 219.4,439.6 219.8,440.1 220.3,440.6 220.7,440.2 221.2,438.7 221.6,436.8 222.1,435.5 222.5,435.7 223.0,437.2 223.4,439.3 223.9,441.5 224.3,443.7 224.8,446.1 225.2,448.7 225.7,450.9 226.2,451.5 226.6,449.7 227.1,445.7 227.5,440.6 228.0,435.9 228.4,432.7 228.9,431.4 229.3,431.8 229.8,434.0 230.2,438.1 230.7,443.8 231.1,450.0 231.6,454.7 232.0,456.0 232.5,452.8 232.9,446.4 233.4,439.0 233.8,433.3 234.3,430.7 234.8,431.2 235.2,433.6 235.7,437.2 236.1,441.4 236.6,446.3 237.0,451.0 237.5,454.1 237.9,453.8 238.4,449.3 238.8,441.8 239.3,434.1 239.7,429.3 240.2,429.2 240.6,433.6 241.1,440.3 241.5,446.5 242.0,450.4 242.4,451.4 242.9,449.8 243.3,446.6 243.8,442.6 244.3,438.5 244.7,435.4 245.2,434.0 245.6,434.9 246.1,438.1 246.5,442.6 247.0,446.9 247.4,449.7 247.9,449.9 248.3,447.4 248.8,442.9 249.2,438.1 249.7,434.6 250.1,434.1 250.6,436.7 251.0,441.5 251.5,446.1 251.9,448.6 252.4,447.8 252.8,444.7 253.3,441.1 253.8,439.0 254.2,438.9 254.7,440.1 255.1,441.2 255.6,441.4 256.0,441.1 256.5,441.5 256.9,443.1 257.4,445.1 257.8,446.0 258.3,444.6 258.7,441.2 259.2,437.9 259.6,436.9 260.1,439.1 260.5,442.9 261.0,445.9 261.4,446.1 261.9,443.7 262.4,440.5 262.8,439.1 263.3,440.3 263.7,443.0 264.2,444.9 264.6,444.6 265.1,442.2 265.5,439.9 266.0,439.7 266.4,442.0 266.9,445.5 267.3,448.2 267.8,448.4 268.2,446.7 268.7,444.6 269.1,444.2 269.6,446.1 270.0,449.8 270.5,453.8 270.9,457.2 271.4,459.6 271.9,461.8 272.3,464.5 272.8,468.2 273.2,472.5 273.7,477.0 274.1,481.8 274.6,487.1 275.0,493.5 275.5,501.2 275.9,509.6 276.4,517.6 276.8,524.1 277.3,528.4 277.7,531.1 278.2,533.8 278.6,538.0 279.1,544.0 279.5,551.0 280.0,556.7 280.5,558.9 280.9,556.9 281.4,551.9 281.8,547.0 282.3,544.7 282.7,546.4 283.2,550.7 283.6,555.2 284.1,557.8 284.5,558.4 285.0,558.7 285.4,561.3 285.9,567.6 286.3,577.3 286.8,588.7 287.2,599.9 287.7,610.1 288.1,618.9 288.6,626.3 289.1,631.6 289.5,633.8 290.0,632.5 290.4,628.5 290.9,623.8 291.3,619.9 291.8,616.7 292.2,612.5 292.7,605.3 293.1,594.7 293.6,583.2 294.0,574.8 294.5,572.9 294.9,577.9 295.4,586.8 295.8,595.2 296.3,599.9 296.7,600.5 297.2,599.7 297.6,600.6 298.1,604.5 298.6,610.1 299.0,614.6 299.5,615.5 299.9,612.3 300.4,606.5 300.8,600.6 301.3,596.5 301.7,594.9 302.2,595.2 302.6,596.6 303.1,598.4 303.5,600.0 304.0,600.8 304.4,600.4 304.9,598.7 305.3,596.7 305.8,595.7 306.2,596.9 306.7,600.4 307.2,604.9 307.6,608.1 308.1,608.4 308.5,605.9 309.0,602.3 309.4,599.7 309.9,599.4 310.3,601.1 310.8,602.7 311.2,602.2 311.7,598.8 312.1,593.9 312.6,590.2 313.0,590.3 313.5,595.0 313.9,602.7 314.4,610.2 314.8,614.2 315.3,613.4 315.7,608.4 316.2,602.0 316.7,596.8 317.1,594.3 317.6,594.2 318.0,595.0 318.5,595.5 318.9,595.7 319.4,596.4 319.8,599.0 320.3,603.4 320.7,608.5 321.2,611.9 321.6,612.0 322.1,608.4 322.5,602.2 323.0,595.5 323.4,590.6 323.9,588.6 324.3,589.9 324.8,594.2 325.2,600.4 325.7,606.9 326.2,611.6 326.6,612.9 327.1,610.2 327.5,604.5 328.0,598.3 328.4,593.9 328.9,592.5 329.3,593.7 329.8,596.0 330.2,598.0 330.7,599.7 331.1,602.0 331.6,605.3 332.0,609.1 332.5,611.0 332.9,609.0 333.4,602.8 333.8,594.7 334.3,588.6 334.8,587.8 335.2,592.5 335.7,600.5 336.1,607.6 336.6,611.0 337.0,609.8 337.5,605.8 337.9,601.4 338.4,598.2 338.8,596.4 339.3,595.5 339.7,595.3 340.2,596.0 340.6,598.1 341.1,601.4 341.5,604.9 342.0,606.7 342.4,605.9 342.9,602.6 343.4,598.2 343.8,594.4 344.3,592.1 344.7,591.8 345.2,592.8 345.6,594.5 346.1,596.2 346.5,597.3 347.0,596.9 347.4,594.2 347.9,589.1 348.3,582.4 348.8,576.1 349.2,571.6 349.7,569.7 350.1,569.4 350.6,568.7 351.0,565.8 351.5,560.0 351.9,552.1 352.4,543.8 352.9,536.2 353.3,529.7 353.8,523.9 354.2,518.4 354.7,513.0 355.1,507.9 355.6,503.5 356.0,499.9 356.5,496.5 356.9,493.0 357.4,489.1 357.8,485.4 358.3,482.8 358.7,481.7 359.2,482.5 359.6,484.2 360.1,485.9 360.5,486.5 361.0,485.8 361.4,483.7 361.9,480.8 362.4,477.4 362.8,473.6 363.3,469.1 363.7,463.6 364.2,456.9 364.6,449.3 365.1,441.2 365.5,433.3 366.0,426.1 366.4,419.8 366.9,414.6 367.3,410.8 367.8,408.9 368.2,409.2 368.7,411.9 369.1,417.0 369.6,423.7 370.0,431.3 370.5,439.2 371.0,447.1 371.4,454.3 371.9,460.4 372.3,464.4 372.8,465.8 373.2,464.5 373.7,461.3 374.1,457.0 374.6,452.7 375.0,448.3 375.5,443.5 375.9,437.7 376.4,431.5 376.8,426.0 377.3,422.9 377.7,423.3 378.2,427.1 378.6,433.0 379.1,439.1 379.6,443.9 380.0,447.1 380.5,448.9 380.9,449.7 381.4,450.0 381.8,449.6 382.3,448.7 382.7,447.2 383.2,445.6 383.6,443.9 384.1,442.1 384.5,440.0 385.0,437.6 385.4,435.6 385.9,434.8 386.3,435.7 386.8,438.4 387.2,441.8 387.7,444.5 388.1,445.7 388.6,445.1 389.1,443.4 389.5,441.5 390.0,440.4 390.4,440.7 390.9,442.2 391.3,444.6 391.8,446.8 392.2,447.8 392.7,446.6 393.1,443.2 393.6,438.7 394.0,435.0 394.5,433.9 394.9,435.9 395.4,439.9 395.8,443.7 396.3,445.3 396.7,444.4 397.2,442.4 397.7,441.3 398.1,442.5 398.6,445.6 399.0,448.6 399.5,449.3 399.9,446.6 400.4,441.4 400.8,435.8 401.3,432.2 401.7,431.6 402.2,434.0 402.6,438.4 403.1,443.5 403.5,448.1 404.0,451.2 404.4,452.1 404.9,450.5 405.3,446.5 405.8,441.2 406.2,436.5 406.7,433.8 407.2,433.8 407.6,436.0 408.1,439.1 408.5,441.7 409.0,443.2 409.4,444.1 409.9,445.2 410.3,446.9 410.8,448.8 411.2,449.5 411.7,447.7 412.1,442.9 412.6,436.4 413.0,430.6 413.5,428.3 413.9,431.1 414.4,438.3 414.8,447.5 415.3,454.7 415.8,457.0 416.2,453.6 416.7,446.3 417.1,438.7 417.6,433.8 418.0,433.1 418.5,435.8 418.9,439.8 419.4,443.0 419.8,444.9 420.3,446.1 420.7,447.7 421.2,450.1 421.6,452.4 422.1,453.2 422.5,451.6 423.0,448.2 423.4,444.8 423.9,443.5 424.3,445.6 424.8,450.9 425.3,458.3 425.7,466.2 426.2,473.1 426.6,478.0 427.1,480.6 427.5,480.8 428.0,479.7 428.4,478.9 428.9,480.7 429.3,486.6 429.8,496.8 430.2,509.5 430.7,521.7 431.1,530.5 431.6,534.8 432.0,535.4 432.5,535.0 432.9,536.3 433.4,540.3 433.9,546.5 434.3,553.0 434.8,558.0 435.2,560.8 435.7,562.3 436.1,563.6 436.6,565.5 437.0,567.7 437.5,568.9 437.9,568.0 438.4,564.9 438.8,561.3 439.3,559.6 439.7,562.2 440.2,569.4 440.6,579.4 441.1,589.2 441.5,595.9 442.0,598.5 442.4,598.6 442.9,599.2 443.4,603.1 443.8,610.9 444.3,621.1 444.7,630.4 445.2,636.1 445.6,637.2 446.1,634.4 446.5,629.5 447.0,623.9 447.4,618.0 447.9,611.5 448.3,604.3 448.8,596.9 449.2,590.3 449.7,585.3 450.1,581.9 450.6,579.7 451.0,578.2 451.5,577.6 451.9,578.6 452.4,581.9 452.9,587.6 453.3,594.8 453.8,602.0 454.2,608.2 454.7,613.3 455.1,617.4 455.6,620.6 456.0,622.1 456.5,620.7 456.9,615.8 457.4,608.2 457.8,600.2 458.3,594.3 458.7,591.8 459.2,592.1 459.6,593.0 460.1,592.7 460.5,590.6 461.0,588.4 461.5,588.5 461.9,592.4 462.4,599.4 462.8,606.9 463.3,611.9 463.7,612.8 464.2,610.3 464.6,606.6 465.1,604.0 465.5,603.2 466.0,603.5 466.4,603.0 466.9,600.7 467.3,597.0 467.8,593.5 468.2,592.3 468.7,594.0 469.1,597.7 469.6,601.5" fill="none" stroke="#80e8f8" stroke-width="0.95" stroke-linejoin="round"/><polyline points="8.5,600.8 9.0,600.8 9.4,600.8 9.9,600.8 10.3,600.8 10.8,600.8 11.2,600.8 11.7,600.8 12.1,600.8 12.6,600.8 13.0,600.8 13.5,600.8 13.9,600.8 14.4,600.8 14.8,600.8 15.3,600.8 15.7,600.8 16.2,600.8 16.6,600.8 17.1,600.8 17.6,600.8 18.0,600.8 18.5,600.8 18.9,600.8 19.4,600.8 19.8,600.8 20.3,600.8 20.7,600.8 21.2,600.8 21.6,600.8 22.1,600.8 22.5,600.8 23.0,600.8 23.4,600.8 23.9,600.8 24.3,600.8 24.8,600.7 25.2,600.7 25.7,600.5 26.1,600.2 26.6,599.5 27.1,598.5 27.5,596.6 28.0,593.7 28.4,589.3 28.9,583.0 29.3,574.5 29.8,563.8 30.2,551.2 30.7,537.5 31.1,524.1 31.6,512.6 32.0,504.6 32.5,501.6 32.9,503.7 33.4,510.2 33.8,519.2 34.3,527.7 34.7,533.3 35.2,534.2 35.7,530.4 36.1,523.5 36.6,516.4 37.0,511.9 37.5,511.9 37.9,516.1 38.4,522.4 38.8,527.8 39.3,529.7 39.7,527.3 40.2,522.1 40.6,516.9 41.1,514.4 41.5,515.8 42.0,520.3 42.4,525.1 42.9,527.6 43.3,526.3 43.8,522.2 44.2,517.9 44.7,515.9 45.2,517.3 45.6,521.3 46.1,525.1 46.5,526.4 47.0,524.4 47.4,520.6 47.9,517.5 48.3,517.0 48.8,519.5 49.2,523.1 49.7,525.4 50.1,524.9 50.6,522.0 51.0,518.8 51.5,517.5 51.9,519.0 52.4,522.1 52.8,524.6 53.3,524.7 53.8,522.5 54.2,519.5 54.7,518.0 55.1,519.0 55.6,521.7 56.0,524.1 56.5,524.4 56.9,522.4 57.4,519.8 57.8,518.4 58.3,519.2 58.7,521.6 59.2,523.6 59.6,523.6 60.1,521.6 60.5,518.8 61.0,517.2 61.4,517.4 61.9,518.4 62.3,518.5 62.8,516.1 63.3,511.2 63.7,505.0 64.2,499.2 64.6,494.0 65.1,488.6 65.5,481.2 66.0,471.1 66.4,459.1 66.9,447.2 67.3,437.4 67.8,430.6 68.2,426.5 68.7,423.9 69.1,422.7 69.6,423.5 70.0,427.3 70.5,434.4 70.9,443.3 71.4,451.4 71.8,456.3 72.3,456.8 72.8,453.5 73.2,448.4 73.7,443.2 74.1,438.6 74.6,435.0 75.0,432.5 75.5,431.9 75.9,434.1 76.4,439.1 76.8,445.7 77.3,451.1 77.7,453.0 78.2,450.4 78.6,444.6 79.1,438.5 79.5,434.5 80.0,434.0 80.4,436.3 80.9,440.1 81.4,443.8 81.8,446.5 82.3,447.7 82.7,447.3 83.2,445.2 83.6,441.5 84.1,437.6 84.5,435.2 85.0,435.9 85.4,439.7 85.9,444.9 86.3,448.7 86.8,449.0 87.2,445.6 87.7,440.5 88.1,436.4 88.6,435.7 89.0,438.2 89.5,442.3 90.0,445.8 90.4,446.9 90.9,445.6 91.3,442.9 91.8,440.2 92.2,438.6 92.7,438.5 93.1,439.7 93.6,442.0 94.0,444.4 94.5,445.9 94.9,445.4 95.4,443.1 95.8,439.8 96.3,437.6 96.7,437.8 97.2,440.7 97.6,444.5 98.1,447.0 98.5,446.3 99.0,443.0 99.5,439.1 99.9,437.3 100.4,438.7 100.8,442.5 101.3,446.3 101.7,447.9 102.2,446.7 102.6,444.1 103.1,442.5 103.5,443.6 104.0,447.3 104.4,452.4 104.9,457.3 105.3,461.1 105.8,464.1 106.2,467.4 106.7,472.2 107.1,479.1 107.6,488.0 108.0,498.0 108.5,508.0 109.0,516.9 109.4,524.1 109.9,529.6 110.3,533.9 110.8,537.5 111.2,540.8 111.7,542.9 112.1,542.5 112.6,538.7 113.0,531.5 113.5,522.6 113.9,514.8 114.4,509.9 114.8,508.5 115.3,509.5 115.7,511.1 116.2,512.5 116.6,514.1 117.1,517.4 117.6,522.8 118.0,529.4 118.5,534.7 118.9,536.0 119.4,532.5 119.8,525.6 120.3,518.4 120.7,513.6 121.2,512.2 121.6,513.4 122.1,515.7 122.5,517.8 123.0,519.9 123.4,522.5 123.9,525.8 124.3,529.0 124.8,530.2 125.2,528.4 125.7,523.7 126.2,517.8 126.6,513.2 127.1,511.8 127.5,514.2 128.0,519.0 128.4,524.2 128.9,527.7 129.3,528.6 129.8,527.1 130.2,524.0 130.7,520.6 131.1,518.0 131.6,516.6 132.0,516.6 132.5,517.9 132.9,520.1 133.4,522.9 133.8,525.5 134.3,527.0 134.7,526.8 135.2,524.6 135.7,520.9 136.1,517.5 136.6,516.0 137.0,517.7 137.5,522.5 137.9,528.3 138.4,532.9 138.8,534.3 139.3,532.9 139.7,530.5 140.2,529.9 140.6,532.7 141.1,539.1 141.5,547.4 142.0,555.7 142.4,562.9 142.9,569.2 143.3,575.3 143.8,581.7 144.2,588.4 144.7,594.9 145.2,601.1 145.6,607.4 146.1,614.1 146.5,620.7 147.0,625.7 147.4,627.0 147.9,623.5 148.3,616.2 148.8,607.9 149.2,601.3 149.7,598.0 150.1,597.1 150.6,596.3 151.0,593.7 151.5,589.5 151.9,585.5 152.4,584.5 152.8,588.0 153.3,595.3 153.8,603.7 154.2,610.6 154.7,614.2 155.1,614.2 155.6,611.7 156.0,607.9 156.5,603.6 156.9,599.4 157.4,595.7 157.8,593.2 158.3,592.4 158.7,593.4 159.2,595.5 159.6,597.9 160.1,600.2 160.5,602.5 161.0,605.2 161.4,607.9 161.9,609.8 162.3,609.4 162.8,605.7 163.3,599.6 163.7,593.2 164.2,589.3 164.6,589.8 165.1,594.5 165.5,601.3 166.0,607.1 166.4,609.7 166.9,608.6 167.3,605.1 167.8,601.3 168.2,598.7 168.7,597.7 169.1,597.7 169.6,597.7 170.0,597.6 170.5,597.8 170.9,599.0 171.4,601.5 171.9,604.7 172.3,607.1 172.8,607.2 173.2,604.4 173.7,599.7 174.1,595.2 174.6,592.8 175.0,593.8 175.5,597.6 175.9,602.4 176.4,606.2 176.8,607.3 177.3,605.3 177.7,601.3 178.2,596.6 178.6,593.0 179.1,591.4 179.5,591.9 180.0,593.9 180.5,595.9 180.9,596.3 181.4,594.2 181.8,589.5 182.3,583.2 182.7,576.8 183.2,571.2 183.6,566.6 184.1,562.4 184.5,557.5 185.0,551.7 185.4,545.3 185.9,538.7 186.3,532.2 186.8,525.4 187.2,517.8 187.7,509.6 188.1,502.1 188.6,497.4 189.0,497.0 189.5,500.7 190.0,506.2 190.4,510.6 190.9,512.3 191.3,511.9 191.8,511.9 192.2,515.2 192.7,522.4 193.1,531.6 193.6,539.3 194.0,542.4 194.5,540.2 194.9,534.1 195.4,527.2 195.8,521.6 196.3,518.0 196.7,516.0 197.2,514.4 197.6,513.0 198.1,512.0 198.6,512.1 199.0,513.5 199.5,516.1 199.9,519.4 200.4,523.0 200.8,526.8 201.3,530.2 201.7,532.5 202.2,532.6 202.6,529.9 203.1,524.8 203.5,518.7 204.0,513.5 204.4,510.8 204.9,511.0 205.3,513.7 205.8,517.7 206.2,522.0 206.7,525.6 207.1,527.8 207.6,528.3 208.1,527.1 208.5,524.9 209.0,522.6 209.4,521.0 209.9,519.9 210.3,518.8 210.8,517.0 211.2,514.8 211.7,513.4 212.1,514.6 212.6,518.8 213.0,524.9 213.5,529.6 213.9,530.0 214.4,525.2 214.8,516.7 215.3,508.3 215.7,503.3 216.2,502.8 216.7,505.2 217.1,507.5 217.6,507.0 218.0,503.5 218.5,498.0 218.9,492.3 219.4,487.1 219.8,481.7 220.3,474.9 220.7,466.2 221.2,456.5 221.6,447.6 222.1,441.3 222.5,437.7 223.0,435.7 223.4,433.9 223.9,431.2 224.3,427.6 224.8,423.7 225.2,420.6 225.7,419.1 226.2,419.5 226.6,422.3 227.1,427.7 227.5,435.4 228.0,444.4 228.4,452.7 228.9,458.1 229.3,459.3 229.8,456.9 230.2,452.7 230.7,449.0 231.1,447.1 231.6,446.8 232.0,446.8 232.5,445.3 232.9,441.6 233.4,436.5 233.8,431.6 234.3,428.7 234.8,428.6 235.2,431.2 235.7,435.3 236.1,439.8 236.6,444.2 237.0,448.1 237.5,451.6 237.9,454.0 238.4,454.6 238.8,452.4 239.3,447.4 239.7,440.7 240.2,434.3 240.6,430.5 241.1,430.5 241.5,434.1 242.0,439.2 242.4,443.4 242.9,445.0 243.3,444.3 243.8,442.8 244.3,442.5 244.7,444.5 245.2,447.7 245.6,450.1 246.1,449.4 246.5,445.1 247.0,438.6 247.4,432.8 247.9,430.3 248.3,432.0 248.8,437.0 249.2,443.1 249.7,447.9 250.1,450.4 250.6,450.4 251.0,448.7 251.5,446.0 251.9,442.8 252.4,439.4 252.8,436.6 253.3,435.3 253.8,436.3 254.2,439.8 254.7,444.7 255.1,449.2 255.6,451.9 256.0,452.2 256.5,450.9 256.9,449.5 257.4,449.2 257.8,450.4 258.3,452.7 258.7,455.4 259.2,458.2 259.6,461.6 260.1,466.0 260.5,472.0 261.0,479.1 261.4,486.7 261.9,493.7 262.4,499.4 262.8,503.8 263.3,507.1 263.7,510.0 264.2,513.5 264.6,518.6 265.1,525.8 265.5,534.7 266.0,543.5 266.4,549.9 266.9,551.5 267.3,547.8 267.8,540.3 268.2,532.3 268.7,526.7 269.1,525.0 269.6,525.8 270.0,526.4 270.5,524.4 270.9,519.3 271.4,512.6 271.9,507.1 272.3,504.5 272.8,505.0 273.2,507.3 273.7,510.2 274.1,513.2 274.6,516.9 275.0,522.0 275.5,528.2 275.9,533.8 276.4,536.8 276.8,536.1 277.3,532.4 277.7,527.5 278.2,523.4 278.6,520.8 279.1,519.3 279.5,517.6 280.0,515.5 280.5,513.4 280.9,512.6 281.4,513.7 281.8,516.2 282.3,518.8 282.7,520.7 283.2,521.9 283.6,523.6 284.1,526.6 284.5,530.7 285.0,533.8 285.4,533.8 285.9,529.2 286.3,521.2 286.8,512.8 287.2,507.5 287.7,507.6 288.1,512.6 288.6,520.0 289.1,526.6 289.5,530.2 290.0,530.5 290.4,528.8 290.9,527.3 291.3,527.5 291.8,529.3 292.2,531.8 292.7,533.4 293.1,533.4 293.6,532.2 294.0,531.3 294.5,532.3 294.9,536.3 295.4,543.4 295.8,552.1 296.3,561.0 296.7,568.7 297.2,574.7 297.6,579.1 298.1,582.5 298.6,585.6 299.0,588.4 299.5,591.5 299.9,595.4 300.4,600.6 300.8,607.4 301.3,615.3 301.7,622.8 302.2,628.2 302.6,630.1 303.1,628.2 303.5,623.3 304.0,616.9 304.4,610.5 304.9,605.2 305.3,601.3 305.8,598.5 306.2,596.4 306.7,594.5 307.2,592.5 307.6,590.5 308.1,588.7 308.5,587.8 309.0,588.3 309.4,590.3 309.9,593.2 310.3,596.3 310.8,598.9 311.2,601.1 311.7,603.6 312.1,607.1 312.6,611.6 313.0,615.9 313.5,618.3 313.9,616.9 314.4,611.3 314.8,602.7 315.3,593.6 315.7,586.9 316.2,584.4 316.7,586.4 317.1,591.6 317.6,597.5 318.0,602.1 318.5,604.1 318.9,603.7 319.4,602.2 319.8,601.5 320.3,602.6 320.7,605.4 321.2,608.5 321.6,609.8 322.1,608.0 322.5,603.5 323.0,598.3 323.4,594.4 323.9,593.0 324.3,593.6 324.8,594.9 325.2,595.7 325.7,596.2 326.2,597.6 326.6,601.2 327.1,606.4 327.5,611.3 328.0,613.2 328.4,610.5 328.9,604.2 329.3,596.9 329.8,591.6 330.2,589.7 330.7,590.6 331.1,592.6 331.6,594.5 332.0,596.2 332.5,598.2 332.9,600.7 333.4,602.5 333.8,601.6 334.3,597.1 334.8,590.0 335.2,582.7 335.7,578.0 336.1,576.5 336.6,576.8 337.0,576.0 337.5,572.1 337.9,565.1 338.4,557.5 338.8,551.8 339.3,549.1 339.7,548.1 340.2,546.4 340.6,541.6 341.1,533.4 341.5,523.0 342.0,512.8 342.4,504.6 342.9,499.5 343.4,497.6 343.8,498.5 344.3,501.4 344.7,505.1 345.2,508.4 345.6,510.0 346.1,509.8 346.5,508.5 347.0,508.0 347.4,509.7 347.9,514.1 348.3,520.2 348.8,526.5 349.2,531.8 349.7,535.8 350.1,538.8 350.6,540.8 351.0,541.1 351.5,538.4 351.9,532.4 352.4,524.2 352.9,516.3 353.3,511.4 353.8,510.6 354.2,512.9 354.7,515.7 355.1,516.6 355.6,514.9 356.0,512.2 356.5,510.9 356.9,512.9 357.4,517.8 357.8,523.9 358.3,528.7 358.7,530.7 359.2,530.1 359.6,528.5 360.1,527.4 360.5,527.5 361.0,528.0 361.4,527.4 361.9,524.4 362.4,519.0 362.8,512.6 363.3,507.4 363.7,505.4 364.2,507.5 364.6,513.0 365.1,520.0 365.5,526.2 366.0,529.9 366.4,530.4 366.9,528.0 367.3,523.8 367.8,519.1 368.2,514.8 368.7,511.6 369.1,509.6 369.6,508.6 370.0,507.7 370.5,506.0 371.0,502.8 371.4,498.3 371.9,493.4 372.3,489.6 372.8,487.8 373.2,488.0 373.7,488.6 374.1,487.4 374.6,482.9 375.0,474.6 375.5,463.9 375.9,452.7 376.4,443.0 376.8,435.6 377.3,430.5 377.7,427.4 378.2,425.9 378.6,425.9 379.1,427.0 379.6,428.6 380.0,429.4 380.5,428.6 380.9,426.3 381.4,423.6 381.8,422.2 382.3,423.6 382.7,427.8 383.2,433.7 383.6,439.6 384.1,444.6 384.5,448.7 385.0,452.5 385.4,456.5 385.9,460.2 386.3,462.4 386.8,461.6 387.2,457.5 387.7,451.2 388.1,444.5 388.6,439.4 389.1,436.5 389.5,435.2 390.0,434.2 390.4,432.4 390.9,430.4 391.3,429.4 391.8,430.8 392.2,435.1 392.7,440.8 393.1,445.6 393.6,447.5 394.0,446.1 394.5,443.0 394.9,440.8 395.4,441.7 395.8,446.2 396.3,452.3 396.7,456.8 397.2,457.0 397.7,452.0 398.1,443.1 398.6,433.7 399.0,426.9 399.5,424.6 399.9,426.9 400.4,432.2 400.8,438.4 401.3,443.7 401.7,447.2 402.2,449.2 402.6,450.0 403.1,450.3 403.5,449.9 404.0,448.8 404.4,446.7 404.9,443.8 405.3,440.5 405.8,437.7 406.2,436.1 406.7,436.1 407.2,437.5 407.6,439.9 408.1,442.7 408.5,445.6 409.0,448.4 409.4,450.8 409.9,452.7 410.3,453.7 410.8,454.1 411.2,454.2 411.7,454.9 412.1,456.8 412.6,459.6 413.0,462.4 413.5,464.2 413.9,464.7 414.4,465.1 414.8,467.3 415.3,472.9 415.8,482.3 416.2,493.7 416.7,504.4 417.1,512.3 417.6,516.3 418.0,517.7 418.5,518.1 418.9,519.0 419.4,520.9 419.8,523.4 420.3,526.5 420.7,530.6 421.2,536.2 421.6,543.0 422.1,549.5 422.5,553.2 423.0,552.0 423.4,546.0 423.9,537.1 424.3,528.4 424.8,522.3 425.3,519.4 425.7,518.3 426.2,517.0 426.6,514.5 427.1,511.1 427.5,508.2 428.0,507.0 428.4,507.6 428.9,509.5 429.3,511.8 429.8,514.0 430.2,516.0 430.7,517.9 431.1,519.8 431.6,521.7 432.0,523.6 432.5,526.2 432.9,529.7 433.4,533.7 433.9,536.8 434.3,537.4 434.8,534.4 435.2,528.6 435.7,522.2 436.1,517.4 436.6,515.1 437.0,514.2 437.5,512.9 437.9,510.2 438.4,507.4 438.8,506.9 439.3,511.2 439.7,519.7 440.2,529.6 440.6,536.3 441.1,537.2 441.5,532.5 442.0,525.6 442.4,520.8 442.9,520.5 443.4,524.3 443.8,529.2 444.3,532.3 444.7,532.0 445.2,529.0 445.6,525.2 446.1,522.4 446.5,521.5 447.0,522.9 447.4,526.5 447.9,532.3 448.3,540.2 448.8,549.3 449.2,558.0 449.7,564.3 450.1,567.4 450.6,567.7 451.0,567.0 451.5,567.1 451.9,569.1 452.4,573.0 452.9,578.1 453.3,583.4 453.8,588.9 454.2,595.0 454.7,602.1 455.1,609.8 455.6,617.3 456.0,623.3 456.5,626.8 456.9,627.6 457.4,626.2 457.8,623.6 458.3,620.4 458.7,617.2 459.2,614.1 459.6,611.0 460.1,607.8 460.5,604.5 461.0,601.2 461.5,598.3 461.9,595.8 462.4,593.8 462.8,592.2 463.3,590.9 463.7,589.8 464.2,589.3 464.6,589.4 465.1,590.1 465.5,591.1 466.0,592.1 466.4,592.8 466.9,594.0 467.3,596.4 467.8,601.0 468.2,607.5 468.7,614.7 469.1,620.4 469.6,622.6" fill="none" stroke="#f8f848" stroke-width="0.95" stroke-linejoin="round"/><polyline points="8.5,600.8 9.0,600.8 9.4,600.8 9.9,600.8 10.3,600.8 10.8,600.8 11.2,600.8 11.7,600.8 12.1,600.8 12.6,600.8 13.0,600.8 13.5,600.8 13.9,600.8 14.4,600.8 14.8,600.8 15.3,600.8 15.7,600.8 16.2,600.7 16.6,600.4 17.1,599.8 17.6,598.5 18.0,596.0 18.5,591.6 18.9,584.6 19.4,574.3 19.8,560.9 20.3,545.0 20.7,528.7 21.2,514.4 21.6,505.1 22.1,502.6 22.5,507.0 23.0,516.0 23.4,525.8 23.9,532.3 24.3,533.0 24.8,528.0 25.2,520.3 25.7,514.1 26.1,512.5 26.6,516.0 27.1,522.3 27.5,527.5 28.0,528.5 28.4,525.0 28.9,519.6 29.3,515.8 29.8,515.9 30.2,519.7 30.7,524.4 31.1,526.6 31.6,525.1 32.0,521.1 32.5,517.6 32.9,517.0 33.4,519.6 33.8,523.4 34.3,525.5 34.7,524.4 35.2,521.2 35.7,518.3 36.1,517.9 36.6,520.2 37.0,523.3 37.5,524.8 37.9,523.5 38.4,520.7 38.8,518.6 39.3,518.7 39.7,521.0 40.2,523.5 40.6,524.2 41.1,522.6 41.5,520.2 42.0,518.8 42.4,519.6 42.9,521.8 43.3,523.6 43.8,523.5 44.2,521.7 44.7,519.7 45.2,519.2 45.6,520.5 46.1,522.5 46.5,523.5 47.0,522.8 47.4,520.9 47.9,519.5 48.3,519.8 48.8,521.4 49.2,522.9 49.7,523.2 50.1,521.9 50.6,520.3 51.0,519.6 51.5,520.5 51.9,522.1 52.4,523.1 52.8,522.6 53.3,521.1 53.8,519.9 54.2,520.1 54.7,521.3 55.1,522.6 55.6,522.8 56.0,521.8 56.5,520.5 56.9,520.0 57.4,520.7 57.8,522.0 58.3,522.8 58.7,522.3 59.2,521.1 59.6,520.2 60.1,520.3 60.5,521.4 61.0,522.5 61.4,522.6 61.9,521.6 62.3,520.5 62.8,520.2 63.3,520.9 63.7,522.0 64.2,522.6 64.6,522.1 65.1,521.0 65.5,520.3 66.0,520.6 66.4,521.6 66.9,522.4 67.3,522.3 67.8,521.4 68.2,520.4 68.7,520.2 69.1,520.8 69.6,521.6 70.0,521.6 70.5,520.6 70.9,519.1 71.4,517.7 71.8,516.8 72.3,515.9 72.8,514.2 73.2,510.9 73.7,506.1 74.1,500.5 74.6,494.5 75.0,488.1 75.5,480.6 75.9,471.7 76.4,461.5 76.8,451.0 77.3,441.4 77.7,433.6 78.2,427.7 78.6,423.7 79.1,421.6 79.5,421.9 80.0,425.0 80.4,430.9 80.9,438.4 81.4,445.9 81.8,451.8 82.3,455.0 82.7,455.6 83.2,453.8 83.6,450.1 84.1,445.0 84.5,439.2 85.0,433.9 85.4,430.6 85.9,430.6 86.3,433.9 86.8,439.5 87.2,445.3 87.7,449.5 88.1,451.2 88.6,450.2 89.0,447.1 89.5,442.9 90.0,438.7 90.4,435.5 90.9,434.4 91.3,436.1 91.8,440.5 92.2,446.1 92.7,451.0 93.1,453.5 93.6,453.1 94.0,450.7 94.5,448.4 94.9,448.3 95.4,451.5 95.8,458.0 96.3,466.9 96.7,477.0 97.2,486.9 97.6,495.6 98.1,502.8 98.5,508.5 99.0,513.6 99.5,519.2 99.9,526.2 100.4,534.3 100.8,542.0 101.3,547.0 101.7,547.3 102.2,542.4 102.6,533.7 103.1,523.9 103.5,515.5 104.0,510.3 104.4,508.5 104.9,509.3 105.3,511.3 105.8,513.8 106.2,516.3 106.7,518.9 107.1,522.0 107.6,525.5 108.0,529.1 108.5,531.9 109.0,532.6 109.4,530.4 109.9,525.1 110.3,517.9 110.8,511.2 111.2,507.7 111.7,509.0 112.1,514.9 112.6,522.9 113.0,529.7 113.5,532.7 113.9,531.2 114.4,526.5 114.8,521.0 115.3,516.9 115.7,515.3 116.2,515.8 116.6,517.6 117.1,519.6 117.6,521.5 118.0,523.1 118.5,524.5 118.9,525.5 119.4,525.6 119.8,524.4 120.3,521.9 120.7,518.8 121.2,516.1 121.6,515.2 122.1,516.7 122.5,520.6 123.0,525.3 123.4,528.7 123.9,529.0 124.3,525.6 124.8,519.8 125.2,514.6 125.7,512.7 126.2,515.2 126.6,520.8 127.1,526.6 127.5,529.5 128.0,528.1 128.4,523.4 128.9,518.1 129.3,515.0 129.8,515.5 130.2,518.8 130.7,522.9 131.1,525.6 131.6,525.9 132.0,524.1 132.5,521.5 132.9,519.5 133.4,518.6 133.8,519.0 134.3,520.1 134.7,521.4 135.2,522.6 135.7,523.3 136.1,523.4 136.6,522.8 137.0,521.6 137.5,520.2 137.9,519.1 138.4,518.9 138.8,519.9 139.3,521.9 139.7,523.9 140.2,524.8 140.6,524.0 141.1,521.6 141.5,518.8 142.0,517.2 142.4,518.0 142.9,521.0 143.3,524.5 143.8,526.6 144.2,525.7 144.7,522.3 145.2,518.4 145.6,516.6 146.1,518.4 146.5,523.0 147.0,527.7 147.4,529.9 147.9,528.8 148.3,525.6 148.8,523.3 149.2,524.5 149.7,529.5 150.1,536.8 150.6,543.4 151.0,547.5 151.5,549.3 151.9,550.9 152.4,554.7 152.8,562.1 153.3,572.1 153.8,582.8 154.2,591.9 154.7,598.5 155.1,603.0 155.6,607.0 156.0,611.6 156.5,616.7 156.9,621.3 157.4,623.9 157.8,623.5 158.3,620.0 158.7,614.4 159.2,608.0 159.6,602.1 160.1,597.2 160.5,593.3 161.0,590.4 161.4,588.2 161.9,587.2 162.3,587.5 162.8,589.7 163.3,593.6 163.7,598.8 164.2,604.3 164.6,609.2 165.1,612.4 165.5,613.2 166.0,611.5 166.4,607.8 166.9,602.8 167.3,597.8 167.8,593.8 168.2,591.2 168.7,590.0 169.1,589.8 169.6,590.2 170.0,591.0 170.5,592.5 170.9,594.6 171.4,596.5 171.9,596.7 172.3,593.5 172.8,586.3 173.2,575.9 173.7,564.7 174.1,555.0 174.6,548.4 175.0,544.3 175.5,540.9 175.9,536.6 176.4,530.8 176.8,524.5 177.3,518.9 177.7,514.8 178.2,511.4 178.6,507.2 179.1,501.8 179.5,496.1 180.0,492.9 180.5,494.8 180.9,502.3 181.4,513.7 181.8,525.1 182.3,533.1 182.7,536.5 183.2,536.2 183.6,534.5 184.1,532.9 184.5,531.6 185.0,529.6 185.4,526.0 185.9,521.1 186.3,516.6 186.8,514.0 187.2,514.1 187.7,515.6 188.1,516.7 188.6,516.2 189.0,514.6 189.5,513.8 190.0,515.9 190.4,521.5 190.9,528.8 191.3,534.8 191.8,536.9 192.2,534.0 192.7,527.4 193.1,519.6 193.6,513.3 194.0,509.9 194.5,509.6 194.9,511.6 195.4,515.3 195.8,519.9 196.3,525.0 196.7,529.6 197.2,532.2 197.6,531.8 198.1,528.0 198.6,522.1 199.0,516.4 199.5,513.0 199.9,513.2 200.4,516.1 200.8,520.0 201.3,523.0 201.7,524.2 202.2,523.8 202.6,523.0 203.1,522.9 203.5,523.6 204.0,524.2 204.4,524.0 204.9,522.2 205.3,519.6 205.8,517.0 206.2,515.8 206.7,516.5 207.1,518.9 207.6,522.3 208.1,525.6 208.5,527.7 209.0,527.8 209.4,525.8 209.9,522.1 210.3,517.9 210.8,514.6 211.2,513.6 211.7,515.5 212.1,519.9 212.6,525.0 213.0,528.8 213.5,529.8 213.9,527.5 214.4,522.7 214.8,517.4 215.3,513.7 215.7,513.1 216.2,515.9 216.7,520.9 217.1,526.0 217.6,529.1 218.0,528.7 218.5,525.1 218.9,520.0 219.4,515.9 219.8,514.5 220.3,516.2 220.7,519.8 221.2,523.3 221.6,524.8 222.1,524.1 222.5,521.9 223.0,519.5 223.4,517.8 223.9,516.8 224.3,516.0 224.8,514.8 225.2,513.5 225.7,512.5 226.2,511.8 226.6,510.9 227.1,509.0 227.5,505.3 228.0,499.9 228.4,493.8 228.9,488.0 229.3,483.1 229.8,478.7 230.2,473.8 230.7,468.1 231.1,461.6 231.6,455.1 232.0,448.9 232.5,442.8 232.9,436.3 233.4,429.3 233.8,422.9 234.3,418.8 234.8,418.4 235.2,421.6 235.7,426.3 236.1,429.8 236.6,430.7 237.0,429.8 237.5,429.7 237.9,433.2 238.4,441.0 238.8,450.8 239.3,459.2 239.7,462.9 240.2,461.1 240.6,455.8 241.1,449.8 241.5,445.7 242.0,443.9 242.4,443.3 242.9,442.2 243.3,439.9 243.8,436.6 244.3,433.5 244.7,431.6 245.2,431.8 245.6,434.4 246.1,439.6 246.5,446.8 247.0,454.8 247.4,462.0 247.9,466.3 248.3,467.0 248.8,465.0 249.2,462.5 249.7,462.0 250.1,464.8 250.6,470.1 251.0,475.7 251.5,479.9 251.9,482.6 252.4,485.9 252.8,492.1 253.3,502.5 253.8,515.7 254.2,528.7 254.7,538.2 255.1,542.8 255.6,543.0 256.0,541.2 256.5,539.5 256.9,538.4 257.4,537.5 257.8,535.7 258.3,532.8 258.7,529.7 259.2,527.2 259.6,525.8 260.1,524.7 260.5,522.9 261.0,519.4 261.4,514.8 261.9,510.2 262.4,507.0 262.8,505.9 263.3,506.4 263.7,508.2 264.2,510.9 264.6,514.9 265.1,520.7 265.5,528.0 266.0,535.2 266.4,540.2 266.9,541.3 267.3,537.8 267.8,531.1 268.2,523.3 268.7,516.3 269.1,511.4 269.6,509.1 270.0,509.1 270.5,511.0 270.9,514.2 271.4,518.1 271.9,521.8 272.3,524.6 272.8,526.1 273.2,526.8 273.7,527.0 274.1,527.1 274.6,526.8 275.0,525.3 275.5,522.7 275.9,519.5 276.4,517.3 276.8,516.9 277.3,518.2 277.7,519.9 278.2,520.3 278.6,518.8 279.1,516.6 279.5,515.9 280.0,518.6 280.5,524.4 280.9,530.9 281.4,534.6 281.8,533.0 282.3,526.5 282.7,518.1 283.2,511.5 283.6,509.2 284.1,511.3 284.5,515.9 285.0,520.7 285.4,524.0 285.9,525.9 286.3,527.2 286.8,528.3 287.2,528.7 287.7,527.4 288.1,523.7 288.6,518.2 289.1,512.9 289.5,510.0 290.0,511.3 290.4,516.4 290.9,523.4 291.3,529.6 291.8,532.4 292.2,530.9 292.7,526.0 293.1,520.1 293.6,515.5 294.0,514.0 294.5,515.6 294.9,519.0 295.4,522.3 295.8,524.1 296.3,524.1 296.7,523.2 297.2,522.7 297.6,523.1 298.1,524.1 298.6,524.7 299.0,524.1 299.5,522.4 299.9,520.8 300.4,520.5 300.8,522.2 301.3,525.5 301.7,529.1 302.2,531.8 302.6,533.3 303.1,534.1 303.5,535.3 304.0,537.5 304.4,540.6 304.9,543.9 305.3,546.7 305.8,549.3 306.2,552.7 306.7,558.0 307.2,565.7 307.6,574.9 308.1,583.9 308.5,590.9 309.0,594.9 309.4,596.6 309.9,597.6 310.3,600.0 310.8,605.0 311.2,612.3 311.7,620.2 312.1,626.5 312.6,629.5 313.0,628.2 313.5,623.5 313.9,616.9 314.4,610.3 314.8,605.2 315.3,602.0 315.7,600.6 316.2,600.0 316.7,599.0 317.1,596.8 317.6,593.0 318.0,588.2 318.5,583.5 318.9,580.8 319.4,581.5 319.8,585.8 320.3,592.9 320.7,600.6 321.2,606.8 321.6,610.0 322.1,609.9 322.5,607.5 323.0,604.2 323.4,601.1 323.9,598.5 324.3,596.1 324.8,593.2 325.2,589.5 325.7,584.5 326.2,578.4 326.6,571.4 327.1,564.1 327.5,557.6 328.0,553.2 328.4,551.6 328.9,552.5 329.3,554.0 329.8,553.9 330.2,550.4 330.7,543.3 331.1,534.2 331.6,525.3 332.0,518.1 332.5,512.6 332.9,507.7 333.4,502.5 333.8,496.9 334.3,492.3 334.8,490.6 335.2,492.8 335.7,498.4 336.1,505.4 336.6,512.1 337.0,517.4 337.5,521.8 337.9,526.1 338.4,530.7 338.8,535.0 339.3,537.5 339.7,537.1 340.2,534.0 340.6,529.4 341.1,525.3 341.5,523.1 342.0,523.0 342.4,524.2 342.9,525.1 343.4,524.7 343.8,522.5 344.3,518.9 344.7,514.9 345.2,511.4 345.6,509.2 346.1,508.9 346.5,510.3 347.0,513.4 347.4,517.7 347.9,522.3 348.3,526.8 348.8,530.5 349.2,532.9 349.7,533.8 350.1,533.1 350.6,531.1 351.0,528.1 351.5,524.1 351.9,519.4 352.4,513.9 352.9,508.5 353.3,504.6 353.8,504.2 354.2,508.5 354.7,517.1 355.1,527.4 355.6,535.5 356.0,538.4 356.5,535.2 356.9,528.1 357.4,521.1 357.8,517.4 358.3,517.7 358.7,520.0 359.2,521.3 359.6,519.7 360.1,516.0 360.5,512.9 361.0,513.2 361.4,517.4 361.9,523.7 362.4,528.6 362.8,530.0 363.3,527.7 363.7,523.7 364.2,520.6 364.6,519.6 365.1,520.3 365.5,521.3 366.0,521.5 366.4,520.9 366.9,520.0 367.3,519.3 367.8,518.9 368.2,518.4 368.7,518.0 369.1,518.4 369.6,520.7 370.0,524.8 370.5,529.2 371.0,531.5 371.4,529.6 371.9,523.7 372.3,516.2 372.8,510.6 373.2,509.4 373.7,512.8 374.1,518.3 374.6,523.2 375.0,525.6 375.5,525.4 375.9,524.2 376.4,523.1 376.8,522.3 377.3,520.7 377.7,517.3 378.2,512.1 378.6,506.8 379.1,503.3 379.6,503.2 380.0,506.2 380.5,510.4 380.9,513.2 381.4,512.5 381.8,507.7 382.3,499.6 382.7,490.1 383.2,481.1 383.6,474.0 384.1,469.4 384.5,467.0 385.0,465.6 385.4,464.0 385.9,461.3 386.3,456.8 386.8,450.6 387.2,443.1 387.7,435.1 388.1,427.7 388.6,421.8 389.1,418.3 389.5,417.5 390.0,419.2 390.4,422.3 390.9,425.5 391.3,427.6 391.8,428.7 392.2,429.5 392.7,431.2 393.1,434.6 393.6,439.4 394.0,444.6 394.5,448.9 394.9,451.9 395.4,454.0 395.8,455.9 396.3,457.9 396.7,459.5 397.2,459.5 397.7,457.4 398.1,453.3 398.6,448.4 399.0,443.9 399.5,440.9 399.9,439.4 400.4,439.0 400.8,439.2 401.3,440.5 401.7,443.1 402.2,447.3 402.6,452.9 403.1,459.0 403.5,465.1 404.0,470.8 404.4,476.4 404.9,482.1 405.3,488.0 405.8,493.8 406.2,499.1 406.7,504.0 407.2,508.4 407.6,512.3 408.1,515.2 408.5,516.5 409.0,516.1 409.4,515.2 409.9,516.0 410.3,520.4 410.8,528.8 411.2,539.6 411.7,549.1 412.1,554.0 412.6,553.2 413.0,547.8 413.5,541.1 413.9,535.7 414.4,532.8 414.8,531.3 415.3,529.1 415.8,524.7 416.2,517.8 416.7,509.9 417.1,503.0 417.6,498.5 418.0,497.3 418.5,499.2 418.9,503.6 419.4,509.9 419.8,516.9 420.3,523.7 420.7,529.1 421.2,532.4 421.6,533.2 422.1,531.8 422.5,529.0 423.0,525.8 423.4,523.5 423.9,522.8 424.3,524.0 424.8,526.4 425.3,528.4 425.7,528.0 426.2,524.5 426.6,518.4 427.1,512.4 427.5,509.3 428.0,510.6 428.4,515.3 428.9,520.3 429.3,522.5 429.8,520.9 430.2,517.1 430.7,514.5 431.1,516.2 431.6,522.4 432.0,530.4 432.5,536.6 432.9,538.1 433.4,534.6 433.9,528.1 434.3,521.4 434.8,516.1 435.2,512.6 435.7,510.2 436.1,508.8 436.6,508.8 437.0,511.1 437.5,516.0 437.9,522.5 438.4,528.7 438.8,532.8 439.3,534.0 439.7,532.6 440.2,529.5 440.6,525.7 441.1,521.7 441.5,517.8 442.0,514.5 442.4,512.3 442.9,511.9 443.4,513.4 443.8,516.2 444.3,519.6 444.7,523.1 445.2,526.2 445.6,528.7 446.1,530.1 446.5,529.7 447.0,527.0 447.4,522.7 447.9,518.1 448.3,515.1 448.8,514.8 449.2,516.7 449.7,519.6 450.1,521.8 450.6,522.8 451.0,522.9 451.5,523.4 451.9,524.7 452.4,526.4 452.9,527.3 453.3,526.7 453.8,525.2 454.2,524.0 454.7,524.7 455.1,527.3 455.6,530.6 456.0,532.7 456.5,532.6 456.9,531.0 457.4,529.9 457.8,531.7 458.3,537.4 458.7,545.8 459.2,554.3 459.6,560.6 460.1,563.3 460.5,563.3 461.0,562.7 461.5,563.6 461.9,567.3 462.4,573.4 462.8,580.8 463.3,588.2 463.7,595.0 464.2,601.0 464.6,606.8 465.1,612.3 465.5,617.2 466.0,620.9 466.4,622.7 466.9,622.4 467.3,620.3 467.8,617.3 468.2,614.5 468.7,612.7 469.1,612.4 469.6,613.5" fill="none" stroke="#d848f8" stroke-width="0.95" stroke-linejoin="round"/><polyline points="8.5,600.8 9.0,600.8 9.4,600.8 9.9,600.8 10.3,600.8 10.8,600.7 11.2,600.2 11.7,598.7 12.1,594.8 12.6,586.9 13.0,573.7 13.5,555.6 13.9,535.2 14.4,517.2 14.8,506.4 15.3,505.3 15.7,512.5 16.2,522.9 16.6,530.2 17.1,530.8 17.6,525.4 18.0,518.2 18.5,514.3 18.9,515.9 19.4,521.1 19.8,525.9 20.3,526.7 20.7,523.5 21.2,519.1 21.6,516.9 22.1,518.5 22.5,522.1 23.0,524.9 23.4,524.6 23.9,521.8 24.3,518.9 24.8,518.3 25.2,520.3 25.7,523.0 26.1,524.2 26.6,523.0 27.1,520.6 27.5,519.0 28.0,519.6 28.4,521.6 28.9,523.3 29.3,523.3 29.8,521.6 30.2,519.9 30.7,519.5 31.1,520.8 31.6,522.5 32.0,523.2 32.5,522.3 32.9,520.7 33.4,519.8 33.8,520.3 34.3,521.8 34.7,522.8 35.2,522.6 35.7,521.3 36.1,520.2 36.6,520.2 37.0,521.2 37.5,522.3 37.9,522.6 38.4,521.8 38.8,520.7 39.3,520.2 39.7,520.8 40.2,521.9 40.6,522.5 41.1,522.1 41.5,521.1 42.0,520.4 42.4,520.6 42.9,521.5 43.3,522.3 43.8,522.2 44.2,521.5 44.7,520.7 45.2,520.6 45.6,521.2 46.1,522.0 46.5,522.2 47.0,521.7 47.4,521.0 47.9,520.6 48.3,521.0 48.8,521.7 49.2,522.1 49.7,521.9 50.1,521.2 50.6,520.7 51.0,520.8 51.5,521.4 51.9,522.0 52.4,522.0 52.8,521.5 53.3,520.9 53.8,520.8 54.2,521.2 54.7,521.8 55.1,522.0 55.6,521.7 56.0,521.1 56.5,520.8 56.9,521.1 57.4,521.6 57.8,522.0 58.3,521.8 58.7,521.3 59.2,520.9 59.6,521.0 60.1,521.4 60.5,521.9 61.0,521.9 61.4,521.4 61.9,521.0 62.3,520.9 62.8,521.3 63.3,521.7 63.7,521.9 64.2,521.6 64.6,521.1 65.1,520.9 65.5,521.2 66.0,521.6 66.4,521.8 66.9,521.7 67.3,521.3 67.8,521.0 68.2,521.1 68.7,521.4 69.1,521.8 69.6,521.8 70.0,521.4 70.5,521.1 70.9,521.0 71.4,521.3 71.8,521.7 72.3,521.8 72.8,521.5 73.2,521.2 73.7,521.0 74.1,521.1 74.6,521.4 75.0,521.5 75.5,521.3 75.9,520.7 76.4,520.2 76.8,519.8 77.3,519.4 77.7,518.7 78.2,517.4 78.6,515.3 79.1,512.7 79.5,509.6 80.0,505.9 80.4,501.4 80.9,495.6 81.4,488.5 81.8,480.3 82.3,471.5 82.7,462.3 83.2,453.2 83.6,444.3 84.1,436.0 84.5,429.0 85.0,424.2 85.4,422.2 85.9,423.1 86.3,426.8 86.8,432.7 87.2,440.1 87.7,448.6 88.1,457.3 88.6,465.4 89.0,472.0 89.5,476.5 90.0,479.1 90.4,480.6 90.9,482.2 91.3,485.1 91.8,490.1 92.2,497.7 92.7,507.6 93.1,519.2 93.6,531.2 94.0,541.9 94.5,549.3 94.9,552.1 95.4,549.4 95.8,541.9 96.3,531.4 96.7,520.2 97.2,510.7 97.6,504.5 98.1,502.6 98.5,504.9 99.0,510.3 99.5,517.3 99.9,524.0 100.4,528.8 100.8,530.8 101.3,530.0 101.7,527.5 102.2,524.5 102.6,522.0 103.1,520.4 103.5,519.5 104.0,518.8 104.4,518.1 104.9,517.4 105.3,517.2 105.8,518.0 106.2,520.0 106.7,522.9 107.1,525.8 107.6,527.9 108.0,528.1 108.5,525.9 109.0,521.8 109.4,517.0 109.9,513.3 110.3,512.5 110.8,515.3 111.2,520.8 111.7,526.9 112.1,530.9 112.6,531.1 113.0,527.0 113.5,520.5 113.9,514.4 114.4,511.3 114.8,512.6 115.3,517.7 115.7,524.3 116.2,529.7 116.6,531.3 117.1,528.4 117.6,522.4 118.0,516.0 118.5,512.2 118.9,512.7 119.4,517.4 119.8,523.9 120.3,529.0 120.7,530.3 121.2,527.2 121.6,521.3 122.1,515.8 122.5,513.3 123.0,515.0 123.4,519.8 123.9,525.1 124.3,528.2 124.8,527.7 125.2,524.1 125.7,519.4 126.2,516.1 126.6,515.7 127.1,518.2 127.5,522.2 128.0,525.5 128.4,526.4 128.9,524.7 129.3,521.4 129.8,518.3 130.2,517.1 130.7,518.3 131.1,521.0 131.6,523.7 132.0,524.9 132.5,524.1 132.9,521.9 133.4,519.7 133.8,518.7 134.3,519.3 134.7,520.9 135.2,522.5 135.7,523.2 136.1,522.8 136.6,521.8 137.0,520.9 137.5,520.4 137.9,520.5 138.4,520.9 138.8,521.4 139.3,521.7 139.7,521.9 140.2,522.0 140.6,521.9 141.1,521.6 141.5,521.1 142.0,520.6 142.4,520.4 142.9,520.8 143.3,521.7 143.8,522.4 144.2,522.7 144.7,522.2 145.2,521.2 145.6,520.1 146.1,519.8 146.5,520.4 147.0,521.7 147.4,523.0 147.9,523.3 148.3,522.5 148.8,520.9 149.2,519.6 149.7,519.4 150.1,520.6 150.6,522.6 151.0,524.2 151.5,524.4 151.9,523.0 152.4,521.1 152.8,520.2 153.3,521.2 153.8,524.1 154.2,527.4 154.7,529.7 155.1,530.1 155.6,529.5 156.0,529.6 156.5,532.1 156.9,537.3 157.4,544.2 157.8,550.8 158.3,555.8 158.7,559.4 159.2,563.0 159.6,568.6 160.1,577.1 160.5,587.2 161.0,597.0 161.4,604.3 161.9,608.3 162.3,610.2 162.8,611.6 163.3,613.7 163.7,616.1 164.2,616.9 164.6,614.0 165.1,606.7 165.5,596.2 166.0,584.7 166.4,574.7 166.9,566.9 167.3,560.4 167.8,553.6 168.2,545.5 168.7,536.6 169.1,528.9 169.6,524.2 170.0,523.1 170.5,524.1 170.9,524.5 171.4,522.4 171.9,517.3 172.3,511.0 172.8,505.9 173.2,503.6 173.7,504.0 174.1,505.4 174.6,506.5 175.0,507.2 175.5,509.0 175.9,513.7 176.4,521.9 176.8,532.1 177.3,541.1 177.7,545.6 178.2,544.2 178.6,538.3 179.1,530.4 179.5,522.9 180.0,517.0 180.5,512.1 180.9,507.5 181.4,503.7 181.8,502.3 182.3,505.3 182.7,513.0 183.2,523.8 183.6,533.8 184.1,539.6 184.5,539.5 185.0,534.6 185.4,527.4 185.9,520.9 186.3,516.4 186.8,513.6 187.2,511.9 187.7,511.0 188.1,511.6 188.6,514.9 189.0,520.7 189.5,527.6 190.0,532.6 190.4,533.4 190.9,529.8 191.3,523.6 191.8,517.7 192.2,514.6 192.7,514.9 193.1,517.3 193.6,519.7 194.0,521.0 194.5,521.3 194.9,521.6 195.4,522.8 195.8,524.6 196.3,525.6 196.7,525.0 197.2,522.4 197.6,519.4 198.1,517.6 198.6,518.0 199.0,520.0 199.5,522.2 199.9,522.8 200.4,521.8 200.8,520.2 201.3,519.7 201.7,521.2 202.2,523.8 202.6,525.7 203.1,525.3 203.5,522.4 204.0,518.7 204.4,516.1 204.9,516.2 205.3,518.8 205.8,522.2 206.2,524.7 206.7,525.5 207.1,524.8 207.6,523.4 208.1,522.0 208.5,520.7 209.0,519.1 209.4,517.5 209.9,516.8 210.3,517.9 210.8,521.2 211.2,525.4 211.7,528.4 212.1,528.3 212.6,524.5 213.0,518.9 213.5,514.3 213.9,513.2 214.4,516.0 214.8,521.3 215.3,526.3 215.7,528.6 216.2,527.6 216.7,524.2 217.1,520.1 217.6,516.9 218.0,515.7 218.5,516.4 218.9,518.8 219.4,522.2 219.8,525.6 220.3,527.6 220.7,527.1 221.2,524.0 221.6,519.3 222.1,515.1 222.5,513.7 223.0,516.1 223.4,521.3 223.9,526.7 224.3,529.5 224.8,528.0 225.2,523.2 225.7,517.5 226.2,513.9 226.6,514.0 227.1,517.5 227.5,522.4 228.0,526.0 228.4,526.8 228.9,524.5 229.3,520.1 229.8,515.7 230.2,512.7 230.7,512.1 231.1,513.5 231.6,515.9 232.0,517.5 232.5,516.9 232.9,513.3 233.4,507.2 233.8,500.1 234.3,493.9 234.8,490.0 235.2,488.5 235.7,487.8 236.1,485.7 236.6,480.4 237.0,471.7 237.5,461.1 237.9,451.1 238.4,444.0 238.8,440.5 239.3,439.6 239.7,439.1 240.2,437.3 240.6,433.8 241.1,430.0 241.5,427.8 242.0,429.1 242.4,434.7 242.9,443.6 243.3,454.2 243.8,464.7 244.3,473.9 244.7,481.8 245.2,489.1 245.6,496.8 246.1,505.3 246.5,514.5 247.0,523.4 247.4,530.4 247.9,534.6 248.3,535.6 248.8,534.2 249.2,531.8 249.7,530.1 250.1,529.9 250.6,531.1 251.0,532.6 251.5,533.2 251.9,532.2 252.4,529.9 252.8,527.2 253.3,525.2 253.8,524.4 254.2,524.1 254.7,523.3 255.1,521.0 255.6,516.8 256.0,511.8 256.5,507.4 256.9,505.1 257.4,505.7 257.8,509.0 258.3,514.1 258.7,519.8 259.2,525.2 259.6,529.7 260.1,533.2 260.5,535.7 261.0,536.7 261.4,535.9 261.9,532.8 262.4,527.4 262.8,520.4 263.3,513.2 263.7,507.3 264.2,504.1 264.6,504.3 265.1,507.8 265.5,513.7 266.0,520.7 266.4,527.5 266.9,533.0 267.3,536.1 267.8,536.6 268.2,534.2 268.7,529.4 269.1,523.0 269.6,516.5 270.0,511.1 270.5,508.0 270.9,507.8 271.4,510.4 271.9,515.1 272.3,521.1 272.8,527.0 273.2,531.7 273.7,534.0 274.1,533.3 274.6,529.7 275.0,524.1 275.5,518.1 275.9,513.2 276.4,510.8 276.8,511.1 277.3,514.0 277.7,518.4 278.2,523.1 278.6,527.0 279.1,529.3 279.5,529.5 280.0,527.7 280.5,524.5 280.9,520.8 281.4,517.6 281.8,515.6 282.3,515.1 282.7,516.1 283.2,518.3 283.6,521.1 284.1,524.1 284.5,526.4 285.0,527.4 285.4,526.5 285.9,523.8 286.3,520.3 286.8,517.3 287.2,516.1 287.7,517.3 288.1,519.9 288.6,522.6 289.1,523.9 289.5,523.6 290.0,522.3 290.4,521.3 290.9,521.3 291.3,522.2 291.8,522.9 292.2,522.5 292.7,521.0 293.1,519.2 293.6,518.4 294.0,519.2 294.5,521.2 294.9,523.2 295.4,523.9 295.8,523.2 296.3,521.6 296.7,520.5 297.2,520.4 297.6,521.4 298.1,522.3 298.6,522.4 299.0,521.3 299.5,519.8 299.9,518.8 300.4,519.3 300.8,521.1 301.3,523.6 301.7,525.4 302.2,525.5 302.6,523.8 303.1,521.0 303.5,518.4 304.0,517.4 304.4,518.4 304.9,521.4 305.3,525.0 305.8,527.7 306.2,528.6 306.7,527.5 307.2,525.5 307.6,524.0 308.1,524.2 308.5,526.0 309.0,529.0 309.4,532.2 309.9,535.2 310.3,538.4 310.8,542.1 311.2,546.3 311.7,550.4 312.1,553.3 312.6,554.8 313.0,556.2 313.5,559.4 313.9,566.0 314.4,575.8 314.8,586.8 315.3,595.6 315.7,600.0 316.2,600.0 316.7,598.0 317.1,597.4 317.6,600.2 318.0,605.8 318.5,611.6 318.9,614.5 319.4,612.4 319.8,605.9 320.3,596.8 320.7,587.3 321.2,578.3 321.6,570.0 322.1,561.7 322.5,553.1 323.0,544.7 323.4,536.8 323.9,529.5 324.3,522.3 324.8,514.6 325.2,506.5 325.7,499.4 326.2,495.2 326.6,495.4 327.1,499.7 327.5,506.4 328.0,512.4 328.4,515.5 328.9,515.1 329.3,512.6 329.8,510.7 330.2,511.5 330.7,515.8 331.1,522.1 331.6,528.0 332.0,530.9 332.5,529.9 332.9,526.0 333.4,521.6 333.8,519.5 334.3,521.0 334.8,525.6 335.2,530.9 335.7,534.4 336.1,534.2 336.6,530.6 337.0,525.1 337.5,519.7 337.9,515.7 338.4,513.4 338.8,512.1 339.3,511.5 339.7,511.5 340.2,512.3 340.6,514.3 341.1,516.8 341.5,519.3 342.0,521.4 342.4,523.9 342.9,527.6 343.4,532.5 343.8,537.5 344.3,539.7 344.7,536.8 345.2,528.4 345.6,517.1 346.1,507.2 346.5,502.6 347.0,504.3 347.4,510.4 347.9,516.8 348.3,520.7 348.8,521.5 349.2,521.6 349.7,523.4 350.1,528.0 350.6,533.9 351.0,537.6 351.5,536.5 351.9,530.2 352.4,520.9 352.9,512.0 353.3,506.5 353.8,505.2 354.2,507.6 354.7,512.3 355.1,518.2 355.6,524.3 356.0,529.8 356.5,533.6 356.9,534.6 357.4,532.2 357.8,527.3 358.3,521.7 358.7,517.1 359.2,514.5 359.6,513.7 360.1,513.8 360.5,514.1 361.0,514.9 361.4,517.2 361.9,521.4 362.4,527.2 362.8,532.4 363.3,534.8 363.7,532.8 364.2,526.6 364.6,518.4 365.1,511.4 365.5,508.3 366.0,510.0 366.4,515.2 366.9,521.6 367.3,526.5 367.8,528.5 368.2,527.7 368.7,525.6 369.1,523.8 369.6,522.8 370.0,522.4 370.5,521.3 371.0,519.0 371.4,516.1 371.9,514.3 372.3,515.0 372.8,518.7 373.2,523.9 373.7,528.3 374.1,529.7 374.6,527.7 375.0,523.5 375.5,519.4 375.9,516.9 376.4,516.5 376.8,517.4 377.3,518.7 377.7,519.9 378.2,521.4 378.6,523.3 379.1,525.0 379.6,525.4 380.0,523.8 380.5,520.7 380.9,517.6 381.4,516.1 381.8,516.9 382.3,518.9 382.7,520.4 383.2,519.9 383.6,517.6 384.1,515.2 384.5,514.3 385.0,515.1 385.4,516.1 385.9,515.1 386.3,511.3 386.8,505.8 387.2,500.7 387.7,498.0 388.1,497.6 388.6,497.7 389.1,495.7 389.5,490.7 390.0,483.6 390.4,476.7 390.9,471.7 391.3,468.7 391.8,466.1 392.2,462.0 392.7,455.8 393.1,448.8 393.6,442.9 394.0,439.4 394.5,438.4 394.9,438.5 395.4,438.5 395.8,438.2 396.3,438.4 396.7,440.0 397.2,443.6 397.7,448.8 398.1,454.8 398.6,461.3 399.0,468.6 399.5,477.5 399.9,488.1 400.4,499.8 400.8,510.9 401.3,520.2 401.7,526.8 402.2,531.5 402.6,535.1 403.1,538.7 403.5,542.5 404.0,545.9 404.4,548.0 404.9,548.2 405.3,546.3 405.8,542.5 406.2,537.3 406.7,531.5 407.2,525.9 407.6,521.2 408.1,517.8 408.5,516.1 409.0,515.7 409.4,516.2 409.9,517.0 410.3,517.4 410.8,517.0 411.2,515.8 411.7,514.3 412.1,513.1 412.6,513.3 413.0,515.1 413.5,518.3 413.9,521.7 414.4,524.0 414.8,524.2 415.3,522.6 415.8,520.4 416.2,519.1 416.7,519.8 417.1,522.5 417.6,526.3 418.0,529.9 418.5,532.3 418.9,532.7 419.4,530.9 419.8,527.0 420.3,521.6 420.7,515.8 421.2,511.4 421.6,509.6 422.1,511.0 422.5,514.3 423.0,517.6 423.4,519.1 423.9,518.7 424.3,517.7 424.8,518.4 425.3,522.1 425.7,527.9 426.2,533.8 426.6,536.9 427.1,536.0 427.5,531.5 428.0,525.2 428.4,518.9 428.9,513.6 429.3,509.4 429.8,506.7 430.2,506.2 430.7,508.9 431.1,514.9 431.6,522.7 432.0,529.7 432.5,533.3 432.9,532.8 433.4,529.7 433.9,526.5 434.3,525.1 434.8,525.3 435.2,525.4 435.7,523.2 436.1,517.9 436.6,511.2 437.0,506.1 437.5,505.1 437.9,509.3 438.4,517.3 438.8,526.5 439.3,534.0 439.7,537.9 440.2,537.4 440.6,533.0 441.1,526.0 441.5,518.5 442.0,512.5 442.4,509.7 442.9,510.3 443.4,513.5 443.8,517.3 444.3,520.4 444.7,522.3 445.2,523.6 445.6,525.3 446.1,527.6 446.5,529.8 447.0,530.3 447.4,528.2 447.9,523.5 448.3,517.7 448.8,512.9 449.2,510.4 449.7,510.7 450.1,513.5 450.6,518.1 451.0,523.7 451.5,529.3 451.9,533.3 452.4,534.2 452.9,530.9 453.3,524.2 453.8,516.5 454.2,510.7 454.7,509.5 455.1,512.9 455.6,519.1 456.0,524.9 456.5,527.8 456.9,527.5 457.4,525.4 457.8,523.7 458.3,523.8 458.7,525.4 459.2,527.1 459.6,527.0 460.1,524.7 460.5,521.2 461.0,518.6 461.5,519.2 461.9,523.6 462.4,530.9 462.8,538.5 463.3,543.9 463.7,545.4 464.2,543.4 464.6,539.9 465.1,537.6 465.5,538.6 466.0,543.3 466.4,550.7 466.9,558.6 467.3,565.6 467.8,570.9 468.2,575.0 468.7,578.5 469.1,581.9 469.6,585.1" fill="none" stroke="#d84818" stroke-width="0.95" stroke-linejoin="round"/><polyline points="8.5,600.8 9.0,593.0 9.4,570.0 9.9,542.1 10.3,520.4 10.8,511.2 11.2,513.3 11.7,520.5 12.1,525.8 12.6,526.0 13.0,522.6 13.5,519.1 13.9,518.3 14.4,520.2 14.8,522.7 15.3,523.6 15.7,522.6 16.2,520.7 16.6,519.7 17.1,520.3 17.6,521.7 18.0,522.7 18.5,522.4 18.9,521.3 19.4,520.4 19.8,520.5 20.3,521.3 20.7,522.1 21.2,522.2 21.6,521.6 22.1,520.9 22.5,520.7 23.0,521.1 23.4,521.8 23.9,522.0 24.3,521.7 24.8,521.1 25.2,520.8 25.7,521.0 26.1,521.6 26.6,521.9 27.1,521.8 27.5,521.3 28.0,521.0 28.4,521.0 28.9,521.4 29.3,521.7 29.8,521.8 30.2,521.5 30.7,521.1 31.1,521.0 31.6,521.3 32.0,521.6 32.5,521.7 32.9,521.5 33.4,521.2 33.8,521.1 34.3,521.2 34.7,521.5 35.2,521.7 35.7,521.6 36.1,521.3 36.6,521.2 37.0,521.2 37.5,521.4 37.9,521.6 38.4,521.6 38.8,521.4 39.3,521.2 39.7,521.2 40.2,521.4 40.6,521.5 41.1,521.6 41.5,521.5 42.0,521.3 42.4,521.2 42.9,521.3 43.3,521.5 43.8,521.6 44.2,521.5 44.7,521.3 45.2,521.2 45.6,521.3 46.1,521.4 46.5,521.6 47.0,521.5 47.4,521.4 47.9,521.3 48.3,521.3 48.8,521.4 49.2,521.5 49.7,521.5 50.1,521.4 50.6,521.3 51.0,521.3 51.5,521.3 51.9,521.5 52.4,521.5 52.8,521.5 53.3,521.3 53.8,521.3 54.2,521.3 54.7,521.4 55.1,521.5 55.6,521.5 56.0,521.4 56.5,521.3 56.9,521.3 57.4,521.4 57.8,521.5 58.3,521.5 58.7,521.4 59.2,521.3 59.6,521.3 60.1,521.4 60.5,521.5 61.0,521.5 61.4,521.4 61.9,521.4 62.3,521.3 62.8,521.3 63.3,521.4 63.7,521.5 64.2,521.5 64.6,521.4 65.1,521.3 65.5,521.3 66.0,521.4 66.4,521.5 66.9,521.5 67.3,521.4 67.8,521.3 68.2,521.3 68.7,521.4 69.1,521.5 69.6,521.5 70.0,521.4 70.5,521.4 70.9,521.3 71.4,521.4 71.8,521.4 72.3,521.5 72.8,521.4 73.2,521.4 73.7,521.3 74.1,521.3 74.6,521.4 75.0,521.5 75.5,521.5 75.9,521.4 76.4,521.3 76.8,521.3 77.3,521.3 77.7,521.4 78.2,521.3 78.6,521.2 79.1,521.0 79.5,520.8 80.0,520.6 80.4,520.3 80.9,519.7 81.4,519.0 81.8,517.9 82.3,516.6 82.7,514.9 83.2,512.9 83.6,510.4 84.1,507.4 84.5,503.9 85.0,500.2 85.4,496.3 85.9,492.5 86.3,489.2 86.8,486.6 87.2,485.2 87.7,485.3 88.1,487.4 88.6,491.6 89.0,498.0 89.5,506.0 90.0,515.2 90.4,524.8 90.9,533.8 91.3,541.0 91.8,545.5 92.2,546.5 92.7,543.7 93.1,537.5 93.6,528.8 94.0,519.1 94.5,510.1 94.9,503.5 95.4,500.5 95.8,501.9 96.3,507.4 96.7,515.9 97.2,525.4 97.6,533.7 98.1,538.9 98.5,539.5 99.0,535.4 99.5,527.8 99.9,518.7 100.4,510.6 100.8,505.7 101.3,505.5 101.7,509.9 102.2,517.8 102.6,526.5 103.1,533.5 103.5,536.4 104.0,534.4 104.4,528.1 104.9,519.7 105.3,512.1 105.8,507.9 106.2,508.6 106.7,513.9 107.1,521.8 107.6,529.3 108.0,533.7 108.5,533.4 109.0,528.5 109.4,520.9 109.9,513.7 110.3,509.7 110.8,510.5 111.2,515.8 111.7,523.3 112.1,529.8 112.6,532.6 113.0,530.6 113.5,524.7 113.9,517.5 114.4,512.2 114.8,511.1 115.3,514.6 115.7,521.1 116.2,527.6 116.6,531.1 117.1,530.1 117.6,525.0 118.0,518.4 118.5,513.3 118.9,512.1 119.4,515.5 119.8,521.7 120.3,527.6 120.7,530.3 121.2,528.6 121.6,523.3 122.1,517.1 122.5,513.3 123.0,513.7 123.4,518.0 123.9,524.0 124.3,528.5 124.8,529.2 125.2,525.8 125.7,520.2 126.2,515.3 126.6,513.7 127.1,516.3 127.5,521.6 128.0,526.7 128.4,528.8 128.9,526.8 129.3,521.9 129.8,516.8 130.2,514.3 130.7,515.9 131.1,520.5 131.6,525.6 132.0,528.2 132.5,526.8 132.9,522.4 133.4,517.5 133.8,514.9 134.3,516.1 134.7,520.4 135.2,525.2 135.7,527.6 136.1,526.4 136.6,522.2 137.0,517.7 137.5,515.4 137.9,516.8 138.4,520.9 138.8,525.2 139.3,527.2 139.7,525.6 140.2,521.5 140.6,517.4 141.1,515.8 141.5,517.7 142.0,521.9 142.4,525.6 142.9,526.7 143.3,524.5 143.8,520.3 144.2,516.9 144.7,516.4 145.2,519.0 145.6,523.1 146.1,526.1 146.5,526.0 147.0,523.0 147.4,519.0 147.9,516.6 148.3,517.4 148.8,520.7 149.2,524.4 149.7,526.1 150.1,524.7 150.6,521.2 151.0,517.8 151.5,516.9 151.9,519.0 152.4,522.6 152.8,525.5 153.3,525.6 153.8,523.1 154.2,519.6 154.7,517.6 155.1,518.4 155.6,521.6 156.0,525.1 156.5,526.7 156.9,525.7 157.4,522.9 157.8,520.8 158.3,521.1 158.7,524.2 159.2,528.7 159.6,532.2 160.1,533.4 160.5,532.6 161.0,531.6 161.4,532.6 161.9,536.4 162.3,541.9 162.8,547.0 163.3,549.7 163.7,549.7 164.2,548.2 164.6,547.2 165.1,547.8 165.5,549.6 166.0,550.5 166.4,548.4 166.9,542.8 167.3,534.7 167.8,526.5 168.2,520.1 168.7,515.9 169.1,512.8 169.6,509.2 170.0,504.5 170.5,500.0 170.9,497.8 171.4,499.5 171.9,505.4 172.3,513.8 172.8,522.1 173.2,528.3 173.7,532.1 174.1,534.4 174.6,536.3 175.0,537.9 175.5,538.1 175.9,535.3 176.4,528.8 176.8,519.9 177.3,511.0 177.7,505.0 178.2,503.5 178.6,506.0 179.1,510.8 179.5,516.0 180.0,520.7 180.5,525.2 180.9,529.7 181.4,534.1 181.8,536.8 182.3,536.1 182.7,531.1 183.2,522.8 183.6,514.0 184.1,507.6 184.5,505.8 185.0,508.4 185.4,513.8 185.9,519.7 186.3,524.8 186.8,528.5 187.2,531.2 187.7,532.7 188.1,532.2 188.6,528.8 189.0,522.4 189.5,514.7 190.0,508.6 190.4,506.6 190.9,509.9 191.3,517.0 191.8,525.1 192.2,531.0 192.7,533.1 193.1,531.5 193.6,527.7 194.0,523.1 194.5,518.8 194.9,515.0 195.4,512.3 195.8,511.5 196.3,513.6 196.7,518.8 197.2,525.7 197.6,531.7 198.1,534.1 198.6,531.4 199.0,524.6 199.5,516.8 199.9,511.3 200.4,510.1 200.8,513.3 201.3,518.8 201.7,524.3 202.2,528.0 202.6,529.4 203.1,528.6 203.5,526.1 204.0,522.3 204.4,517.7 204.9,513.8 205.3,512.1 205.8,514.0 206.2,519.3 206.7,526.0 207.1,531.2 207.6,532.1 208.1,528.1 208.5,521.2 209.0,514.6 209.4,511.4 209.9,512.8 210.3,517.6 210.8,523.4 211.2,527.6 211.7,528.9 212.1,527.5 212.6,524.3 213.0,520.4 213.5,517.0 213.9,514.9 214.4,514.9 214.8,517.4 215.3,521.9 215.7,526.8 216.2,529.7 216.7,529.0 217.1,524.4 217.6,518.1 218.0,513.1 218.5,512.3 218.9,516.0 219.4,522.3 219.8,528.0 220.3,530.0 220.7,527.8 221.2,522.8 221.6,517.6 222.1,514.8 222.5,515.1 223.0,518.0 223.4,521.8 223.9,525.1 224.3,526.8 224.8,526.5 225.2,524.2 225.7,520.7 226.2,517.1 226.6,515.2 227.1,515.9 227.5,519.5 228.0,524.4 228.4,528.2 228.9,528.5 229.3,524.9 229.8,519.1 230.2,514.4 230.7,513.3 231.1,516.4 231.6,522.0 232.0,526.6 232.5,527.8 232.9,524.9 233.4,519.6 233.8,514.7 234.3,512.5 234.8,513.4 235.2,516.3 235.7,519.1 236.1,520.2 236.6,518.7 237.0,515.2 237.5,510.6 237.9,506.2 238.4,503.1 238.8,502.0 239.3,502.7 239.7,504.3 240.2,505.1 240.6,503.7 241.1,499.7 241.5,494.3 242.0,490.1 242.4,489.4 242.9,492.9 243.3,499.3 243.8,505.6 244.3,509.3 244.7,510.0 245.2,509.2 245.6,509.9 246.1,514.3 246.5,522.4 247.0,531.9 247.4,539.6 247.9,543.3 248.3,542.6 248.8,539.2 249.2,535.5 249.7,532.9 250.1,531.6 250.6,530.4 251.0,527.9 251.5,523.3 251.9,516.8 252.4,509.9 252.8,504.1 253.3,501.1 253.8,501.7 254.2,505.9 254.7,512.4 255.1,519.5 255.6,525.1 256.0,528.4 256.5,529.8 256.9,530.4 257.4,531.8 257.8,533.9 258.3,535.5 258.7,534.4 259.2,529.2 259.6,520.5 260.1,511.0 260.5,504.3 261.0,502.8 261.4,506.6 261.9,513.2 262.4,519.7 262.8,523.9 263.3,525.8 263.7,526.7 264.2,528.4 264.6,531.1 265.1,533.4 265.5,533.2 266.0,529.2 266.4,521.9 266.9,513.7 267.3,507.4 267.8,505.3 268.2,507.8 268.7,513.7 269.1,520.9 269.6,527.1 270.0,530.9 270.5,532.1 270.9,531.0 271.4,528.5 271.9,525.5 272.3,522.5 272.8,519.4 273.2,516.2 273.7,513.0 274.1,510.7 274.6,510.7 275.0,514.1 275.5,520.7 275.9,528.5 276.4,534.7 276.8,536.3 277.3,532.5 277.7,524.9 278.2,516.7 278.6,511.4 279.1,510.4 279.5,513.1 280.0,517.1 280.5,520.5 280.9,522.5 281.4,524.0 281.8,525.9 282.3,528.4 282.7,530.1 283.2,529.0 283.6,524.4 284.1,517.4 284.5,511.0 285.0,508.3 285.4,510.8 285.9,517.5 286.3,525.6 286.8,531.5 287.2,533.2 287.7,530.5 288.1,525.1 288.6,519.5 289.1,515.4 289.5,513.7 290.0,514.3 290.4,516.5 290.9,519.4 291.3,522.5 291.8,525.3 292.2,527.4 292.7,528.2 293.1,527.2 293.6,524.4 294.0,520.0 294.5,515.3 294.9,512.2 295.4,512.3 295.8,516.1 296.3,522.6 296.7,529.1 297.2,532.7 297.6,531.4 298.1,525.7 298.6,518.2 299.0,512.6 299.5,511.2 299.9,514.3 300.4,519.9 300.8,525.0 301.3,527.5 301.7,527.3 302.2,525.4 302.6,523.3 303.1,521.6 303.5,519.9 304.0,518.0 304.4,516.1 304.9,515.6 305.3,517.6 305.8,522.1 306.2,527.5 306.7,530.9 307.2,530.1 307.6,525.1 308.1,518.2 308.5,513.0 309.0,512.3 309.4,516.6 309.9,523.6 310.3,529.9 310.8,532.9 311.2,531.7 311.7,527.7 312.1,523.3 312.6,520.7 313.0,521.0 313.5,524.0 313.9,528.4 314.4,532.9 314.8,536.6 315.3,538.9 315.7,539.8 316.2,539.4 316.7,538.3 317.1,537.2 317.6,536.9 318.0,538.1 318.5,541.1 318.9,545.3 319.4,549.3 319.8,551.5 320.3,550.3 320.7,545.6 321.2,538.6 321.6,531.8 322.1,527.5 322.5,526.7 323.0,528.5 323.4,530.1 323.9,528.7 324.3,522.7 324.8,513.5 325.2,504.2 325.7,498.2 326.2,497.4 326.6,501.1 327.1,506.7 327.5,511.6 328.0,514.2 328.4,515.0 328.9,515.7 329.3,517.8 329.8,521.5 330.2,526.3 330.7,531.0 331.1,534.9 331.6,537.8 332.0,539.4 332.5,539.1 332.9,536.0 333.4,529.9 333.8,521.7 334.3,513.7 334.8,508.6 335.2,507.7 335.7,510.2 336.1,513.6 336.6,515.3 337.0,514.3 337.5,512.1 337.9,511.4 338.4,514.7 338.8,522.2 339.3,531.6 339.7,539.1 340.2,541.8 340.6,538.7 341.1,531.5 341.5,523.3 342.0,516.7 342.4,513.1 342.9,512.3 343.4,512.9 343.8,513.6 344.3,513.8 344.7,514.0 345.2,514.9 345.6,517.4 346.1,521.4 346.5,526.3 347.0,531.1 347.4,534.5 347.9,535.3 348.3,532.9 348.8,527.7 349.2,520.6 349.7,513.6 350.1,508.4 350.6,506.7 351.0,508.8 351.5,514.1 351.9,520.6 352.4,526.0 352.9,528.9 353.3,529.0 353.8,527.5 354.2,526.2 354.7,526.0 355.1,526.5 355.6,526.1 356.0,523.2 356.5,517.5 356.9,510.9 357.4,506.5 357.8,507.2 358.3,513.5 358.7,523.1 359.2,532.0 359.6,536.5 360.1,535.3 360.5,529.6 361.0,522.7 361.4,517.4 361.9,515.1 362.4,514.9 362.8,515.6 363.3,516.1 363.7,516.6 364.2,518.0 364.6,520.7 365.1,524.4 365.5,528.0 366.0,530.1 366.4,529.8 366.9,527.2 367.3,523.2 367.8,518.5 368.2,514.2 368.7,511.2 369.1,510.7 369.6,513.6 370.0,519.6 370.5,527.0 371.0,532.9 371.4,534.6 371.9,531.3 372.3,524.2 372.8,516.6 373.2,511.9 373.7,511.7 374.1,515.1 374.6,519.5 375.0,522.7 375.5,523.6 375.9,523.4 376.4,523.6 376.8,525.0 377.3,527.0 377.7,527.4 378.2,525.0 378.6,519.7 379.1,513.8 379.6,510.2 380.0,511.1 380.5,516.6 380.9,524.4 381.4,531.0 381.8,533.5 382.3,531.0 382.7,524.8 383.2,517.8 383.6,512.7 384.1,511.2 384.5,513.2 385.0,517.3 385.4,521.8 385.9,525.0 386.3,526.1 386.8,525.3 387.2,523.1 387.7,520.2 388.1,517.1 388.6,514.2 389.1,512.1 389.5,511.1 390.0,511.2 390.4,512.3 390.9,514.2 391.3,515.9 391.8,516.7 392.2,515.8 392.7,512.6 393.1,507.5 393.6,501.4 394.0,496.2 394.5,493.6 394.9,494.9 395.4,499.6 395.8,505.5 396.3,509.7 396.7,509.7 397.2,505.4 397.7,498.7 398.1,493.5 398.6,492.8 399.0,497.7 399.5,506.4 399.9,515.4 400.4,521.8 400.8,524.5 401.3,524.8 401.7,525.0 402.2,526.7 402.6,529.7 403.1,532.8 403.5,534.5 404.0,534.9 404.4,534.9 404.9,535.9 405.3,537.8 405.8,539.2 406.2,537.7 406.7,531.9 407.2,522.8 407.6,513.0 408.1,506.1 408.5,504.0 409.0,506.4 409.4,511.0 409.9,514.8 410.3,515.9 410.8,514.4 411.2,511.9 411.7,510.5 412.1,511.9 412.6,516.7 413.0,523.9 413.5,531.8 413.9,538.3 414.4,541.6 414.8,540.6 415.3,535.6 415.8,528.5 416.2,521.5 416.7,516.6 417.1,514.6 417.6,514.5 418.0,514.9 418.5,514.4 418.9,513.0 419.4,511.6 419.8,511.6 420.3,513.5 420.7,517.1 421.2,521.3 421.6,525.2 422.1,528.8 422.5,532.2 423.0,535.1 423.4,536.5 423.9,534.8 424.3,529.3 424.8,520.7 425.3,511.7 425.7,505.6 426.2,504.9 426.6,509.4 427.1,516.3 427.5,522.2 428.0,524.4 428.4,523.2 428.9,520.9 429.3,520.4 429.8,523.3 430.2,528.9 430.7,534.0 431.1,535.7 431.6,532.2 432.0,524.5 432.5,515.5 432.9,508.5 433.4,505.8 433.9,507.5 434.3,512.3 434.8,518.1 435.2,523.5 435.7,527.6 436.1,530.2 436.6,531.3 437.0,530.7 437.5,528.4 437.9,524.7 438.4,520.7 438.8,517.4 439.3,515.6 439.7,515.3 440.2,515.9 440.6,516.4 441.1,516.7 441.5,517.2 442.0,519.0 442.4,522.6 442.9,527.5 443.4,532.1 443.8,534.2 444.3,532.2 444.7,526.3 445.2,518.2 445.6,510.7 446.1,506.7 446.5,507.5 447.0,512.8 447.4,520.6 447.9,527.8 448.3,531.9 448.8,531.9 449.2,528.5 449.7,523.9 450.1,520.3 450.6,519.0 451.0,519.5 451.5,520.3 451.9,519.7 452.4,517.4 452.9,514.7 453.3,513.8 453.8,516.5 454.2,522.4 454.7,529.1 455.1,533.5 455.6,533.3 456.0,528.5 456.5,521.4 456.9,515.0 457.4,511.4 457.8,511.3 458.3,513.9 458.7,517.7 459.2,522.0 459.6,526.2 460.1,529.8 460.5,531.6 461.0,530.7 461.5,526.6 461.9,520.6 462.4,515.2 462.8,512.9 463.3,514.9 463.7,519.9 464.2,525.3 464.6,528.4 465.1,528.8 465.5,527.6 466.0,527.1 466.4,528.6 466.9,531.3 467.3,533.1 467.8,532.1 468.2,528.2 468.7,523.7 469.1,521.8 469.6,524.9" fill="none" stroke="#ffffff" stroke-width="0.95" stroke-linejoin="round"/><g font-family="Liberation Sans" font-size="13" fill="#b8b8b8"><text x="13" y="456.3">20</text><text x="13" y="535.7">10</text><text x="13" y="615.1">0</text><text x="12" y="694.3">-10</text><text x="12" y="711">0</text><text x="192" y="711">200</text><text x="373" y="711">400</text></g></svg></div><div class="a" style="left:482px;top:363px;width:473px;height:359px;overflow:hidden"><svg style="left:-482px;top:-363px" width="1000" height="749"><path d="M482 379.6 H955 M482 488.1 H955 M482 596.6 H955 M482 705.2 H955 " stroke="#6a6a6a" stroke-width="1.2" stroke-dasharray="2.4 2.4" fill="none"/><path d="M574.6 363 V722 M802.8 363 V722 " stroke="#5a5a5a" stroke-width="1.2" stroke-dasharray="2.4 2.27" fill="none"/><path d="M482.5 363 V722" stroke="#505050" stroke-width="1"/><polyline points="481.08,523.6 482.04,523.0 482.99,522.3 483.95,521.6 484.90,520.8 485.86,520.0 486.81,519.1 487.77,518.1 488.72,517.1 489.68,516.0 490.63,514.9 491.59,513.6 492.54,512.3 493.50,510.8 494.45,509.2 495.41,507.5 496.36,505.6 497.32,503.4 498.27,501.0 499.23,498.4 500.18,495.3 501.14,491.7 502.09,487.4 503.05,482.1 504.00,475.1 504.96,465.0 505.91,446.8 506.87,405.5 507.82,454.0 508.78,468.8 509.73,477.9 510.69,484.5 511.64,489.6 512.60,493.8 513.55,497.4 514.51,500.5 515.46,503.3 516.42,505.8 517.37,508.0 518.33,510.0 519.28,511.9 520.24,513.6 521.19,515.2 522.15,516.6 523.10,518.0 524.06,519.3 525.01,520.5 525.97,521.7 526.92,522.7 527.88,523.7 528.83,524.7 529.79,525.6 530.74,526.4 531.70,527.2 532.65,528.0 533.61,528.7 534.56,529.4 535.52,530.0 536.47,530.6 537.43,531.2 538.38,531.8 539.34,532.3 540.29,532.7 541.25,533.2 542.20,533.6 543.16,534.0 544.11,534.3 545.07,534.7 546.02,534.9 546.98,535.2 547.93,535.5 548.89,535.7 549.84,535.9 550.80,536.0 551.75,536.2 552.71,536.3 553.66,536.4 554.62,536.4 555.57,536.4 556.53,536.4 557.48,536.4 558.44,536.4 559.39,536.3 560.35,536.1 561.30,536.0 562.26,535.8 563.21,535.6 564.17,535.4 565.12,535.1 566.08,534.7 567.03,534.4 567.99,534.0 568.94,533.5 569.90,533.1 570.85,532.5 571.81,531.9 572.76,531.3 573.72,530.6 574.67,529.8 575.63,529.0 576.58,528.1 577.54,527.1 578.49,526.0 579.45,524.9 580.40,523.6 581.36,522.2 582.31,520.6 583.27,518.9 584.22,517.0 585.18,514.8 586.13,512.4 587.09,509.6 588.04,506.4 589.00,502.5 589.95,497.8 590.91,491.8 591.86,483.5 592.82,470.3 593.77,436.6 594.73,455.5 595.68,476.7 596.64,487.8 597.59,495.4 598.55,501.1 599.50,505.8 600.46,509.7 601.41,513.0 602.37,515.9 603.32,518.5 604.28,520.9 605.23,523.0 606.19,524.9 607.14,526.7 608.10,528.3 609.05,529.8 610.01,531.2 610.96,532.5 611.92,533.7 612.87,534.8 613.83,535.9 614.78,536.8 615.74,537.7 616.69,538.6 617.65,539.3 618.60,540.0 619.56,540.7 620.51,541.3 621.47,541.8 622.42,542.3 623.38,542.8 624.33,543.2 625.29,543.5 626.24,543.8 627.20,544.0 628.15,544.2 629.11,544.3 630.06,544.4 631.02,544.4 631.97,544.4 632.93,544.3 633.88,544.2 634.84,543.9 635.79,543.7 636.75,543.3 637.70,542.9 638.66,542.4 639.61,541.8 640.57,541.1 641.52,540.3 642.48,539.4 643.43,538.4 644.39,537.2 645.34,535.8 646.30,534.3 647.25,532.5 648.21,530.5 649.16,528.1 650.12,525.4 651.07,522.0 652.03,518.0 652.98,512.8 653.94,505.8 654.89,495.5 655.85,475.4 656.80,452.7 657.76,489.3 658.71,503.3 659.67,512.1 660.62,518.6 661.58,523.8 662.53,528.1 663.49,531.8 664.44,534.9 665.40,537.7 666.35,540.2 667.31,542.5 668.26,544.5 669.22,546.3 670.17,547.9 671.13,549.4 672.08,550.7 673.04,551.9 673.99,553.0 674.95,553.9 675.90,554.7 676.86,555.4 677.81,556.0 678.77,556.4 679.72,556.7 680.68,556.8 681.63,556.8 682.59,556.6 683.54,556.2 684.50,555.5 685.45,554.6 686.41,553.4 687.36,551.8 688.32,549.6 689.27,546.8 690.23,543.0 691.18,537.7 692.14,529.6 693.09,514.8 694.05,412.6 695.00,516.9 695.96,534.7 696.91,545.6 697.87,553.7 698.82,560.2 699.78,565.8 700.73,570.6 701.69,575.0 702.64,579.0 703.60,582.7 704.55,586.1 705.51,589.4 706.46,592.4 707.42,595.3 708.37,598.1 709.33,600.8 710.28,603.3 711.24,605.8 712.19,608.2 713.15,610.5 714.10,612.7 715.06,614.9 716.01,617.0 716.97,619.0 717.92,621.0 718.88,623.0 719.83,624.9 720.79,626.8 721.74,628.7 722.70,630.5 723.65,632.3 724.61,634.0 725.56,635.7 726.52,637.4 727.47,639.1 728.43,640.7 729.38,642.3 730.34,643.9 731.29,645.5 732.25,647.0 733.20,648.5 734.16,650.0 735.11,651.5 736.07,653.0 737.02,654.4 737.98,655.9 738.93,657.3 739.89,658.7 740.84,660.1 741.80,661.4 742.75,662.8 743.71,664.1 744.66,665.5 745.62,666.8 746.57,668.1 747.53,669.4 748.48,670.7 749.44,671.9 750.39,673.2 751.35,674.4 752.30,675.7 753.26,676.9 754.21,678.1 755.17,679.3 756.12,680.5 757.08,681.7 758.03,682.9 758.99,684.0 759.94,685.2 760.90,686.3 761.85,687.5 762.81,688.6 763.76,689.7 764.72,690.9 765.67,692.0 766.63,693.1 767.58,694.2 768.54,695.3 769.49,696.4 770.45,697.4 771.40,698.5 772.36,699.6 773.31,700.6 774.27,701.7 775.22,702.7 776.18,703.7 777.13,704.8 778.09,705.8 779.04,706.8 780.00,707.8 780.95,708.8 781.91,709.9 782.86,710.8 783.82,711.8 784.77,712.8 785.73,713.8 786.68,714.8 787.64,715.8 788.59,716.7 789.55,717.7 790.50,718.6 791.46,719.6 792.41,720.5 793.37,721.5 794.32,722.4 795.28,723.4 796.23,724.3 797.19,725.2 798.14,726.1 799.10,727.1 800.05,728.0 801.01,728.9 801.96,729.8 802.92,730.7 803.87,731.6 804.83,732.5 805.78,733.4 806.74,734.3 807.69,735.1 808.65,736.0 809.60,736.9 810.56,737.8 811.51,738.6 812.47,739.5 813.42,740.4 814.38,741.2 815.33,742.1 816.29,742.9 817.24,743.8 818.20,744.6 819.15,745.5 820.11,746.3 821.06,747.1 822.02,748.0 822.97,748.8 823.93,749.6 824.88,750.4 825.84,751.3 826.79,752.1 827.75,752.9 828.70,753.7 829.66,754.5 830.61,755.3 831.57,756.1 832.52,756.9 833.48,757.7 834.43,758.5 835.39,759.3 836.34,760.0 837.30,760.0 838.25,760.0 839.21,760.0 840.16,760.0 841.12,760.0 842.07,760.0 843.03,760.0 843.98,760.0 844.94,760.0 845.89,760.0 846.85,760.0 847.80,760.0 848.76,760.0 849.71,760.0 850.67,760.0 851.62,760.0 852.58,760.0 853.53,760.0 854.49,760.0 855.44,760.0 856.40,760.0 857.35,760.0 858.31,760.0 859.26,760.0 860.22,760.0 861.17,760.0 862.13,760.0 863.08,760.0 864.04,760.0 864.99,760.0 865.95,760.0 866.90,760.0 867.86,760.0 868.81,760.0 869.77,760.0 870.72,760.0 871.68,760.0 872.63,760.0 873.59,760.0 874.54,760.0 875.50,760.0 876.45,760.0 877.41,760.0 878.36,760.0 879.32,760.0 880.27,760.0 881.23,760.0 882.18,760.0 883.14,760.0 884.09,760.0 885.05,760.0 886.00,760.0 886.96,760.0 887.91,760.0 888.87,760.0 889.82,760.0 890.78,760.0 891.73,760.0 892.69,760.0 893.64,760.0 894.60,760.0 895.55,760.0 896.51,760.0 897.46,760.0 898.42,760.0 899.37,760.0 900.33,760.0 901.28,760.0 902.24,760.0 903.19,760.0 904.15,760.0 905.10,760.0 906.06,760.0 907.01,760.0 907.97,760.0 908.92,760.0 909.88,760.0 910.83,760.0 911.79,760.0 912.74,760.0 913.70,760.0 914.65,760.0 915.61,760.0 916.56,760.0 917.52,760.0 918.47,760.0 919.43,760.0 920.38,760.0 921.34,760.0 922.29,760.0 923.25,760.0 924.20,760.0 925.16,760.0 926.11,760.0 927.07,760.0 928.02,760.0 928.98,760.0 929.93,760.0 930.89,760.0 931.84,760.0 932.80,760.0 933.75,760.0 934.71,760.0 935.66,760.0 936.62,760.0 937.57,760.0 938.53,760.0 939.48,760.0 940.44,760.0 941.39,760.0 942.35,760.0 943.30,760.0 944.26,760.0 945.21,760.0 946.17,760.0 947.12,760.0 948.08,760.0 949.03,760.0 949.99,760.0 950.94,760.0 951.90,760.0 952.85,760.0 953.81,760.0 954.76,760.0 955.72,760.0 956.67,760.0" fill="none" stroke="#80f040" stroke-width="1.0" stroke-linejoin="round"/><polyline points="481.08,480.2 482.04,479.5 482.99,478.7 483.95,477.9 484.90,477.1 485.86,476.2 486.81,475.3 487.77,474.3 488.72,473.2 489.68,472.1 490.63,470.8 491.59,469.5 492.54,468.1 493.50,466.6 494.45,464.9 495.41,463.1 496.36,461.1 497.32,458.9 498.27,456.5 499.23,453.8 500.18,450.6 501.14,447.0 502.09,442.6 503.05,437.2 504.00,430.2 504.96,420.1 505.91,401.8 506.87,360.4 507.82,408.8 508.78,423.6 509.73,432.6 510.69,439.1 511.64,444.2 512.60,448.4 513.55,451.9 514.51,455.0 515.46,457.7 516.42,460.1 517.37,462.2 518.33,464.2 519.28,466.0 520.24,467.6 521.19,469.2 522.15,470.6 523.10,471.9 524.06,473.1 525.01,474.3 525.97,475.4 526.92,476.4 527.88,477.3 528.83,478.2 529.79,479.1 530.74,479.8 531.70,480.6 532.65,481.3 533.61,481.9 534.56,482.6 535.52,483.1 536.47,483.7 537.43,484.2 538.38,484.7 539.34,485.1 540.29,485.5 541.25,485.9 542.20,486.3 543.16,486.6 544.11,486.9 545.07,487.2 546.02,487.4 546.98,487.6 547.93,487.8 548.89,488.0 549.84,488.1 550.80,488.2 551.75,488.3 552.71,488.3 553.66,488.4 554.62,488.4 555.57,488.3 556.53,488.3 557.48,488.2 558.44,488.1 559.39,487.9 560.35,487.7 561.30,487.5 562.26,487.3 563.21,487.0 564.17,486.7 565.12,486.4 566.08,486.0 567.03,485.6 567.99,485.1 568.94,484.6 569.90,484.1 570.85,483.5 571.81,482.8 572.76,482.1 573.72,481.4 574.67,480.6 575.63,479.7 576.58,478.7 577.54,477.7 578.49,476.6 579.45,475.3 580.40,474.0 581.36,472.5 582.31,470.9 583.27,469.2 584.22,467.2 585.18,465.0 586.13,462.5 587.09,459.7 588.04,456.4 589.00,452.5 589.95,447.7 590.91,441.6 591.86,433.3 592.82,420.0 593.77,386.2 594.73,405.1 595.68,426.3 596.64,437.3 597.59,444.8 598.55,450.5 599.50,455.1 600.46,458.9 601.41,462.2 602.37,465.1 603.32,467.6 604.28,469.9 605.23,472.0 606.19,473.9 607.14,475.6 608.10,477.1 609.05,478.6 610.01,479.9 610.96,481.2 611.92,482.3 612.87,483.4 613.83,484.4 614.78,485.3 615.74,486.1 616.69,486.9 617.65,487.6 618.60,488.3 619.56,488.9 620.51,489.4 621.47,489.9 622.42,490.3 623.38,490.7 624.33,491.1 625.29,491.3 626.24,491.6 627.20,491.8 628.15,491.9 629.11,492.0 630.06,492.0 631.02,492.0 631.97,491.9 632.93,491.7 633.88,491.5 634.84,491.3 635.79,490.9 636.75,490.5 637.70,490.1 638.66,489.5 639.61,488.8 640.57,488.1 641.52,487.3 642.48,486.3 643.43,485.2 644.39,484.0 645.34,482.6 646.30,481.0 647.25,479.2 648.21,477.1 649.16,474.7 650.12,471.9 651.07,468.5 652.03,464.4 652.98,459.1 653.94,452.1 654.89,441.7 655.85,421.6 656.80,398.8 657.76,435.4 658.71,449.3 659.67,458.1 660.62,464.6 661.58,469.7 662.53,473.9 663.49,477.5 664.44,480.7 665.40,483.4 666.35,485.8 667.31,488.0 668.26,490.0 669.22,491.7 670.17,493.3 671.13,494.8 672.08,496.0 673.04,497.2 673.99,498.2 674.95,499.1 675.90,499.8 676.86,500.5 677.81,501.0 678.77,501.3 679.72,501.6 680.68,501.7 681.63,501.6 682.59,501.3 683.54,500.9 684.50,500.2 685.45,499.2 686.41,497.9 687.36,496.3 688.32,494.1 689.27,491.2 690.23,487.4 691.18,482.0 692.14,473.8 693.09,459.0 694.05,356.7 695.00,461.0 695.96,478.7 696.91,489.6 697.87,497.6 698.82,504.1 699.78,509.6 700.73,514.5 701.69,518.8 702.64,522.7 703.60,526.4 704.55,529.8 705.51,532.9 706.46,535.9 707.42,538.8 708.37,541.5 709.33,544.1 710.28,546.6 711.24,549.0 712.19,551.4 713.15,553.6 714.10,555.8 715.06,557.9 716.01,560.0 716.97,562.0 717.92,564.0 718.88,565.9 719.83,567.8 720.79,569.6 721.74,571.4 722.70,573.2 723.65,574.9 724.61,576.6 725.56,578.3 726.52,579.9 727.47,581.5 728.43,583.1 729.38,584.7 730.34,586.2 731.29,587.7 732.25,589.2 733.20,590.7 734.16,592.1 735.11,593.6 736.07,595.0 737.02,596.4 737.98,597.8 738.93,599.1 739.89,600.5 740.84,601.8 741.80,603.2 742.75,604.5 743.71,605.8 744.66,607.0 745.62,608.3 746.57,609.6 747.53,610.8 748.48,612.0 749.44,613.3 750.39,614.5 751.35,615.7 752.30,616.9 753.26,618.0 754.21,619.2 755.17,620.4 756.12,621.5 757.08,622.7 758.03,623.8 758.99,624.9 759.94,626.0 760.90,627.1 761.85,628.2 762.81,629.3 763.76,630.4 764.72,631.5 765.67,632.5 766.63,633.6 767.58,634.6 768.54,635.7 769.49,636.7 770.45,637.7 771.40,638.8 772.36,639.8 773.31,640.8 774.27,641.8 775.22,642.8 776.18,643.8 777.13,644.8 778.09,645.7 779.04,646.7 780.00,647.7 780.95,648.6 781.91,649.6 782.86,650.6 783.82,651.5 784.77,652.4 785.73,653.4 786.68,654.3 787.64,655.2 788.59,656.2 789.55,657.1 790.50,658.0 791.46,658.9 792.41,659.8 793.37,660.7 794.32,661.6 795.28,662.5 796.23,663.4 797.19,664.2 798.14,665.1 799.10,666.0 800.05,666.9 801.01,667.7 801.96,668.6 802.92,669.4 803.87,670.3 804.83,671.1 805.78,672.0 806.74,672.8 807.69,673.7 808.65,674.5 809.60,675.3 810.56,676.2 811.51,677.0 812.47,677.8 813.42,678.6 814.38,679.4 815.33,680.2 816.29,681.0 817.24,681.8 818.20,682.6 819.15,683.4 820.11,684.2 821.06,685.0 822.02,685.8 822.97,686.6 823.93,687.4 824.88,688.2 825.84,688.9 826.79,689.7 827.75,690.5 828.70,691.2 829.66,692.0 830.61,692.8 831.57,693.5 832.52,694.3 833.48,695.0 834.43,695.8 835.39,696.5 836.34,697.3 837.30,698.0 838.25,698.8 839.21,699.5 840.16,700.2 841.12,701.0 842.07,701.7 843.03,702.4 843.98,703.2 844.94,703.9 845.89,704.6 846.85,705.3 847.80,706.0 848.76,706.8 849.71,707.5 850.67,708.2 851.62,708.9 852.58,709.6 853.53,710.3 854.49,711.0 855.44,711.7 856.40,712.4 857.35,713.1 858.31,713.8 859.26,714.5 860.22,715.2 861.17,715.8 862.13,716.5 863.08,717.2 864.04,717.9 864.99,718.6 865.95,719.2 866.90,719.9 867.86,720.6 868.81,721.3 869.77,721.9 870.72,722.6 871.68,723.3 872.63,723.9 873.59,724.6 874.54,725.2 875.50,725.9 876.45,726.6 877.41,727.2 878.36,727.9 879.32,728.5 880.27,729.2 881.23,729.8 882.18,730.5 883.14,731.1 884.09,731.7 885.05,732.4 886.00,733.0 886.96,733.7 887.91,734.3 888.87,734.9 889.82,735.6 890.78,736.2 891.73,736.8 892.69,737.5 893.64,738.1 894.60,738.7 895.55,739.3 896.51,740.0 897.46,740.6 898.42,741.2 899.37,741.8 900.33,742.4 901.28,743.0 902.24,743.7 903.19,744.3 904.15,744.9 905.10,745.5 906.06,746.1 907.01,746.7 907.97,747.3 908.92,747.9 909.88,748.5 910.83,749.1 911.79,749.7 912.74,750.3 913.70,750.9 914.65,751.5 915.61,752.1 916.56,752.7 917.52,753.3 918.47,753.9 919.43,754.5 920.38,755.0 921.34,755.6 922.29,756.2 923.25,756.8 924.20,757.4 925.16,758.0 926.11,758.5 927.07,759.1 928.02,759.7 928.98,760.0 929.93,760.0 930.89,760.0 931.84,760.0 932.80,760.0 933.75,760.0 934.71,760.0 935.66,760.0 936.62,760.0 937.57,760.0 938.53,760.0 939.48,760.0 940.44,760.0 941.39,760.0 942.35,760.0 943.30,760.0 944.26,760.0 945.21,760.0 946.17,760.0 947.12,760.0 948.08,760.0 949.03,760.0 949.99,760.0 950.94,760.0 951.90,760.0 952.85,760.0 953.81,760.0 954.76,760.0 955.72,760.0 956.67,760.0" fill="none" stroke="#80e8f8" stroke-width="1.0" stroke-linejoin="round"/><polyline points="481.08,523.5 482.04,520.9 482.99,518.5 483.95,516.1 484.90,513.8 485.86,511.5 486.81,509.3 487.77,507.0 488.72,504.8 489.68,502.5 490.63,500.2 491.59,497.9 492.54,495.5 493.50,493.0 494.45,490.5 495.41,487.8 496.36,485.0 497.32,482.0 498.27,478.8 499.23,475.3 500.18,471.5 501.14,467.1 502.09,462.1 503.05,456.1 504.00,448.4 504.96,437.7 505.91,418.9 506.87,376.9 507.82,424.7 508.78,439.0 509.73,447.5 510.69,453.5 511.64,458.1 512.60,461.7 513.55,464.8 514.51,467.4 515.46,469.6 516.42,471.6 517.37,473.3 518.33,474.9 519.28,476.3 520.24,477.6 521.19,478.7 522.15,479.7 523.10,480.7 524.06,481.6 525.01,482.4 525.97,483.1 526.92,483.8 527.88,484.4 528.83,485.0 529.79,485.5 530.74,486.0 531.70,486.5 532.65,486.9 533.61,487.3 534.56,487.6 535.52,488.0 536.47,488.3 537.43,488.5 538.38,488.8 539.34,489.0 540.29,489.2 541.25,489.3 542.20,489.5 543.16,489.6 544.11,489.7 545.07,489.7 546.02,489.8 546.98,489.8 547.93,489.8 548.89,489.8 549.84,489.8 550.80,489.7 551.75,489.6 552.71,489.5 553.66,489.4 554.62,489.3 555.57,489.1 556.53,488.9 557.48,488.7 558.44,488.5 559.39,488.2 560.35,487.9 561.30,487.6 562.26,487.3 563.21,486.9 564.17,486.5 565.12,486.1 566.08,485.7 567.03,485.2 567.99,484.7 568.94,484.1 569.90,483.5 570.85,482.9 571.81,482.2 572.76,481.5 573.72,480.7 574.67,479.8 575.63,478.9 576.58,478.0 577.54,476.9 578.49,475.8 579.45,474.6 580.40,473.3 581.36,471.8 582.31,470.3 583.27,468.5 584.22,466.6 585.18,464.5 586.13,462.0 587.09,459.3 588.04,456.0 589.00,452.2 589.95,447.5 590.91,441.5 591.86,433.3 592.82,420.2 593.77,386.5 594.73,405.5 595.68,426.8 596.64,438.0 597.59,445.7 598.55,451.6 599.50,456.3 600.46,460.4 601.41,463.9 602.37,466.9 603.32,469.7 604.28,472.3 605.23,474.6 606.19,476.7 607.14,478.7 608.10,480.6 609.05,482.3 610.01,484.0 610.96,485.6 611.92,487.1 612.87,488.5 613.83,489.9 614.78,491.3 615.74,492.5 616.69,493.8 617.65,495.0 618.60,496.2 619.56,497.3 620.51,498.4 621.47,499.5 622.42,500.6 623.38,501.7 624.33,502.7 625.29,503.7 626.24,504.8 627.20,505.8 628.15,506.8 629.11,507.9 630.06,508.9 631.02,510.0 631.97,511.1 632.93,512.3 633.88,513.5 634.84,514.7 635.79,516.0 636.75,517.5 637.70,519.0 638.66,520.7 639.61,522.6 640.57,524.8 641.52,527.4 642.48,530.6 643.43,534.7 644.39,540.2 645.34,548.5 646.30,564.1 647.25,615.9 648.21,555.4 649.16,537.5 650.12,525.2 651.07,515.0 652.03,505.5 652.98,495.8 653.94,485.0 654.89,471.2 655.85,448.2 656.80,422.7 657.76,456.8 658.71,468.5 659.67,475.2 660.62,479.7 661.58,483.0 662.53,485.5 663.49,487.4 664.44,489.0 665.40,490.3 666.35,491.3 667.31,492.1 668.26,492.8 669.22,493.3 670.17,493.6 671.13,493.9 672.08,494.0 673.04,494.1 673.99,494.0 674.95,493.9 675.90,493.6 676.86,493.3 677.81,492.8 678.77,492.3 679.72,491.6 680.68,490.8 681.63,489.8 682.59,488.7 683.54,487.4 684.50,485.9 685.45,484.2 686.41,482.1 687.36,479.6 688.32,476.7 689.27,473.1 690.23,468.5 691.18,462.4 692.14,453.5 693.09,438.0 694.05,340.0 695.00,438.6 695.96,455.7 696.91,465.9 697.87,473.3 698.82,479.2 699.78,484.1 700.73,488.3 701.69,492.0 702.64,495.3 703.60,498.4 704.55,501.2 705.51,503.8 706.46,506.2 707.42,508.5 708.37,510.6 709.33,512.7 710.28,514.6 711.24,516.5 712.19,518.3 713.15,520.0 714.10,521.7 715.06,523.3 716.01,524.8 716.97,526.3 717.92,527.8 718.88,529.2 719.83,530.5 720.79,531.9 721.74,533.2 722.70,534.5 723.65,535.7 724.61,536.9 725.56,538.1 726.52,539.3 727.47,540.4 728.43,541.6 729.38,542.7 730.34,543.7 731.29,544.8 732.25,545.9 733.20,546.9 734.16,547.9 735.11,548.9 736.07,549.9 737.02,550.8 737.98,551.8 738.93,552.7 739.89,553.7 740.84,554.6 741.80,555.5 742.75,556.4 743.71,557.3 744.66,558.1 745.62,559.0 746.57,559.8 747.53,560.7 748.48,561.5 749.44,562.3 750.39,563.2 751.35,564.0 752.30,564.8 753.26,565.5 754.21,566.3 755.17,567.1 756.12,567.9 757.08,568.6 758.03,569.4 758.99,570.1 759.94,570.9 760.90,571.6 761.85,572.3 762.81,573.0 763.76,573.8 764.72,574.5 765.67,575.2 766.63,575.9 767.58,576.6 768.54,577.3 769.49,577.9 770.45,578.6 771.40,579.3 772.36,580.0 773.31,580.6 774.27,581.3 775.22,581.9 776.18,582.6 777.13,583.2 778.09,583.9 779.04,584.5 780.00,585.1 780.95,585.7 781.91,586.4 782.86,587.0 783.82,587.6 784.77,588.2 785.73,588.8 786.68,589.4 787.64,590.0 788.59,590.6 789.55,591.2 790.50,591.8 791.46,592.4 792.41,593.0 793.37,593.6 794.32,594.1 795.28,594.7 796.23,595.3 797.19,595.9 798.14,596.4 799.10,597.0 800.05,597.5 801.01,598.1 801.96,598.7 802.92,599.2 803.87,599.8 804.83,600.3 805.78,600.8 806.74,601.4 807.69,601.9 808.65,602.5 809.60,603.0 810.56,603.5 811.51,604.1 812.47,604.6 813.42,605.1 814.38,605.6 815.33,606.1 816.29,606.7 817.24,607.2 818.20,607.7 819.15,608.2 820.11,608.7 821.06,609.2 822.02,609.7 822.97,610.2 823.93,610.7 824.88,611.2 825.84,611.7 826.79,612.2 827.75,612.7 828.70,613.2 829.66,613.7 830.61,614.1 831.57,614.6 832.52,615.1 833.48,615.6 834.43,616.1 835.39,616.5 836.34,617.0 837.30,617.5 838.25,618.0 839.21,618.4 840.16,618.9 841.12,619.4 842.07,619.8 843.03,620.3 843.98,620.8 844.94,621.2 845.89,621.7 846.85,622.1 847.80,622.6 848.76,623.0 849.71,623.5 850.67,623.9 851.62,624.4 852.58,624.8 853.53,625.3 854.49,625.7 855.44,626.2 856.40,626.6 857.35,627.1 858.31,627.5 859.26,627.9 860.22,628.4 861.17,628.8 862.13,629.2 863.08,629.7 864.04,630.1 864.99,630.5 865.95,631.0 866.90,631.4 867.86,631.8 868.81,632.2 869.77,632.7 870.72,633.1 871.68,633.5 872.63,633.9 873.59,634.3 874.54,634.7 875.50,635.2 876.45,635.6 877.41,636.0 878.36,636.4 879.32,636.8 880.27,637.2 881.23,637.6 882.18,638.0 883.14,638.4 884.09,638.9 885.05,639.3 886.00,639.7 886.96,640.1 887.91,640.5 888.87,640.9 889.82,641.3 890.78,641.7 891.73,642.1 892.69,642.5 893.64,642.8 894.60,643.2 895.55,643.6 896.51,644.0 897.46,644.4 898.42,644.8 899.37,645.2 900.33,645.6 901.28,646.0 902.24,646.4 903.19,646.7 904.15,647.1 905.10,647.5 906.06,647.9 907.01,648.3 907.97,648.7 908.92,649.0 909.88,649.4 910.83,649.8 911.79,650.2 912.74,650.5 913.70,650.9 914.65,651.3 915.61,651.7 916.56,652.0 917.52,652.4 918.47,652.8 919.43,653.2 920.38,653.5 921.34,653.9 922.29,654.3 923.25,654.6 924.20,655.0 925.16,655.4 926.11,655.7 927.07,656.1 928.02,656.4 928.98,656.8 929.93,657.2 930.89,657.5 931.84,657.9 932.80,658.2 933.75,658.6 934.71,659.0 935.66,659.3 936.62,659.7 937.57,660.0 938.53,660.4 939.48,660.7 940.44,661.1 941.39,661.4 942.35,661.8 943.30,662.1 944.26,662.5 945.21,662.8 946.17,663.2 947.12,663.5 948.08,663.9 949.03,664.2 949.99,664.6 950.94,664.9 951.90,665.3 952.85,665.6 953.81,666.0 954.76,666.3 955.72,666.6 956.67,667.0" fill="none" stroke="#f8f848" stroke-width="1.0" stroke-linejoin="round"/><polyline points="481.08,523.8 482.04,526.4 482.99,529.5 483.95,533.3 484.90,538.2 485.86,545.0 486.81,555.5 487.77,577.6 488.72,585.9 489.68,555.3 490.63,541.4 491.59,531.8 492.54,524.4 493.50,518.0 494.45,512.3 495.41,507.1 496.36,502.2 497.32,497.3 498.27,492.5 499.23,487.7 500.18,482.6 501.14,477.1 502.09,471.1 503.05,464.1 504.00,455.7 504.96,444.2 505.91,424.7 506.87,382.1 507.82,429.4 508.78,443.1 509.73,451.1 510.69,456.6 511.64,460.7 512.60,464.0 513.55,466.7 514.51,469.0 515.46,470.9 516.42,472.6 517.37,474.0 518.33,475.3 519.28,476.5 520.24,477.5 521.19,478.5 522.15,479.3 523.10,480.1 524.06,480.8 525.01,481.4 525.97,482.0 526.92,482.6 527.88,483.1 528.83,483.6 529.79,484.0 530.74,484.4 531.70,484.8 532.65,485.1 533.61,485.5 534.56,485.7 535.52,486.0 536.47,486.3 537.43,486.5 538.38,486.7 539.34,486.9 540.29,487.1 541.25,487.3 542.20,487.4 543.16,487.6 544.11,487.7 545.07,487.8 546.02,487.9 546.98,488.0 547.93,488.0 548.89,488.1 549.84,488.1 550.80,488.1 551.75,488.1 552.71,488.1 553.66,488.1 554.62,488.1 555.57,488.0 556.53,488.0 557.48,487.9 558.44,487.8 559.39,487.7 560.35,487.6 561.30,487.5 562.26,487.3 563.21,487.1 564.17,487.0 565.12,486.8 566.08,486.5 567.03,486.3 567.99,486.0 568.94,485.7 569.90,485.4 570.85,485.0 571.81,484.7 572.76,484.2 573.72,483.8 574.67,483.3 575.63,482.8 576.58,482.2 577.54,481.5 578.49,480.8 579.45,480.1 580.40,479.2 581.36,478.3 582.31,477.2 583.27,476.0 584.22,474.6 585.18,473.1 586.13,471.3 587.09,469.2 588.04,466.7 589.00,463.6 589.95,459.7 590.91,454.6 591.86,447.3 592.82,435.1 593.77,402.5 594.73,422.7 595.68,445.2 596.64,457.8 597.59,466.9 598.55,474.4 599.50,480.9 600.46,487.0 601.41,492.7 602.37,498.4 603.32,504.2 604.28,510.3 605.23,517.0 606.19,524.8 607.14,534.4 608.10,548.3 609.05,577.6 610.01,573.0 610.96,550.1 611.92,539.4 612.87,532.6 613.83,527.7 614.78,523.8 615.74,520.7 616.69,518.1 617.65,515.8 618.60,513.8 619.56,512.0 620.51,510.3 621.47,508.8 622.42,507.4 623.38,506.1 624.33,504.9 625.29,503.7 626.24,502.5 627.20,501.4 628.15,500.3 629.11,499.3 630.06,498.2 631.02,497.1 631.97,496.1 632.93,495.0 633.88,494.0 634.84,492.9 635.79,491.8 636.75,490.6 637.70,489.4 638.66,488.2 639.61,487.0 640.57,485.6 641.52,484.2 642.48,482.8 643.43,481.2 644.39,479.5 645.34,477.7 646.30,475.8 647.25,473.6 648.21,471.2 649.16,468.5 650.12,465.5 651.07,461.9 652.03,457.6 652.98,452.2 653.94,445.1 654.89,434.7 655.85,414.6 656.80,391.8 657.76,428.4 658.71,442.4 659.67,451.4 660.62,458.1 661.58,463.5 662.53,468.1 663.49,472.1 664.44,475.7 665.40,478.9 666.35,482.0 667.31,484.9 668.26,487.7 669.22,490.4 670.17,493.0 671.13,495.7 672.08,498.4 673.04,501.1 673.99,504.0 674.95,507.1 675.90,510.5 676.86,514.2 677.81,518.6 678.77,524.0 679.72,531.0 680.68,541.5 681.63,562.1 682.59,578.7 683.54,544.4 684.50,529.8 685.45,519.7 686.41,511.6 687.36,504.4 688.32,497.6 689.27,490.6 690.23,483.2 691.18,474.5 692.14,463.3 693.09,445.7 694.05,340.9 695.00,442.7 695.96,458.2 696.91,466.9 697.87,472.8 698.82,477.3 699.78,481.0 700.73,484.0 701.69,486.6 702.64,488.8 703.60,490.8 704.55,492.6 705.51,494.2 706.46,495.8 707.42,497.1 708.37,498.4 709.33,499.7 710.28,500.8 711.24,501.9 712.19,502.9 713.15,503.9 714.10,504.9 715.06,505.8 716.01,506.6 716.97,507.5 717.92,508.3 718.88,509.0 719.83,509.8 720.79,510.5 721.74,511.3 722.70,511.9 723.65,512.6 724.61,513.3 725.56,513.9 726.52,514.6 727.47,515.2 728.43,515.8 729.38,516.4 730.34,516.9 731.29,517.5 732.25,518.1 733.20,518.6 734.16,519.2 735.11,519.7 736.07,520.2 737.02,520.7 737.98,521.2 738.93,521.7 739.89,522.2 740.84,522.7 741.80,523.2 742.75,523.6 743.71,524.1 744.66,524.6 745.62,525.0 746.57,525.5 747.53,525.9 748.48,526.3 749.44,526.8 750.39,527.2 751.35,527.6 752.30,528.0 753.26,528.5 754.21,528.9 755.17,529.3 756.12,529.7 757.08,530.1 758.03,530.5 758.99,530.9 759.94,531.3 760.90,531.6 761.85,532.0 762.81,532.4 763.76,532.8 764.72,533.1 765.67,533.5 766.63,533.9 767.58,534.2 768.54,534.6 769.49,535.0 770.45,535.3 771.40,535.7 772.36,536.0 773.31,536.4 774.27,536.7 775.22,537.0 776.18,537.4 777.13,537.7 778.09,538.0 779.04,538.4 780.00,538.7 780.95,539.0 781.91,539.4 782.86,539.7 783.82,540.0 784.77,540.3 785.73,540.6 786.68,541.0 787.64,541.3 788.59,541.6 789.55,541.9 790.50,542.2 791.46,542.5 792.41,542.8 793.37,543.1 794.32,543.4 795.28,543.7 796.23,544.0 797.19,544.3 798.14,544.6 799.10,544.9 800.05,545.2 801.01,545.5 801.96,545.8 802.92,546.1 803.87,546.4 804.83,546.6 805.78,546.9 806.74,547.2 807.69,547.5 808.65,547.8 809.60,548.0 810.56,548.3 811.51,548.6 812.47,548.9 813.42,549.1 814.38,549.4 815.33,549.7 816.29,550.0 817.24,550.2 818.20,550.5 819.15,550.8 820.11,551.0 821.06,551.3 822.02,551.5 822.97,551.8 823.93,552.1 824.88,552.3 825.84,552.6 826.79,552.8 827.75,553.1 828.70,553.4 829.66,553.6 830.61,553.9 831.57,554.1 832.52,554.4 833.48,554.6 834.43,554.9 835.39,555.1 836.34,555.4 837.30,555.6 838.25,555.9 839.21,556.1 840.16,556.3 841.12,556.6 842.07,556.8 843.03,557.1 843.98,557.3 844.94,557.6 845.89,557.8 846.85,558.0 847.80,558.3 848.76,558.5 849.71,558.7 850.67,559.0 851.62,559.2 852.58,559.4 853.53,559.7 854.49,559.9 855.44,560.1 856.40,560.4 857.35,560.6 858.31,560.8 859.26,561.1 860.22,561.3 861.17,561.5 862.13,561.7 863.08,562.0 864.04,562.2 864.99,562.4 865.95,562.6 866.90,562.9 867.86,563.1 868.81,563.3 869.77,563.5 870.72,563.7 871.68,564.0 872.63,564.2 873.59,564.4 874.54,564.6 875.50,564.8 876.45,565.0 877.41,565.3 878.36,565.5 879.32,565.7 880.27,565.9 881.23,566.1 882.18,566.3 883.14,566.5 884.09,566.8 885.05,567.0 886.00,567.2 886.96,567.4 887.91,567.6 888.87,567.8 889.82,568.0 890.78,568.2 891.73,568.4 892.69,568.6 893.64,568.8 894.60,569.0 895.55,569.2 896.51,569.5 897.46,569.7 898.42,569.9 899.37,570.1 900.33,570.3 901.28,570.5 902.24,570.7 903.19,570.9 904.15,571.1 905.10,571.3 906.06,571.5 907.01,571.7 907.97,571.9 908.92,572.1 909.88,572.3 910.83,572.5 911.79,572.7 912.74,572.9 913.70,573.0 914.65,573.2 915.61,573.4 916.56,573.6 917.52,573.8 918.47,574.0 919.43,574.2 920.38,574.4 921.34,574.6 922.29,574.8 923.25,575.0 924.20,575.2 925.16,575.4 926.11,575.6 927.07,575.7 928.02,575.9 928.98,576.1 929.93,576.3 930.89,576.5 931.84,576.7 932.80,576.9 933.75,577.1 934.71,577.2 935.66,577.4 936.62,577.6 937.57,577.8 938.53,578.0 939.48,578.2 940.44,578.4 941.39,578.5 942.35,578.7 943.30,578.9 944.26,579.1 945.21,579.3 946.17,579.5 947.12,579.6 948.08,579.8 949.03,580.0 949.99,580.2 950.94,580.4 951.90,580.5 952.85,580.7 953.81,580.9 954.76,581.1 955.72,581.2 956.67,581.4" fill="none" stroke="#d848f8" stroke-width="1.0" stroke-linejoin="round"/><polyline points="481.08,488.0 482.04,486.8 482.99,485.5 483.95,484.2 484.90,482.9 485.86,481.5 486.81,480.1 487.77,478.7 488.72,477.2 489.68,475.7 490.63,474.1 491.59,472.5 492.54,470.8 493.50,469.0 494.45,467.0 495.41,465.0 496.36,462.7 497.32,460.3 498.27,457.7 499.23,454.7 500.18,451.4 501.14,447.6 502.09,443.1 503.05,437.6 504.00,430.5 504.96,420.3 505.91,401.9 506.87,360.5 507.82,408.9 508.78,423.6 509.73,432.6 510.69,439.1 511.64,444.2 512.60,448.4 513.55,452.0 514.51,455.1 515.46,457.9 516.42,460.4 517.37,462.7 518.33,464.8 519.28,466.8 520.24,468.6 521.19,470.4 522.15,472.0 523.10,473.6 524.06,475.1 525.01,476.5 525.97,477.9 526.92,479.2 527.88,480.5 528.83,481.8 529.79,483.1 530.74,484.3 531.70,485.5 532.65,486.7 533.61,487.9 534.56,489.0 535.52,490.2 536.47,491.4 537.43,492.6 538.38,493.7 539.34,494.9 540.29,496.2 541.25,497.4 542.20,498.7 543.16,499.9 544.11,501.3 545.07,502.7 546.02,504.1 546.98,505.6 547.93,507.1 548.89,508.8 549.84,510.5 550.80,512.4 551.75,514.4 552.71,516.6 553.66,519.1 554.62,521.8 555.57,524.8 556.53,528.4 557.48,532.6 558.44,537.9 559.39,544.7 560.35,554.7 561.30,572.8 562.26,612.7 563.21,564.9 564.17,549.8 565.12,540.4 566.08,533.5 567.03,528.0 567.99,523.4 568.94,519.3 569.90,515.7 570.85,512.4 571.81,509.3 572.76,506.4 573.72,503.6 574.67,501.0 575.63,498.4 576.58,495.9 577.54,493.4 578.49,490.9 579.45,488.5 580.40,485.9 581.36,483.4 582.31,480.7 583.27,478.0 584.22,475.1 585.18,472.0 586.13,468.7 587.09,465.1 588.04,461.1 589.00,456.5 589.95,451.1 590.91,444.4 591.86,435.5 592.82,421.8 593.77,387.5 594.73,405.9 595.68,426.7 596.64,437.3 597.59,444.5 598.55,449.8 599.50,454.1 600.46,457.7 601.41,460.8 602.37,463.4 603.32,465.8 604.28,468.0 605.23,469.9 606.19,471.7 607.14,473.4 608.10,475.0 609.05,476.4 610.01,477.8 610.96,479.2 611.92,480.4 612.87,481.7 613.83,482.8 614.78,484.0 615.74,485.1 616.69,486.2 617.65,487.3 618.60,488.4 619.56,489.4 620.51,490.5 621.47,491.6 622.42,492.7 623.38,493.7 624.33,494.9 625.29,496.0 626.24,497.2 627.20,498.4 628.15,499.7 629.11,501.0 630.06,502.4 631.02,503.9 631.97,505.6 632.93,507.4 633.88,509.4 634.84,511.6 635.79,514.2 636.75,517.2 637.70,520.9 638.66,525.5 639.61,531.8 640.57,541.0 641.52,558.5 642.48,595.5 643.43,548.2 644.39,532.2 645.34,521.7 646.30,513.4 647.25,506.4 648.21,500.0 649.16,494.0 650.12,488.0 651.07,481.8 652.03,475.2 652.98,467.7 653.94,458.6 654.89,446.3 655.85,424.5 656.80,400.2 657.76,435.3 658.71,447.9 659.67,455.4 660.62,460.8 661.58,464.9 662.53,468.2 663.49,470.9 664.44,473.2 665.40,475.3 666.35,477.1 667.31,478.7 668.26,480.2 669.22,481.5 670.17,482.8 671.13,484.0 672.08,485.1 673.04,486.2 673.99,487.2 674.95,488.3 675.90,489.3 676.86,490.3 677.81,491.3 678.77,492.3 679.72,493.4 680.68,494.5 681.63,495.7 682.59,497.0 683.54,498.4 684.50,500.1 685.45,502.2 686.41,504.8 687.36,508.3 688.32,513.7 689.27,523.3 690.23,553.9 691.18,526.0 692.14,496.2 693.09,469.5 694.05,358.9 695.00,456.6 695.96,468.9 696.91,475.0 697.87,478.8 698.82,481.6 699.78,483.6 700.73,485.2 701.69,486.5 702.64,487.7 703.60,488.7 704.55,489.5 705.51,490.3 706.46,491.0 707.42,491.6 708.37,492.2 709.33,492.7 710.28,493.2 711.24,493.7 712.19,494.2 713.15,494.6 714.10,495.0 715.06,495.4 716.01,495.8 716.97,496.1 717.92,496.5 718.88,496.8 719.83,497.1 720.79,497.4 721.74,497.7 722.70,498.0 723.65,498.3 724.61,498.6 725.56,498.8 726.52,499.1 727.47,499.4 728.43,499.6 729.38,499.9 730.34,500.1 731.29,500.3 732.25,500.6 733.20,500.8 734.16,501.0 735.11,501.3 736.07,501.5 737.02,501.7 737.98,501.9 738.93,502.1 739.89,502.3 740.84,502.5 741.80,502.7 742.75,502.9 743.71,503.1 744.66,503.3 745.62,503.5 746.57,503.7 747.53,503.9 748.48,504.0 749.44,504.2 750.39,504.4 751.35,504.6 752.30,504.7 753.26,504.9 754.21,505.1 755.17,505.3 756.12,505.4 757.08,505.6 758.03,505.8 758.99,505.9 759.94,506.1 760.90,506.2 761.85,506.4 762.81,506.6 763.76,506.7 764.72,506.9 765.67,507.0 766.63,507.2 767.58,507.3 768.54,507.5 769.49,507.6 770.45,507.8 771.40,507.9 772.36,508.1 773.31,508.2 774.27,508.3 775.22,508.5 776.18,508.6 777.13,508.8 778.09,508.9 779.04,509.0 780.00,509.2 780.95,509.3 781.91,509.5 782.86,509.6 783.82,509.7 784.77,509.9 785.73,510.0 786.68,510.1 787.64,510.3 788.59,510.4 789.55,510.5 790.50,510.6 791.46,510.8 792.41,510.9 793.37,511.0 794.32,511.2 795.28,511.3 796.23,511.4 797.19,511.5 798.14,511.6 799.10,511.8 800.05,511.9 801.01,512.0 801.96,512.1 802.92,512.3 803.87,512.4 804.83,512.5 805.78,512.6 806.74,512.7 807.69,512.8 808.65,513.0 809.60,513.1 810.56,513.2 811.51,513.3 812.47,513.4 813.42,513.5 814.38,513.6 815.33,513.8 816.29,513.9 817.24,514.0 818.20,514.1 819.15,514.2 820.11,514.3 821.06,514.4 822.02,514.5 822.97,514.6 823.93,514.8 824.88,514.9 825.84,515.0 826.79,515.1 827.75,515.2 828.70,515.3 829.66,515.4 830.61,515.5 831.57,515.6 832.52,515.7 833.48,515.8 834.43,515.9 835.39,516.0 836.34,516.1 837.30,516.2 838.25,516.3 839.21,516.4 840.16,516.5 841.12,516.6 842.07,516.7 843.03,516.8 843.98,516.9 844.94,517.0 845.89,517.1 846.85,517.2 847.80,517.3 848.76,517.4 849.71,517.5 850.67,517.6 851.62,517.7 852.58,517.8 853.53,517.9 854.49,518.0 855.44,518.1 856.40,518.2 857.35,518.3 858.31,518.4 859.26,518.5 860.22,518.6 861.17,518.7 862.13,518.8 863.08,518.9 864.04,519.0 864.99,519.1 865.95,519.2 866.90,519.2 867.86,519.3 868.81,519.4 869.77,519.5 870.72,519.6 871.68,519.7 872.63,519.8 873.59,519.9 874.54,520.0 875.50,520.1 876.45,520.2 877.41,520.3 878.36,520.3 879.32,520.4 880.27,520.5 881.23,520.6 882.18,520.7 883.14,520.8 884.09,520.9 885.05,521.0 886.00,521.0 886.96,521.1 887.91,521.2 888.87,521.3 889.82,521.4 890.78,521.5 891.73,521.6 892.69,521.7 893.64,521.7 894.60,521.8 895.55,521.9 896.51,522.0 897.46,522.1 898.42,522.2 899.37,522.3 900.33,522.3 901.28,522.4 902.24,522.5 903.19,522.6 904.15,522.7 905.10,522.8 906.06,522.8 907.01,522.9 907.97,523.0 908.92,523.1 909.88,523.2 910.83,523.2 911.79,523.3 912.74,523.4 913.70,523.5 914.65,523.6 915.61,523.7 916.56,523.7 917.52,523.8 918.47,523.9 919.43,524.0 920.38,524.1 921.34,524.1 922.29,524.2 923.25,524.3 924.20,524.4 925.16,524.5 926.11,524.5 927.07,524.6 928.02,524.7 928.98,524.8 929.93,524.9 930.89,524.9 931.84,525.0 932.80,525.1 933.75,525.2 934.71,525.2 935.66,525.3 936.62,525.4 937.57,525.5 938.53,525.6 939.48,525.6 940.44,525.7 941.39,525.8 942.35,525.9 943.30,525.9 944.26,526.0 945.21,526.1 946.17,526.2 947.12,526.2 948.08,526.3 949.03,526.4 949.99,526.5 950.94,526.5 951.90,526.6 952.85,526.7 953.81,526.8 954.76,526.8 955.72,526.9 956.67,527.0" fill="none" stroke="#d84818" stroke-width="1.0" stroke-linejoin="round"/><polyline points="481.08,498.6 482.04,499.2 482.99,499.9 483.95,500.7 484.90,501.6 485.86,502.5 486.81,503.6 487.77,504.8 488.72,506.3 489.68,507.9 490.63,510.0 491.59,512.4 492.54,515.5 493.50,519.6 494.45,525.4 495.41,534.7 496.36,554.3 497.32,568.3 498.27,533.3 499.23,517.3 500.18,505.8 501.14,496.0 502.09,486.7 503.05,477.3 504.00,466.8 504.96,453.7 505.91,432.9 506.87,389.1 507.82,435.4 508.78,448.2 509.73,455.5 510.69,460.4 511.64,463.9 512.60,466.7 513.55,468.9 514.51,470.7 515.46,472.3 516.42,473.6 517.37,474.8 518.33,475.8 519.28,476.7 520.24,477.5 521.19,478.2 522.15,478.9 523.10,479.5 524.06,480.1 525.01,480.6 525.97,481.1 526.92,481.5 527.88,481.9 528.83,482.3 529.79,482.7 530.74,483.1 531.70,483.4 532.65,483.7 533.61,484.0 534.56,484.3 535.52,484.6 536.47,484.9 537.43,485.2 538.38,485.4 539.34,485.7 540.29,485.9 541.25,486.1 542.20,486.4 543.16,486.6 544.11,486.8 545.07,487.0 546.02,487.3 546.98,487.5 547.93,487.7 548.89,487.9 549.84,488.1 550.80,488.3 551.75,488.5 552.71,488.7 553.66,488.9 554.62,489.1 555.57,489.4 556.53,489.6 557.48,489.8 558.44,490.0 559.39,490.2 560.35,490.5 561.30,490.7 562.26,490.9 563.21,491.2 564.17,491.5 565.12,491.7 566.08,492.0 567.03,492.3 567.99,492.6 568.94,492.9 569.90,493.3 570.85,493.7 571.81,494.1 572.76,494.5 573.72,495.0 574.67,495.5 575.63,496.0 576.58,496.7 577.54,497.4 578.49,498.2 579.45,499.1 580.40,500.2 581.36,501.5 582.31,503.1 583.27,505.0 584.22,507.6 585.18,511.1 586.13,516.2 587.09,524.8 588.04,545.3 589.00,548.1 589.95,514.9 590.91,496.2 591.86,479.7 592.82,460.4 593.77,421.7 594.73,436.6 595.68,454.4 596.64,462.4 597.59,467.3 598.55,470.6 599.50,473.1 600.46,475.0 601.41,476.5 602.37,477.8 603.32,478.8 604.28,479.7 605.23,480.5 606.19,481.2 607.14,481.8 608.10,482.4 609.05,482.9 610.01,483.3 610.96,483.7 611.92,484.1 612.87,484.5 613.83,484.8 614.78,485.1 615.74,485.4 616.69,485.7 617.65,486.0 618.60,486.2 619.56,486.5 620.51,486.7 621.47,487.0 622.42,487.2 623.38,487.4 624.33,487.6 625.29,487.8 626.24,488.0 627.20,488.2 628.15,488.4 629.11,488.7 630.06,488.9 631.02,489.1 631.97,489.3 632.93,489.5 633.88,489.7 634.84,490.0 635.79,490.2 636.75,490.5 637.70,490.7 638.66,491.0 639.61,491.3 640.57,491.6 641.52,492.0 642.48,492.4 643.43,492.8 644.39,493.4 645.34,493.9 646.30,494.6 647.25,495.5 648.21,496.6 649.16,497.9 650.12,499.8 651.07,502.5 652.03,507.0 652.98,516.0 653.94,553.8 654.89,506.3 655.85,467.3 656.80,434.0 657.76,463.2 658.71,471.4 659.67,475.7 660.62,478.3 661.58,480.1 662.53,481.4 663.49,482.4 664.44,483.3 665.40,483.9 666.35,484.5 667.31,485.0 668.26,485.4 669.22,485.8 670.17,486.1 671.13,486.4 672.08,486.7 673.04,487.0 673.99,487.2 674.95,487.5 675.90,487.7 676.86,487.9 677.81,488.1 678.77,488.3 679.72,488.5 680.68,488.7 681.63,488.9 682.59,489.2 683.54,489.4 684.50,489.6 685.45,489.9 686.41,490.3 687.36,490.6 688.32,491.1 689.27,491.8 690.23,492.7 691.18,494.3 692.14,497.8 693.09,512.4 694.05,396.7 695.00,477.3 695.96,482.5 696.91,484.6 697.87,485.7 698.82,486.5 699.78,487.0 700.73,487.4 701.69,487.7 702.64,487.9 703.60,488.1 704.55,488.3 705.51,488.5 706.46,488.6 707.42,488.8 708.37,488.9 709.33,489.0 710.28,489.1 711.24,489.2 712.19,489.3 713.15,489.4 714.10,489.5 715.06,489.6 716.01,489.6 716.97,489.7 717.92,489.8 718.88,489.8 719.83,489.9 720.79,490.0 721.74,490.0 722.70,490.1 723.65,490.1 724.61,490.2 725.56,490.2 726.52,490.3 727.47,490.4 728.43,490.4 729.38,490.5 730.34,490.5 731.29,490.5 732.25,490.6 733.20,490.6 734.16,490.7 735.11,490.7 736.07,490.8 737.02,490.8 737.98,490.9 738.93,490.9 739.89,490.9 740.84,491.0 741.80,491.0 742.75,491.1 743.71,491.1 744.66,491.1 745.62,491.2 746.57,491.2 747.53,491.3 748.48,491.3 749.44,491.3 750.39,491.4 751.35,491.4 752.30,491.4 753.26,491.5 754.21,491.5 755.17,491.5 756.12,491.6 757.08,491.6 758.03,491.6 758.99,491.7 759.94,491.7 760.90,491.7 761.85,491.8 762.81,491.8 763.76,491.8 764.72,491.9 765.67,491.9 766.63,491.9 767.58,491.9 768.54,492.0 769.49,492.0 770.45,492.0 771.40,492.1 772.36,492.1 773.31,492.1 774.27,492.1 775.22,492.2 776.18,492.2 777.13,492.2 778.09,492.3 779.04,492.3 780.00,492.3 780.95,492.3 781.91,492.4 782.86,492.4 783.82,492.4 784.77,492.5 785.73,492.5 786.68,492.5 787.64,492.5 788.59,492.6 789.55,492.6 790.50,492.6 791.46,492.6 792.41,492.7 793.37,492.7 794.32,492.7 795.28,492.7 796.23,492.8 797.19,492.8 798.14,492.8 799.10,492.8 800.05,492.9 801.01,492.9 801.96,492.9 802.92,492.9 803.87,493.0 804.83,493.0 805.78,493.0 806.74,493.0 807.69,493.0 808.65,493.1 809.60,493.1 810.56,493.1 811.51,493.1 812.47,493.2 813.42,493.2 814.38,493.2 815.33,493.2 816.29,493.3 817.24,493.3 818.20,493.3 819.15,493.3 820.11,493.3 821.06,493.4 822.02,493.4 822.97,493.4 823.93,493.4 824.88,493.5 825.84,493.5 826.79,493.5 827.75,493.5 828.70,493.5 829.66,493.6 830.61,493.6 831.57,493.6 832.52,493.6 833.48,493.6 834.43,493.7 835.39,493.7 836.34,493.7 837.30,493.7 838.25,493.7 839.21,493.8 840.16,493.8 841.12,493.8 842.07,493.8 843.03,493.8 843.98,493.9 844.94,493.9 845.89,493.9 846.85,493.9 847.80,493.9 848.76,494.0 849.71,494.0 850.67,494.0 851.62,494.0 852.58,494.0 853.53,494.1 854.49,494.1 855.44,494.1 856.40,494.1 857.35,494.1 858.31,494.2 859.26,494.2 860.22,494.2 861.17,494.2 862.13,494.2 863.08,494.3 864.04,494.3 864.99,494.3 865.95,494.3 866.90,494.3 867.86,494.3 868.81,494.4 869.77,494.4 870.72,494.4 871.68,494.4 872.63,494.4 873.59,494.5 874.54,494.5 875.50,494.5 876.45,494.5 877.41,494.5 878.36,494.5 879.32,494.6 880.27,494.6 881.23,494.6 882.18,494.6 883.14,494.6 884.09,494.7 885.05,494.7 886.00,494.7 886.96,494.7 887.91,494.7 888.87,494.7 889.82,494.8 890.78,494.8 891.73,494.8 892.69,494.8 893.64,494.8 894.60,494.8 895.55,494.9 896.51,494.9 897.46,494.9 898.42,494.9 899.37,494.9 900.33,494.9 901.28,495.0 902.24,495.0 903.19,495.0 904.15,495.0 905.10,495.0 906.06,495.0 907.01,495.1 907.97,495.1 908.92,495.1 909.88,495.1 910.83,495.1 911.79,495.1 912.74,495.2 913.70,495.2 914.65,495.2 915.61,495.2 916.56,495.2 917.52,495.2 918.47,495.3 919.43,495.3 920.38,495.3 921.34,495.3 922.29,495.3 923.25,495.3 924.20,495.4 925.16,495.4 926.11,495.4 927.07,495.4 928.02,495.4 928.98,495.4 929.93,495.5 930.89,495.5 931.84,495.5 932.80,495.5 933.75,495.5 934.71,495.5 935.66,495.5 936.62,495.6 937.57,495.6 938.53,495.6 939.48,495.6 940.44,495.6 941.39,495.6 942.35,495.7 943.30,495.7 944.26,495.7 945.21,495.7 946.17,495.7 947.12,495.7 948.08,495.7 949.03,495.8 949.99,495.8 950.94,495.8 951.90,495.8 952.85,495.8 953.81,495.8 954.76,495.8 955.72,495.9 956.67,495.9" fill="none" stroke="#ffffff" stroke-width="1.0" stroke-linejoin="round"/><g font-family="Liberation Sans" font-size="13" fill="#b8b8b8"><text x="486.5" y="393.2">40 dB</text><text x="486.5" y="501.6">0 dB</text><text x="486.5" y="610">-40 dB</text><text x="486.5" y="701.5">-80 dB</text><text x="577.5" y="716.2">316e-3</text><text x="806" y="716.2">320e-3</text></g></svg></div><div class="a" style="left:396px;top:370px;width:59px;height:87px;background:#cfccc6;border:1px solid #808080;box-shadow:inset 1px 1px 0 #fff"></div><div class="a" style="left:397px;top:371px;width:57px;height:7px;background:#909090"></div><div class="a" style="left:398px;top:378px;width:55px;height:77px;background:#fff"></div><div class="a" style="left:399px;top:380.0px;width:20px;height:11px;background:#80f040;border:1px solid #404040"></div><div class="t" style="left:421px;top:381.5px;font-size:9.5px;color:#000;transform:scaleX(0.864);">V(C42)</div><div class="a" style="left:399px;top:392.6px;width:20px;height:11px;background:#80f0ff;border:1px solid #404040"></div><div class="t" style="left:421px;top:394.1px;font-size:9.5px;color:#000;transform:scaleX(0.864);">V(C37)</div><div class="a" style="left:399px;top:405.2px;width:20px;height:11px;background:#ffff40;border:1px solid #404040"></div><div class="t" style="left:421px;top:406.7px;font-size:9.5px;color:#000;transform:scaleX(0.864);">V(C23)</div><div class="a" style="left:399px;top:417.8px;width:20px;height:11px;background:#e040ff;border:1px solid #404040"></div><div class="t" style="left:421px;top:419.3px;font-size:9.5px;color:#000;transform:scaleX(0.864);">V(C12)</div><div class="a" style="left:399px;top:430.4px;width:20px;height:11px;background:#d04010;border:1px solid #404040"></div><div class="t" style="left:421px;top:431.9px;font-size:9.5px;color:#000;transform:scaleX(0.846);">V(C5)</div><div class="a" style="left:399px;top:443.0px;width:20px;height:11px;background:#ffffff;border:1px solid #404040;box-shadow:inset 0 0 0 1px #c0c0c0"></div><div class="a" style="left:419px;top:443.0px;width:33px;height:12px;background:#0a246a"></div><div class="t" style="left:421px;top:444.5px;font-size:9.5px;color:#fff;transform:scaleX(1.048);">V(C1)</div><div class="a" style="left:891px;top:369px;width:59px;height:87px;background:#cfccc6;border:1px solid #808080;box-shadow:inset 1px 1px 0 #fff"></div><div class="a" style="left:892px;top:370px;width:57px;height:7px;background:#909090"></div><div class="a" style="left:893px;top:377px;width:55px;height:77px;background:#fff"></div><div class="a" style="left:894px;top:379.0px;width:20px;height:11px;background:#80f040;border:1px solid #404040"></div><div class="t" style="left:916px;top:380.5px;font-size:9.5px;color:#000;transform:scaleX(0.864);">V(C42)</div><div class="a" style="left:894px;top:391.6px;width:20px;height:11px;background:#80f0ff;border:1px solid #404040"></div><div class="t" style="left:916px;top:393.1px;font-size:9.5px;color:#000;transform:scaleX(0.864);">V(C37)</div><div class="a" style="left:894px;top:404.2px;width:20px;height:11px;background:#ffff40;border:1px solid #404040"></div><div class="t" style="left:916px;top:405.7px;font-size:9.5px;color:#000;transform:scaleX(0.864);">V(C23)</div><div class="a" style="left:894px;top:416.8px;width:20px;height:11px;background:#e040ff;border:1px solid #404040"></div><div class="t" style="left:916px;top:418.3px;font-size:9.5px;color:#000;transform:scaleX(0.864);">V(C12)</div><div class="a" style="left:894px;top:429.4px;width:20px;height:11px;background:#d04010;border:1px solid #404040"></div><div class="t" style="left:916px;top:430.9px;font-size:9.5px;color:#000;transform:scaleX(0.846);">V(C5)</div><div class="a" style="left:894px;top:442.0px;width:20px;height:11px;background:#ffffff;border:1px solid #404040;box-shadow:inset 0 0 0 1px #c0c0c0"></div><div class="a" style="left:914px;top:442.0px;width:33px;height:12px;background:#0a246a"></div><div class="t" style="left:916px;top:443.5px;font-size:9.5px;color:#fff;transform:scaleX(1.048);">V(C1)</div><div class="a" style="left:10px;top:365px;width:6px;height:6px;border:1px solid #c0c0c0"></div><svg style="left:8px;top:372px" width="4" height="344" viewBox="0 0 4 344"><path d="M0.5 0.0 L3 2.6 L0.5 3.4 Z M0.5 4.2 L3 6.8 L0.5 7.6 Z M0.5 8.4 L3 11.0 L0.5 11.8 Z M0.5 12.6 L3 15.2 L0.5 16.0 Z M0.5 16.8 L3 19.4 L0.5 20.2 Z M0.5 21.0 L3 23.6 L0.5 24.4 Z M0.5 25.2 L3 27.8 L0.5 28.6 Z M0.5 29.4 L3 32.0 L0.5 32.8 Z M0.5 33.6 L3 36.2 L0.5 37.0 Z M0.5 37.8 L3 40.4 L0.5 41.2 Z M0.5 42.0 L3 44.6 L0.5 45.4 Z M0.5 46.2 L3 48.8 L0.5 49.6 Z M0.5 50.4 L3 53.0 L0.5 53.8 Z M0.5 54.6 L3 57.2 L0.5 58.0 Z M0.5 58.8 L3 61.4 L0.5 62.2 Z M0.5 63.0 L3 65.6 L0.5 66.4 Z M0.5 67.2 L3 69.8 L0.5 70.6 Z M0.5 71.4 L3 74.0 L0.5 74.8 Z M0.5 75.6 L3 78.2 L0.5 79.0 Z M0.5 79.8 L3 82.4 L0.5 83.2 Z M0.5 84.0 L3 86.6 L0.5 87.4 Z M0.5 88.2 L3 90.8 L0.5 91.6 Z M0.5 92.4 L3 95.0 L0.5 95.8 Z M0.5 96.6 L3 99.2 L0.5 100.0 Z M0.5 100.8 L3 103.4 L0.5 104.2 Z M0.5 105.0 L3 107.6 L0.5 108.4 Z M0.5 109.2 L3 111.8 L0.5 112.6 Z M0.5 113.4 L3 116.0 L0.5 116.8 Z M0.5 117.6 L3 120.2 L0.5 121.0 Z M0.5 121.8 L3 124.4 L0.5 125.2 Z M0.5 126.0 L3 128.6 L0.5 129.4 Z M0.5 130.2 L3 132.8 L0.5 133.6 Z M0.5 134.4 L3 137.0 L0.5 137.8 Z M0.5 138.6 L3 141.2 L0.5 142.0 Z M0.5 142.8 L3 145.4 L0.5 146.2 Z M0.5 147.0 L3 149.6 L0.5 150.4 Z M0.5 151.2 L3 153.8 L0.5 154.6 Z M0.5 155.4 L3 158.0 L0.5 158.8 Z M0.5 159.6 L3 162.2 L0.5 163.0 Z M0.5 163.8 L3 166.4 L0.5 167.2 Z M0.5 168.0 L3 170.6 L0.5 171.4 Z M0.5 172.2 L3 174.8 L0.5 175.6 Z M0.5 176.4 L3 179.0 L0.5 179.8 Z M0.5 180.6 L3 183.2 L0.5 184.0 Z M0.5 184.8 L3 187.4 L0.5 188.2 Z M0.5 189.0 L3 191.6 L0.5 192.4 Z M0.5 193.2 L3 195.8 L0.5 196.6 Z M0.5 197.4 L3 200.0 L0.5 200.8 Z M0.5 201.6 L3 204.2 L0.5 205.0 Z M0.5 205.8 L3 208.4 L0.5 209.2 Z M0.5 210.0 L3 212.6 L0.5 213.4 Z M0.5 214.2 L3 216.8 L0.5 217.6 Z M0.5 218.4 L3 221.0 L0.5 221.8 Z M0.5 222.6 L3 225.2 L0.5 226.0 Z M0.5 226.8 L3 229.4 L0.5 230.2 Z M0.5 231.0 L3 233.6 L0.5 234.4 Z M0.5 235.2 L3 237.8 L0.5 238.6 Z M0.5 239.4 L3 242.0 L0.5 242.8 Z M0.5 243.6 L3 246.2 L0.5 247.0 Z M0.5 247.8 L3 250.4 L0.5 251.2 Z M0.5 252.0 L3 254.6 L0.5 255.4 Z M0.5 256.2 L3 258.8 L0.5 259.6 Z M0.5 260.4 L3 263.0 L0.5 263.8 Z M0.5 264.6 L3 267.2 L0.5 268.0 Z M0.5 268.8 L3 271.4 L0.5 272.2 Z M0.5 273.0 L3 275.6 L0.5 276.4 Z M0.5 277.2 L3 279.8 L0.5 280.6 Z M0.5 281.4 L3 284.0 L0.5 284.8 Z M0.5 285.6 L3 288.2 L0.5 289.0 Z M0.5 289.8 L3 292.4 L0.5 293.2 Z M0.5 294.0 L3 296.6 L0.5 297.4 Z M0.5 298.2 L3 300.8 L0.5 301.6 Z M0.5 302.4 L3 305.0 L0.5 305.8 Z M0.5 306.6 L3 309.2 L0.5 310.0 Z M0.5 310.8 L3 313.4 L0.5 314.2 Z M0.5 315.0 L3 317.6 L0.5 318.4 Z M0.5 319.2 L3 321.8 L0.5 322.6 Z M0.5 323.4 L3 326.0 L0.5 326.8 Z M0.5 327.6 L3 330.2 L0.5 331.0 Z M0.5 331.8 L3 334.4 L0.5 335.2 Z M0.5 336.0 L3 338.6 L0.5 339.4 Z M0.5 340.2 L3 342.8 L0.5 343.6 Z " fill="#d8d8d4"/></svg><svg style="left:10px;top:136px" width="14" height="14" viewBox="0 0 14 14"><rect x="1" y="1" width="12" height="12" rx="2.5" fill="#fff" stroke="#4848f0" stroke-width="1.3"/><path d="M2.5 7 H11.5 M4.5 3.8 V10.2 L8 7 Z M8.6 3.8 V10.2" stroke="#3030e0" stroke-width="1.1" fill="none"/></svg><svg style="left:10px;top:349px" width="14" height="14" viewBox="0 0 14 14"><rect x="1" y="1" width="12" height="12" rx="2.5" fill="#fff" stroke="#5a9a40" stroke-width="1.3"/><path d="M3 10 V4 H6 V10 H9 V4 H11" stroke="#4a8a30" stroke-width="1.1" fill="none"/></svg><svg style="left:483px;top:348px" width="14" height="14" viewBox="0 0 14 14"><rect x="1" y="1" width="12" height="12" rx="2.5" fill="#fff" stroke="#e06040" stroke-width="1.3"/><path d="M2.5 8 C4 3.5,6 3.5,7 7 C8 10.5,10 10.5,11.5 6" stroke="#d020f0" stroke-width="1.6" fill="none"/></svg><svg style="left:0px;top:0px" width="1000" height="749" viewBox="0 0 1000 749"><path d="M985 131.5 V143 L988 140.5 L990 145 L991.5 144 L989.5 140 L993 139.5 Z" fill="#fff" stroke="#000" stroke-width=".9"/><rect x="981.5" y="149.5" width="11" height="7" fill="#d8d8d8" stroke="#808080"/><path d="M987 152 V162 L989.5 160 L991.5 164 L993 163 L991 159 L994 158.5 Z" fill="#fff" stroke="#000" stroke-width=".9"/><path d="M982 172 L985 176.5 Q987 179 990 179 Q994 178.5 994 173 V167.5 Q992.5 166 991.5 168 V166 Q990 164.5 989 166.5 V165.5 Q987.5 164 986.5 166 V167 Q985 165.5 984 167.5 V173.5 L983 171 Q982 170.5 982 172 Z" fill="#fff" stroke="#000" stroke-width=".9"/><path d="M984 189 H992" stroke="#000" stroke-width="1.4"/><path d="M983 189 l3 -2.5 v5 z M993 189 l-3 -2.5 v5 z" fill="#000"/><path d="M982 206 H994" stroke="#000" stroke-width="1.4"/><path d="M987 206 l-3 -2.5 v5 z M989 206 l3 -2.5 v5 z" fill="#000"/><path d="M988 202.5 V209.5" stroke="#000"/><rect x="981.5" y="218" width="13" height="12.5" fill="#fff" stroke="#4848f0" stroke-width="1.5"/><path d="M984.8 224 H991.2" stroke="#000" stroke-width="1.4"/><path d="M983.8 224 l3 -2.5 v5 z M992.2 224 l-3 -2.5 v5 z" fill="#000"/><rect x="981.5" y="235" width="13" height="12.5" fill="#fff" stroke="#4848f0" stroke-width="1.5"/><path d="M986.5 236 V246 M989.5 236 V246" stroke="#3838f0" stroke-width="1"/><path d="M982 243 H986 M990 243 H994" stroke="#000" stroke-width="1.2"/><path d="M981.5 243 l2.5 -2 v4 z M994.5 243 l-2.5 -2 v4 z" fill="#000"/><path d="M988 254 V262" stroke="#000" stroke-width="1.4"/><path d="M988 253 l-2.5 3 h5 z M988 263 l-2.5 -3 h5 z" fill="#000"/><path d="M988 268 V282" stroke="#000" stroke-width="1.3"/><path d="M988 274.2 l-2.6 -3 h5.2 z M988 275.8 l-2.6 3 h5.2 z" fill="#000"/><path d="M985 275 H991" stroke="#000" stroke-width=".8"/><rect x="981.5" y="287" width="13" height="12.5" fill="#fff" stroke="#4848f0" stroke-width="1.5"/><path d="M988 290 V296" stroke="#000" stroke-width="1.4"/><path d="M988 289 l-2.5 3 h5 z M988 297 l-2.5 -3 h5 z" fill="#000"/><rect x="981.5" y="304" width="13" height="12.5" fill="#fff" stroke="#4848f0" stroke-width="1.5"/><path d="M983.5 310 H992.5 M988 305.5 V314.5" stroke="#000" stroke-width="1.1"/><path d="M982.5 310 l2.5 -2 v4 z M993.5 310 l-2.5 -2 v4 z M988 304.5 l-2 2.5 h4 z M988 315.5 l-2 -2.5 h4 z" fill="#000"/><path d="M984 324 L983 328 L987 327.5 M983 327.5 Q988 322 991.5 325.5 Q993 328 990 331" fill="none" stroke="#a8a8a8" stroke-width="1.1"/><path d="M992 342 L993 346 L989 345.5 M993 345.5 Q988 340 984.5 343.5 Q983 346 986 349" fill="none" stroke="#a8a8a8" stroke-width="1.1"/><rect x="983" y="357" width="8" height="5" fill="#60d060" stroke="#2030c0"/><path d="M987 362 L990 365" stroke="#2030c0"/><path d="M982 367 Q985 364 988 367 Q991 370 994 367" stroke="#404040" fill="none"/><path d="M983 376 L989 373.5 L993 376 L987 378.5 Z" fill="#60c0f0" stroke="#2030c0"/><path d="M983 379 L989 376.5 L993 379 L987 381.5 Z" fill="#60d060" stroke="#2030c0"/><path d="M983 382 L989 379.5 L993 382 L987 384.5 Z" fill="#4060f0" stroke="#2030c0"/><rect x="979.5" y="388.5" width="17" height="16" fill="#e4e2dc" stroke="#ffffff"/><path d="M979.5 404.5 V388.5 H996.5" stroke="#808080" fill="none"/><path d="M985 391 V401 M991 391 V401 M985 391 Q982 391.5 982 394 Q982 396.5 985 396.5 M991 391 Q994 391.5 994 394 Q994 396.5 991 396.5" stroke="#3030e0" stroke-width="1.3" fill="none"/><rect x="981.5" y="408.5" width="13" height="11" fill="#fff" stroke="#303030"/><path d="M981.5 411.5 H994.5 M981.5 414 H994.5 M981.5 416.5 H994.5 M985 408.5 V419.5 M988 408.5 V419.5 M991 408.5 V419.5" stroke="#3050c0" stroke-width=".8"/><rect x="979.5" y="423.5" width="17" height="17" fill="#e4e2dc" stroke="#ffffff"/><path d="M979.5 440.5 V423.5 H996.5" stroke="#808080" fill="none"/><rect x="982.5" y="425.5" width="11" height="13" fill="#fff" stroke="#303030"/><path d="M984.5 428.5 H991.5" stroke="#e03030" stroke-width="1.6"/><path d="M984.5 431.5 H991.5" stroke="#30b030" stroke-width="1.6"/><path d="M984.5 434.5 H991.5" stroke="#3050e0" stroke-width="1.6"/><path d="M982 455 L988 449 L994 455" stroke="#202020" fill="none"/><path d="M988 444 V456" stroke="#3030e0" stroke-width="1.1"/><path d="M982 446 H987" stroke="#000"/><path d="M987 446 l-3 -2 v4 z" fill="#000"/><path d="M982 472 L988 466 L994 472" stroke="#202020" fill="none"/><path d="M988 461 V473" stroke="#3030e0" stroke-width="1.1"/><path d="M994 463 H989" stroke="#000"/><path d="M989 463 l3 -2 v4 z" fill="#000"/><path d="M982 482 L988 488 L994 482" stroke="#202020" fill="none"/><path d="M988 477 V489" stroke="#3030e0" stroke-width="1.1"/><path d="M982 479 H987" stroke="#000"/><path d="M987 479 l-3 -2 v4 z" fill="#000"/><path d="M982 499 L988 505 L994 499" stroke="#202020" fill="none"/><path d="M988 494 V506" stroke="#3030e0" stroke-width="1.1"/><path d="M994 496 H989" stroke="#000"/><path d="M989 496 l3 -2 v4 z" fill="#000"/><path d="M981 522 H994" stroke="#a0a0a0"/><path d="M982 516 L992 526" stroke="#202020"/><path d="M988.5 512 V525" stroke="#3030e0" stroke-width="1.1"/><path d="M982 515 H987" stroke="#000"/><path d="M987 515 l-3 -2 v4 z" fill="#000"/><path d="M981 539.5 H994" stroke="#a0a0a0"/><path d="M982 533 L992 543" stroke="#202020"/><path d="M988.5 529 V542" stroke="#3030e0" stroke-width="1.1"/><path d="M995 532 H990" stroke="#000"/><path d="M990 532 l3 -2 v4 z" fill="#000"/></svg><div class="a" style="left:9px;top:728px;width:466px;height:11px;background:#cfccc6"></div><div class="a" style="left:9px;top:728px;width:203px;height:1px;background:#404040"></div><div class="a" style="left:211px;top:728px;width:1px;height:10px;background:#404040"></div><svg style="left:9px;top:728px" width="40" height="11" viewBox="0 0 40 11"><polygon points="6,0.5 11,11 27,11 31,0.5" fill="#fff" stroke="#404040"/></svg><div class="t" style="left:21px;top:730px;font-size:10px;color:#000;transform:scaleX(0.818);">Run</div><div class="a" style="left:213px;top:729px;width:1px;height:10px;background:#fff"></div><div class="a" style="left:216px;top:729px;width:77px;height:10px;border-top:1px solid #808080;border-left:1px solid #808080"></div><div class="a" style="left:296px;top:729px;width:42px;height:10px;border-top:1px solid #808080;border-left:1px solid #808080"></div><div class="a" style="left:341px;top:729px;width:30px;height:10px;border-top:1px solid #808080;border-left:1px solid #808080"></div><div class="a" style="left:373px;top:729px;width:24px;height:10px;border-top:1px solid #808080;border-left:1px solid #808080"></div><div class="a" style="left:399px;top:729px;width:76px;height:10px;border-top:1px solid #808080;border-left:1px solid #808080"></div><div class="a" style="left:9px;top:728px;width:465px;height:10px;overflow:hidden"><div class="a" style="left:-9px;top:-728px;width:1000px;height:749px"><div class="t" style="left:309px;top:730.5px;font-size:9.5px;color:#000;transform:scaleX(0.963);">1.0 MB</div><div class="t" style="left:346px;top:730.5px;font-size:9.5px;color:#a0a0a0;transform:scaleX(1.052);">Shift</div><div class="t" style="left:378px;top:730.5px;font-size:9.5px;color:#a0a0a0;transform:scaleX(0.947);">Ctrl</div><div class="t" style="left:401px;top:730.5px;font-size:9.5px;color:#000;transform:scaleX(0.941);">Click to move cursor</div></div></div><div class="a" style="left:482px;top:735px;width:490px;height:4px;background:#cfccc6"></div><div class="a" style="left:482px;top:735px;width:408px;height:1px;background:#404040"></div><svg style="left:482px;top:735px" width="40" height="4" viewBox="0 0 40 4"><polygon points="6,0.5 9,5 30,5 34,0.5" fill="#fff" stroke="#404040"/></svg><div class="a" style="left:890px;top:735px;width:1px;height:4px;background:#404040"></div><div class="a" style="left:895px;top:736px;width:80px;height:3px;border-top:1px solid #808080;border-left:1px solid #808080"></div></body></html>
